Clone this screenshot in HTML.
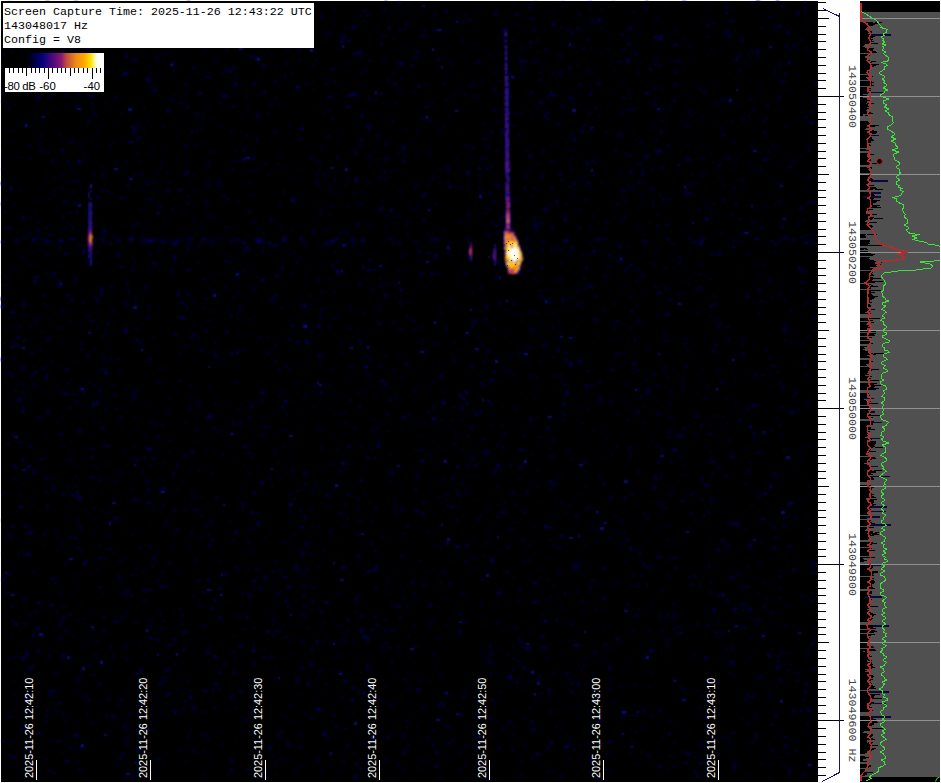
<!DOCTYPE html><html><head><meta charset="utf-8"><style>html,body{margin:0;padding:0;background:#fff;width:941px;height:783px;overflow:hidden}svg{position:absolute;left:0;top:0;display:block}</style></head><body>
<svg width="941" height="783" viewBox="0 0 941 783">
<defs>
<linearGradient id="cb" x1="5" x2="104" y1="0" y2="0" gradientUnits="userSpaceOnUse"><stop offset="0" stop-color="#000"/><stop offset="0.22" stop-color="#000"/><stop offset="0.37" stop-color="#00007a"/><stop offset="0.5" stop-color="#5a0a80"/><stop offset="0.57" stop-color="#8a1a70"/><stop offset="0.62" stop-color="#c04a40"/><stop offset="0.72" stop-color="#f08a18"/><stop offset="0.8" stop-color="#ffa800"/><stop offset="0.865" stop-color="#ffe000"/><stop offset="0.91" stop-color="#fff8b0"/><stop offset="0.94" stop-color="#fff"/><stop offset="1" stop-color="#fff"/></linearGradient>
<filter id="bl" x="-5%" y="-5%" width="110%" height="110%"><feGaussianBlur stdDeviation="1.0"/></filter><filter id="bl2" x="-50%" y="-50%" width="200%" height="200%"><feGaussianBlur stdDeviation="1.6"/></filter>
<linearGradient id="sg1" x1="0" x2="0" y1="186" y2="263" gradientUnits="userSpaceOnUse"><stop offset="0" stop-color="#101060"/><stop offset="0.15" stop-color="#000010"/><stop offset="0.25" stop-color="#1a1a80"/><stop offset="0.45" stop-color="#2a20a0"/><stop offset="0.52" stop-color="#8a2a88"/><stop offset="0.66" stop-color="#f09040"/><stop offset="0.78" stop-color="#8a2a88"/><stop offset="0.88" stop-color="#2a20a0"/><stop offset="1" stop-color="#1a1a80"/></linearGradient>
<linearGradient id="trail" x1="0" x2="0" y1="28" y2="232" gradientUnits="userSpaceOnUse"><stop offset="0" stop-color="#0a0a50"/><stop offset="0.1" stop-color="#14147a"/><stop offset="0.4" stop-color="#2420a0"/><stop offset="0.65" stop-color="#3a20b0"/><stop offset="0.82" stop-color="#5a1aa0"/><stop offset="0.93" stop-color="#8a2888"/><stop offset="1" stop-color="#c05040"/></linearGradient>
<filter id="bl3" x="-50%" y="-10%" width="200%" height="120%"><feGaussianBlur stdDeviation="1.0"/></filter>
</defs>
<rect x="1" y="1" width="817" height="781" fill="#000"/>
<g filter="url(#bl)"><path d="M353 55h3v1h-3zM674 97h4v1h-4zM236 113h3v2h-3zM84 445h2v1h-2zM344 749h4v2h-4zM137 92h3v2h-3zM136 313h2v3h-2zM780 118h2v2h-2zM10 647h3v1h-3zM773 478h2v3h-2zM394 67h3v2h-3zM120 423h4v2h-4zM740 277h4v2h-4zM667 576h4v3h-4zM290 23h3v3h-3zM778 284h2v3h-2zM354 495h3v3h-3zM205 228h4v2h-4zM212 326h3v3h-3zM433 408h3v2h-3zM496 604h2v3h-2zM504 94h4v3h-4zM684 107h3v2h-3zM60 188h3v1h-3zM228 623h2v2h-2zM755 209h4v2h-4zM764 755h2v2h-2zM363 523h2v2h-2zM564 36h3v3h-3zM203 604h2v2h-2zM326 33h3v2h-3zM503 501h2v2h-2zM11 48h2v2h-2zM797 729h3v1h-3zM171 736h4v1h-4zM722 548h3v3h-3zM766 153h3v2h-3zM294 334h2v2h-2zM83 650h2v2h-2zM525 223h4v2h-4zM140 323h3v2h-3zM137 126h3v2h-3zM446 190h4v1h-4zM307 264h3v2h-3zM792 194h2v2h-2zM526 237h3v3h-3zM569 88h4v2h-4zM429 426h3v2h-3zM751 43h4v2h-4zM339 553h3v2h-3zM138 3h3v3h-3zM661 597h2v3h-2zM51 716h2v2h-2zM417 305h3v1h-3zM720 769h2v2h-2zM635 229h3v2h-3zM53 196h4v2h-4zM4 687h3v2h-3zM33 229h2v2h-2zM631 518h4v2h-4zM178 287h2v2h-2zM648 517h4v1h-4zM532 310h3v2h-3zM630 102h2v3h-2zM675 143h3v2h-3zM313 96h2v1h-2zM410 140h3v3h-3zM660 312h3v3h-3zM108 690h2v2h-2zM409 716h3v2h-3zM260 29h2v2h-2zM554 697h3v1h-3zM306 288h3v1h-3zM597 582h3v3h-3zM340 284h3v2h-3zM499 36h4v2h-4zM110 729h2v3h-2zM661 753h4v2h-4zM203 703h4v1h-4zM331 185h2v1h-2zM499 511h3v2h-3zM143 776h2v1h-2zM385 413h2v3h-2zM571 25h2v1h-2zM88 161h2v1h-2zM672 492h2v2h-2zM80 590h3v2h-3zM345 17h3v1h-3zM694 482h3v1h-3zM355 408h2v1h-2zM90 496h4v1h-4zM349 424h2v3h-2zM284 255h3v2h-3zM131 256h2v2h-2zM597 339h2v2h-2zM169 303h3v3h-3zM516 12h2v2h-2zM204 79h2v2h-2zM632 270h3v2h-3zM452 206h2v3h-2zM519 495h4v1h-4zM395 699h3v2h-3zM232 267h2v2h-2zM711 269h3v1h-3zM270 247h4v1h-4zM325 85h3v1h-3zM703 144h2v3h-2zM627 427h3v2h-3zM804 668h2v2h-2zM584 9h4v1h-4zM708 565h2v2h-2zM476 760h3v3h-3zM262 209h2v2h-2zM552 363h3v1h-3zM645 358h3v1h-3zM388 459h2v1h-2zM328 403h2v3h-2zM258 24h4v1h-4zM207 30h2v3h-2zM772 708h4v3h-4zM751 550h3v2h-3zM83 248h2v2h-2zM584 152h2v1h-2zM512 112h2v2h-2zM581 431h2v2h-2zM341 192h4v2h-4zM456 650h2v2h-2zM352 204h2v1h-2zM318 324h3v2h-3zM423 271h3v1h-3zM470 699h2v3h-2zM755 575h4v3h-4zM426 547h2v2h-2zM664 660h4v2h-4zM780 727h3v1h-3zM297 413h3v2h-3zM411 17h3v3h-3zM512 628h2v2h-2zM100 11h2v2h-2zM93 271h2v2h-2zM26 260h4v3h-4zM264 254h2v2h-2zM599 85h2v3h-2zM469 453h3v2h-3zM789 474h3v2h-3zM209 698h4v2h-4zM563 581h3v2h-3zM324 77h2v2h-2zM468 320h2v1h-2zM499 628h2v2h-2zM118 186h2v2h-2zM157 486h2v3h-2zM19 676h2v2h-2zM381 619h3v2h-3zM242 371h3v2h-3zM566 604h2v1h-2zM54 243h2v3h-2zM738 77h3v2h-3zM581 32h2v3h-2zM164 242h3v3h-3zM762 274h2v2h-2zM730 237h3v3h-3zM236 434h3v3h-3zM684 231h4v2h-4zM491 488h2v2h-2zM117 57h3v2h-3zM702 198h4v2h-4zM444 754h3v1h-3zM112 604h2v1h-2zM36 470h4v2h-4zM289 540h4v3h-4zM93 17h3v2h-3zM12 267h4v3h-4zM711 623h2v3h-2zM431 243h4v1h-4zM316 276h4v3h-4zM514 566h3v2h-3zM118 561h4v2h-4zM683 249h3v1h-3zM618 488h2v2h-2zM210 361h3v2h-3zM77 122h2v2h-2zM663 372h3v3h-3zM206 435h3v2h-3zM173 615h2v1h-2zM703 677h2v2h-2zM635 672h2v2h-2zM558 627h2v2h-2zM798 26h2v1h-2zM40 696h2v1h-2zM223 138h2v1h-2zM495 721h4v3h-4zM465 778h4v2h-4zM125 515h2v2h-2zM126 196h3v2h-3zM427 624h4v2h-4zM747 199h3v1h-3zM428 384h2v3h-2zM810 138h3v3h-3zM111 586h2v2h-2zM627 599h2v1h-2zM665 679h3v2h-3zM416 327h3v2h-3zM535 553h3v2h-3zM223 620h2v3h-2zM331 567h2v1h-2zM147 668h2v1h-2zM663 387h4v2h-4zM380 157h2v3h-2zM681 229h4v2h-4zM793 255h3v2h-3zM534 541h2v2h-2zM350 529h3v1h-3zM769 511h3v2h-3zM642 233h4v3h-4zM306 516h2v1h-2zM404 417h3v2h-3zM60 263h2v2h-2zM650 600h2v2h-2zM577 53h3v1h-3zM162 357h3v1h-3zM119 425h3v3h-3zM505 228h3v2h-3zM695 81h4v2h-4zM110 587h3v1h-3zM419 258h3v2h-3zM713 691h3v3h-3zM254 399h4v3h-4zM29 254h3v2h-3zM609 500h2v2h-2zM252 735h3v3h-3zM646 368h4v3h-4zM409 318h3v1h-3zM217 190h4v1h-4zM181 662h2v2h-2zM293 545h3v2h-3zM3 490h3v1h-3zM786 413h4v2h-4zM156 480h2v2h-2zM52 160h4v2h-4zM249 35h3v3h-3zM692 412h3v2h-3zM661 655h2v1h-2zM626 704h2v2h-2zM461 580h2v2h-2zM153 628h4v2h-4zM546 436h2v3h-2zM642 659h3v1h-3zM203 201h2v2h-2zM437 58h4v1h-4zM363 567h3v2h-3zM689 57h4v2h-4zM539 141h2v1h-2zM296 563h3v2h-3zM299 407h2v2h-2zM215 6h3v2h-3zM375 554h2v3h-2zM391 136h3v1h-3zM763 432h2v3h-2zM49 336h4v2h-4zM416 247h3v2h-3zM657 491h3v2h-3zM814 356h3v1h-3zM213 438h3v2h-3zM742 777h3v1h-3zM137 329h3v3h-3zM207 444h2v2h-2zM788 554h3v1h-3zM788 704h2v2h-2zM355 461h3v2h-3zM781 612h3v1h-3zM104 174h3v1h-3zM4 179h2v1h-2zM20 65h2v2h-2zM683 329h2v2h-2zM26 564h3v2h-3zM257 562h4v2h-4zM431 604h2v3h-2zM380 482h2v2h-2zM583 572h2v3h-2zM46 1h3v1h-3zM641 198h2v2h-2zM666 502h2v2h-2zM294 50h2v1h-2zM185 55h2v2h-2zM376 443h2v3h-2zM813 144h4v2h-4zM492 182h3v1h-3zM580 553h3v1h-3zM517 347h4v2h-4zM775 483h2v2h-2zM657 343h4v1h-4zM18 151h2v2h-2zM796 30h2v1h-2zM364 376h2v2h-2zM432 530h3v1h-3zM417 115h4v2h-4zM405 536h2v1h-2zM258 293h2v1h-2zM719 630h3v2h-3zM519 293h4v1h-4zM363 20h2v2h-2zM683 203h2v3h-2zM699 175h2v2h-2zM256 23h2v2h-2zM154 149h2v1h-2zM343 164h4v1h-4zM614 185h3v1h-3zM11 158h2v1h-2zM349 678h2v1h-2zM443 127h2v1h-2zM336 423h2v2h-2zM274 596h2v3h-2zM805 186h2v2h-2zM575 334h2v3h-2zM232 31h4v2h-4zM809 261h3v2h-3zM70 45h3v1h-3zM312 530h2v3h-2zM459 349h4v3h-4zM471 760h2v1h-2zM653 187h3v2h-3zM797 341h2v3h-2zM704 496h3v1h-3zM537 101h3v2h-3zM36 229h3v2h-3zM393 569h3v2h-3zM578 355h3v2h-3zM565 213h3v3h-3zM30 135h3v2h-3zM376 166h2v1h-2zM549 89h2v2h-2zM294 202h3v2h-3zM537 677h4v2h-4zM584 571h3v2h-3zM402 428h2v1h-2zM218 659h4v1h-4zM660 570h2v3h-2zM499 671h4v3h-4zM323 175h3v3h-3zM416 390h3v3h-3zM215 272h3v3h-3zM691 122h2v2h-2zM149 450h3v2h-3zM657 764h3v2h-3zM161 161h2v2h-2zM636 775h2v2h-2zM811 396h3v3h-3zM105 522h3v2h-3zM648 536h2v1h-2zM492 134h3v2h-3zM100 13h4v3h-4zM492 55h3v3h-3zM258 648h3v2h-3zM807 734h4v2h-4zM110 427h4v1h-4zM65 672h3v2h-3zM679 685h3v3h-3zM274 80h4v2h-4zM448 633h4v3h-4zM217 311h4v2h-4zM619 248h4v2h-4zM364 53h3v3h-3zM411 68h2v1h-2zM494 776h3v1h-3zM11 299h4v1h-4zM407 411h2v3h-2zM574 737h3v1h-3zM194 297h4v2h-4zM430 620h2v2h-2zM269 122h3v1h-3zM397 652h2v2h-2zM796 101h3v2h-3zM691 442h3v2h-3zM169 726h3v1h-3zM103 353h3v3h-3zM96 309h4v3h-4zM55 326h2v2h-2zM356 346h3v2h-3zM462 672h3v3h-3zM499 484h3v1h-3zM337 771h4v3h-4zM305 645h2v3h-2zM298 84h4v1h-4zM465 493h4v3h-4zM798 439h2v2h-2zM46 232h2v2h-2zM303 766h3v2h-3zM407 446h2v2h-2zM385 1h2v3h-2zM487 567h3v3h-3zM141 570h4v2h-4zM269 250h3v2h-3zM12 700h2v2h-2zM95 286h2v3h-2zM192 193h2v2h-2zM153 554h3v2h-3zM475 261h3v2h-3zM154 566h2v1h-2zM221 359h2v2h-2zM112 72h2v1h-2zM39 142h3v3h-3zM246 568h4v3h-4zM797 93h2v1h-2zM422 115h3v1h-3zM359 252h3v3h-3zM143 94h4v1h-4zM741 707h2v3h-2zM789 331h3v3h-3zM479 342h3v1h-3zM358 633h4v2h-4zM788 566h4v1h-4zM704 417h4v2h-4zM208 456h2v2h-2zM75 85h3v2h-3zM38 764h2v3h-2zM230 212h2v1h-2zM499 273h3v2h-3zM758 193h4v2h-4zM147 681h2v1h-2zM728 365h2v1h-2zM530 651h2v2h-2zM647 318h3v2h-3zM462 475h3v2h-3zM704 15h2v3h-2zM366 108h3v1h-3zM758 41h2v2h-2zM308 685h4v3h-4zM789 630h2v2h-2zM673 59h3v2h-3zM181 173h3v2h-3zM116 616h2v3h-2zM78 716h3v2h-3zM671 424h3v2h-3zM582 766h3v2h-3zM16 336h4v1h-4zM799 163h2v1h-2zM282 766h3v1h-3zM802 731h3v3h-3zM290 653h4v3h-4zM234 694h2v3h-2zM144 182h3v3h-3zM163 237h2v2h-2zM759 300h2v2h-2zM506 328h3v2h-3zM216 397h3v2h-3zM432 512h4v2h-4zM62 599h3v1h-3zM133 673h2v2h-2zM402 742h2v2h-2zM640 322h3v3h-3zM364 279h3v2h-3zM434 240h3v1h-3zM306 393h4v2h-4zM183 208h3v2h-3zM589 566h4v2h-4zM710 129h2v3h-2zM109 8h4v2h-4zM603 82h3v1h-3zM563 94h2v2h-2zM488 93h2v1h-2zM77 262h4v1h-4zM804 497h4v2h-4zM475 10h4v2h-4zM314 633h3v2h-3zM2 276h4v1h-4zM705 549h2v3h-2zM763 383h2v2h-2zM621 373h3v1h-3zM313 430h3v3h-3zM493 577h4v2h-4zM685 625h2v2h-2zM226 401h3v2h-3zM392 419h3v2h-3zM594 451h3v2h-3zM168 413h3v3h-3zM696 391h3v3h-3zM776 149h4v2h-4zM303 400h2v2h-2zM53 688h3v3h-3zM769 653h2v2h-2zM356 331h4v3h-4zM674 508h2v2h-2zM517 25h4v3h-4zM343 394h4v2h-4zM450 156h2v1h-2zM317 649h4v1h-4zM680 371h3v1h-3zM478 361h3v2h-3zM318 375h3v2h-3zM72 687h2v2h-2zM296 364h2v3h-2zM657 101h2v2h-2zM256 394h3v1h-3zM139 250h2v2h-2zM483 744h2v2h-2zM664 646h4v2h-4zM776 386h3v2h-3zM555 86h3v3h-3zM87 642h2v2h-2zM656 342h2v2h-2zM613 448h4v3h-4zM417 469h3v3h-3zM808 237h2v2h-2zM409 12h3v2h-3zM487 384h4v2h-4zM189 371h4v2h-4zM227 402h2v3h-2zM639 530h3v3h-3zM655 249h4v3h-4zM747 597h3v2h-3zM260 6h2v2h-2zM447 41h3v2h-3zM147 188h4v1h-4zM173 663h2v2h-2zM650 262h2v2h-2zM413 595h3v2h-3zM654 547h2v1h-2zM482 568h4v1h-4zM626 382h4v3h-4zM70 169h3v3h-3zM687 24h3v2h-3zM473 465h2v2h-2zM230 563h2v1h-2zM65 48h2v1h-2zM424 150h2v1h-2zM311 554h4v2h-4zM13 150h3v1h-3zM17 682h3v1h-3zM801 272h2v2h-2zM429 439h3v2h-3zM107 358h2v3h-2zM397 328h3v3h-3zM553 254h4v2h-4zM783 761h3v2h-3zM87 481h2v1h-2zM608 464h2v2h-2zM208 553h3v1h-3zM743 338h3v2h-3zM430 229h4v1h-4zM323 668h2v1h-2zM204 211h4v3h-4zM245 536h2v3h-2zM595 321h3v1h-3zM91 360h3v1h-3zM106 175h3v2h-3zM92 242h3v2h-3zM721 110h2v1h-2zM603 230h3v2h-3zM258 228h4v2h-4zM383 628h3v2h-3zM350 379h2v2h-2zM167 519h2v2h-2zM688 242h2v1h-2zM709 683h3v2h-3zM90 464h4v3h-4zM606 205h4v1h-4zM790 740h3v1h-3zM772 684h4v1h-4zM662 349h2v1h-2zM75 45h3v2h-3zM814 628h4v2h-4zM691 296h2v2h-2zM560 104h3v3h-3zM97 251h2v3h-2zM621 151h2v2h-2zM38 756h2v2h-2zM510 640h2v2h-2zM611 425h2v1h-2zM615 356h2v2h-2zM333 101h3v2h-3zM356 567h4v2h-4zM161 248h3v2h-3zM497 591h2v2h-2zM549 668h3v2h-3zM269 17h3v2h-3zM206 465h2v3h-2zM123 448h3v3h-3zM382 28h2v1h-2zM744 322h2v2h-2zM122 452h3v3h-3zM793 83h3v1h-3zM468 486h3v1h-3zM462 482h2v2h-2zM77 231h3v2h-3zM663 620h4v1h-4zM487 704h3v1h-3zM609 679h4v3h-4zM137 74h3v1h-3zM381 557h3v2h-3zM585 173h4v3h-4zM196 343h2v2h-2zM803 340h3v2h-3zM790 166h2v2h-2zM730 503h3v2h-3zM535 680h4v1h-4zM497 504h2v2h-2zM12 431h4v3h-4zM194 570h4v2h-4zM333 553h3v3h-3zM745 180h2v3h-2zM437 351h2v2h-2zM459 287h2v1h-2zM621 337h2v2h-2zM604 259h2v2h-2zM146 591h4v1h-4zM420 567h3v2h-3zM651 197h3v2h-3zM528 324h4v2h-4zM781 743h4v1h-4zM442 34h3v2h-3zM496 601h4v3h-4zM630 182h4v2h-4zM491 719h2v2h-2zM209 234h2v2h-2zM534 2h3v1h-3zM629 714h3v3h-3zM365 131h3v2h-3zM143 656h3v2h-3zM577 264h2v3h-2zM583 274h2v1h-2zM451 133h3v1h-3zM78 542h2v2h-2zM27 425h2v2h-2zM608 289h2v3h-2zM260 66h2v2h-2zM507 114h2v2h-2zM178 71h4v1h-4zM480 471h2v2h-2zM575 347h2v3h-2zM273 259h3v1h-3zM751 414h2v2h-2zM383 679h2v2h-2zM587 602h3v3h-3zM209 151h3v2h-3zM424 100h3v2h-3zM291 513h2v3h-2zM178 668h2v2h-2zM430 270h3v2h-3zM607 403h3v3h-3zM313 217h3v3h-3zM529 119h3v2h-3zM374 310h2v3h-2zM385 499h3v1h-3zM384 230h4v3h-4zM325 267h3v1h-3zM90 631h4v2h-4zM113 95h4v2h-4zM642 174h4v3h-4zM45 67h3v2h-3zM752 180h4v1h-4zM84 440h2v1h-2zM106 338h2v3h-2zM431 569h4v2h-4zM523 108h2v3h-2zM469 144h3v1h-3zM441 625h2v1h-2zM622 323h3v2h-3zM274 449h2v3h-2zM685 459h3v1h-3zM49 738h4v3h-4zM657 111h4v2h-4zM608 494h2v1h-2zM189 290h2v2h-2zM620 256h3v1h-3zM610 690h3v1h-3zM191 440h2v3h-2zM611 139h2v2h-2zM638 471h2v2h-2zM191 387h3v2h-3zM115 92h2v2h-2zM193 67h3v2h-3zM705 672h2v1h-2zM269 117h2v1h-2zM726 275h2v2h-2zM370 406h2v3h-2zM390 239h4v2h-4zM185 572h2v1h-2zM574 475h4v1h-4zM45 659h3v2h-3zM222 194h3v1h-3zM47 710h2v2h-2zM223 254h4v2h-4zM583 176h4v3h-4zM76 689h3v3h-3zM638 472h2v1h-2zM812 416h2v2h-2zM390 336h3v1h-3zM263 370h3v1h-3zM810 129h3v3h-3zM553 455h3v2h-3zM690 657h2v2h-2zM562 301h4v2h-4zM581 428h3v1h-3zM703 714h3v2h-3zM176 239h2v1h-2zM484 130h2v3h-2zM246 761h2v1h-2zM97 103h3v2h-3zM222 361h4v3h-4zM178 361h2v2h-2zM414 465h2v2h-2zM518 423h3v3h-3zM504 205h3v2h-3zM213 691h2v2h-2zM593 156h4v2h-4zM755 491h4v3h-4zM182 755h3v2h-3zM676 24h2v3h-2zM153 413h3v2h-3zM266 630h4v3h-4zM430 556h2v1h-2zM389 348h3v2h-3zM479 379h3v2h-3zM347 444h4v3h-4zM713 102h4v3h-4zM337 264h3v2h-3zM239 284h3v2h-3zM416 10h3v2h-3zM442 671h3v2h-3zM294 205h2v1h-2zM409 395h2v3h-2zM573 411h3v1h-3zM551 12h3v1h-3zM261 142h3v1h-3zM685 657h2v2h-2zM418 583h3v1h-3zM732 768h4v2h-4zM395 262h3v1h-3zM53 511h4v2h-4zM758 564h2v3h-2zM53 650h4v3h-4zM377 730h2v1h-2zM719 370h2v2h-2zM122 373h2v3h-2zM301 730h2v2h-2zM521 774h3v2h-3zM526 492h2v1h-2zM481 191h3v3h-3zM395 428h2v1h-2zM133 768h4v3h-4zM710 574h4v1h-4zM453 444h4v1h-4zM117 46h2v1h-2zM11 117h3v1h-3zM814 428h3v3h-3zM325 702h4v2h-4zM748 607h3v3h-3zM115 119h2v2h-2zM141 55h4v2h-4zM153 391h4v2h-4zM303 639h2v2h-2zM245 237h3v2h-3zM367 109h2v2h-2zM396 675h3v2h-3zM525 149h4v3h-4zM487 298h2v2h-2zM638 20h4v1h-4zM501 234h3v1h-3zM97 326h2v2h-2zM14 151h2v2h-2zM54 37h3v2h-3zM586 432h2v3h-2zM518 114h4v2h-4zM326 735h3v2h-3zM379 555h2v3h-2zM264 416h2v1h-2zM186 679h3v3h-3zM489 466h3v1h-3zM437 573h3v2h-3zM193 249h2v3h-2zM198 188h4v2h-4zM100 699h2v3h-2zM244 119h2v1h-2zM619 543h2v2h-2zM324 78h4v3h-4zM106 282h3v1h-3zM387 70h2v2h-2zM788 620h3v1h-3zM299 160h3v1h-3zM485 601h2v2h-2zM335 24h2v1h-2zM89 454h2v2h-2zM291 532h3v1h-3zM320 146h4v2h-4zM587 746h3v2h-3zM789 48h3v3h-3zM480 601h2v1h-2zM332 16h4v2h-4zM273 571h3v1h-3zM451 334h3v1h-3zM342 449h3v1h-3zM468 219h2v3h-2zM380 645h4v2h-4zM493 16h3v1h-3zM8 400h4v2h-4zM214 704h3v2h-3zM426 447h2v2h-2zM580 508h2v2h-2zM73 311h4v2h-4zM805 691h3v1h-3zM724 453h2v1h-2zM744 743h2v2h-2zM769 178h3v3h-3zM632 740h2v3h-2zM697 63h3v1h-3zM405 163h2v1h-2zM646 1h2v1h-2zM82 770h3v3h-3zM70 341h2v3h-2zM190 48h2v2h-2zM396 68h3v2h-3zM777 660h2v3h-2zM15 215h3v3h-3zM236 589h2v3h-2zM316 639h2v3h-2zM243 387h2v1h-2zM798 422h3v1h-3zM720 736h4v3h-4zM20 274h2v2h-2zM499 439h2v3h-2zM669 218h4v2h-4zM585 447h4v2h-4zM23 666h2v2h-2zM136 567h3v3h-3zM556 632h2v2h-2zM518 670h3v1h-3zM569 11h2v2h-2zM160 165h2v2h-2zM691 290h3v1h-3zM616 337h3v2h-3zM275 86h3v2h-3zM524 127h3v1h-3zM500 470h2v2h-2zM435 109h2v3h-2zM192 174h2v1h-2zM586 635h2v3h-2zM199 605h4v2h-4zM391 723h2v2h-2zM403 12h4v3h-4zM30 484h3v1h-3zM184 353h2v3h-2zM477 266h3v2h-3zM100 302h3v1h-3zM382 86h3v1h-3zM792 199h4v1h-4zM201 279h4v1h-4zM755 624h3v3h-3zM440 210h2v1h-2zM400 488h3v2h-3zM94 602h2v1h-2zM585 527h2v2h-2zM414 450h4v2h-4zM417 435h2v3h-2zM344 31h2v2h-2zM93 98h3v2h-3zM106 110h3v2h-3zM517 59h3v2h-3zM784 234h3v3h-3zM97 650h2v3h-2zM83 293h2v2h-2zM541 639h2v2h-2zM767 206h3v2h-3zM550 74h3v3h-3zM593 57h2v2h-2zM502 181h3v2h-3zM270 52h3v2h-3zM415 757h3v2h-3zM778 434h4v2h-4zM110 631h3v2h-3zM238 457h2v3h-2zM400 468h3v2h-3zM370 687h3v1h-3zM216 478h2v2h-2zM548 202h2v2h-2zM73 712h4v1h-4zM339 670h3v3h-3zM173 27h2v3h-2zM646 389h4v2h-4zM223 710h2v2h-2zM143 746h2v2h-2zM532 670h3v2h-3zM277 266h3v1h-3zM547 278h2v1h-2zM507 238h2v3h-2zM609 676h2v3h-2zM90 533h2v2h-2zM352 686h3v1h-3zM251 334h2v3h-2zM91 436h4v2h-4zM423 238h2v3h-2zM741 38h3v2h-3zM140 414h3v1h-3zM690 35h2v1h-2zM375 246h3v1h-3zM757 734h3v3h-3zM438 497h3v2h-3zM759 286h2v3h-2zM681 738h4v1h-4zM9 141h3v3h-3zM805 91h3v3h-3zM747 64h2v1h-2zM336 130h4v2h-4zM794 772h2v1h-2zM6 684h2v3h-2zM621 543h2v3h-2zM404 419h4v2h-4zM481 618h2v2h-2zM766 748h2v1h-2zM117 458h3v1h-3zM315 698h4v2h-4zM366 762h3v2h-3zM388 26h4v1h-4zM322 471h3v3h-3zM20 519h2v2h-2zM225 349h2v2h-2zM348 379h3v2h-3zM799 122h4v2h-4zM648 5h2v2h-2zM765 492h2v2h-2zM20 491h2v3h-2zM625 402h2v3h-2zM534 633h3v2h-3zM803 599h4v2h-4zM672 435h2v1h-2zM343 152h3v2h-3zM465 690h4v1h-4zM357 743h3v2h-3zM468 519h3v1h-3zM210 412h3v2h-3zM473 590h2v2h-2zM357 27h2v3h-2zM11 592h2v3h-2zM377 764h3v3h-3zM138 122h3v3h-3zM520 762h3v2h-3zM178 678h3v2h-3zM10 739h4v2h-4zM445 597h2v3h-2zM646 541h3v2h-3zM374 733h2v2h-2zM291 384h3v2h-3zM378 697h4v2h-4zM745 482h4v3h-4zM498 266h4v1h-4zM61 662h4v2h-4zM801 446h3v3h-3zM611 529h3v3h-3zM381 117h3v2h-3zM691 353h3v2h-3zM273 564h2v3h-2zM226 309h3v2h-3zM673 338h3v3h-3zM561 74h4v1h-4zM315 178h4v3h-4zM518 687h2v2h-2zM238 166h2v2h-2zM626 465h3v2h-3zM725 574h3v3h-3zM612 93h4v2h-4zM686 124h2v2h-2zM79 531h3v2h-3zM522 210h2v1h-2zM520 642h2v2h-2zM53 358h4v1h-4zM247 705h3v3h-3zM208 756h4v3h-4zM104 241h2v1h-2zM420 769h2v2h-2zM444 400h2v2h-2zM812 633h3v3h-3zM690 99h3v3h-3zM21 516h3v1h-3zM44 201h2v2h-2zM468 73h2v2h-2zM721 83h2v1h-2zM139 99h2v1h-2zM260 712h2v2h-2zM608 752h2v2h-2zM569 357h4v2h-4zM724 530h3v1h-3zM474 269h3v2h-3zM376 96h3v1h-3zM663 588h3v2h-3zM343 104h3v2h-3zM190 271h4v1h-4zM217 667h3v2h-3zM679 93h2v3h-2zM526 344h3v3h-3zM547 276h2v3h-2zM364 36h2v2h-2zM346 425h2v1h-2zM282 756h2v2h-2zM325 578h2v3h-2zM18 593h3v3h-3zM776 61h3v2h-3zM409 692h2v2h-2zM527 662h4v1h-4zM118 701h2v2h-2zM98 654h3v2h-3zM631 649h3v3h-3zM500 516h2v2h-2zM37 424h2v2h-2zM421 329h2v2h-2zM489 622h3v1h-3zM486 168h2v3h-2zM433 424h4v2h-4zM294 721h3v2h-3zM172 276h2v2h-2zM759 619h2v2h-2zM624 383h4v2h-4zM123 762h3v2h-3zM466 571h4v2h-4zM335 269h4v2h-4zM297 547h3v1h-3zM302 553h2v3h-2zM266 612h3v3h-3zM166 465h2v2h-2zM762 553h4v1h-4zM474 207h2v1h-2zM619 294h2v2h-2zM421 287h4v1h-4zM625 284h2v1h-2zM783 632h3v1h-3zM681 280h4v2h-4zM549 601h3v3h-3zM634 523h4v1h-4zM804 188h4v2h-4zM632 416h3v3h-3zM554 388h2v3h-2zM419 67h2v1h-2zM520 268h4v1h-4zM321 202h2v3h-2zM159 681h4v1h-4zM479 42h3v2h-3zM74 64h4v2h-4zM250 401h3v2h-3zM804 470h3v1h-3zM93 614h4v2h-4zM247 225h2v1h-2zM611 754h3v3h-3zM786 769h3v3h-3zM62 644h3v2h-3zM187 773h2v1h-2zM714 124h3v3h-3zM795 737h2v2h-2zM770 139h2v2h-2zM108 335h2v1h-2zM166 150h2v2h-2zM230 431h4v3h-4zM407 238h3v2h-3zM140 600h3v2h-3zM705 219h4v3h-4zM681 5h2v3h-2zM174 32h4v2h-4zM569 261h2v2h-2zM758 93h3v2h-3zM570 192h2v2h-2zM471 697h4v2h-4zM478 374h3v2h-3zM408 481h3v1h-3zM253 322h2v2h-2zM178 722h2v3h-2zM439 23h2v1h-2zM666 486h4v2h-4zM104 552h2v2h-2zM60 416h2v1h-2zM800 647h3v1h-3zM250 285h3v2h-3zM564 461h3v1h-3zM521 361h2v3h-2zM221 435h3v2h-3zM422 576h2v3h-2zM192 668h4v1h-4zM234 488h3v1h-3zM76 248h2v1h-2zM216 100h3v2h-3zM641 646h3v1h-3zM53 618h2v2h-2zM368 224h4v3h-4zM787 64h2v2h-2zM286 85h2v2h-2zM811 250h3v1h-3zM734 477h3v2h-3zM494 11h3v2h-3zM33 530h2v3h-2zM381 434h3v2h-3zM632 651h3v1h-3zM695 305h2v1h-2zM157 344h3v3h-3zM767 506h3v2h-3zM806 317h2v1h-2zM700 240h4v3h-4zM457 231h3v2h-3zM277 277h4v1h-4zM75 463h3v3h-3zM633 431h3v1h-3zM802 132h3v2h-3zM260 458h2v2h-2zM798 446h3v2h-3zM218 618h3v2h-3zM144 451h2v2h-2zM400 583h3v3h-3zM644 612h2v2h-2zM340 651h3v2h-3zM116 763h4v3h-4zM8 2h4v3h-4zM13 326h2v3h-2zM311 270h3v2h-3zM549 327h2v1h-2zM473 501h3v1h-3zM45 304h4v2h-4zM802 475h4v2h-4zM58 477h4v2h-4zM581 540h2v3h-2zM130 584h3v1h-3zM649 388h3v2h-3zM705 458h3v1h-3zM362 530h4v1h-4zM27 457h2v2h-2zM720 158h4v2h-4zM748 219h4v1h-4zM3 331h2v1h-2zM30 710h2v2h-2zM79 389h4v3h-4zM124 740h3v3h-3zM573 496h3v2h-3zM154 686h3v1h-3zM571 374h2v2h-2zM118 572h3v1h-3zM757 705h2v1h-2zM456 162h3v3h-3zM696 120h2v2h-2zM643 410h3v1h-3zM131 449h2v2h-2zM460 268h2v2h-2zM371 373h3v1h-3zM559 214h2v2h-2zM279 151h3v2h-3zM57 345h3v2h-3zM612 2h3v2h-3zM503 775h2v1h-2zM304 85h2v2h-2zM451 418h2v2h-2zM114 723h2v3h-2zM543 114h3v3h-3zM217 26h2v2h-2zM170 266h3v3h-3zM9 574h4v1h-4zM324 491h2v1h-2zM478 680h2v1h-2zM269 142h2v3h-2zM475 137h3v2h-3zM457 12h4v2h-4zM264 247h2v2h-2zM644 723h3v2h-3zM356 94h3v2h-3zM345 687h3v1h-3zM150 759h3v3h-3zM812 636h3v2h-3zM206 604h3v2h-3zM397 354h4v3h-4zM82 29h2v1h-2zM624 490h3v1h-3zM260 594h3v1h-3zM670 540h2v2h-2zM807 716h4v3h-4zM424 90h3v1h-3zM594 490h3v2h-3zM762 230h3v1h-3zM101 760h2v2h-2zM208 661h3v2h-3zM502 768h3v1h-3zM811 494h4v2h-4zM274 749h2v1h-2zM44 293h2v1h-2zM641 429h2v2h-2zM401 259h3v1h-3zM624 661h3v2h-3zM636 388h3v3h-3zM509 61h4v1h-4zM625 602h2v3h-2zM226 735h3v1h-3zM54 451h2v1h-2zM151 145h3v3h-3zM794 253h2v1h-2zM273 547h2v2h-2zM249 545h2v2h-2zM620 550h3v2h-3zM145 620h2v3h-2zM463 716h2v1h-2zM169 492h4v2h-4zM593 106h2v1h-2zM386 700h2v2h-2zM13 406h2v3h-2zM18 105h3v1h-3zM745 475h3v3h-3zM688 356h2v1h-2zM486 230h3v3h-3zM712 114h3v2h-3zM309 384h4v1h-4zM380 169h3v2h-3zM213 244h3v1h-3zM172 511h3v1h-3zM374 700h4v1h-4zM295 524h3v2h-3zM108 346h3v3h-3zM212 174h3v1h-3zM250 219h2v2h-2zM537 391h3v1h-3zM149 685h2v2h-2zM482 385h2v3h-2zM798 497h4v2h-4zM717 106h2v3h-2zM395 670h2v3h-2zM158 553h4v3h-4zM336 397h2v3h-2zM235 235h4v1h-4zM484 242h3v2h-3zM211 311h4v2h-4zM542 409h2v2h-2zM715 183h4v1h-4zM48 648h4v2h-4zM791 615h4v2h-4zM263 135h3v2h-3zM286 702h4v3h-4zM506 528h3v2h-3zM368 654h4v2h-4zM712 607h3v2h-3zM305 339h3v3h-3zM703 521h3v1h-3zM692 195h4v2h-4zM222 271h2v3h-2zM479 298h4v2h-4zM583 739h3v1h-3zM534 442h3v2h-3zM613 533h2v2h-2zM166 113h2v2h-2zM387 387h3v3h-3zM444 75h3v3h-3zM246 37h3v2h-3zM502 565h2v2h-2zM177 594h2v2h-2zM598 561h2v2h-2zM477 97h2v2h-2zM257 206h2v1h-2zM493 702h4v2h-4zM65 548h3v2h-3zM363 295h3v2h-3zM281 330h4v2h-4zM413 46h2v2h-2zM468 688h4v2h-4zM383 761h3v2h-3zM724 504h2v3h-2zM749 544h3v1h-3zM597 205h3v2h-3zM401 152h3v2h-3zM93 610h2v2h-2zM573 158h4v1h-4zM759 711h2v2h-2zM430 210h2v3h-2zM435 427h2v2h-2zM403 156h4v1h-4zM764 462h2v2h-2zM513 497h3v1h-3zM99 125h3v2h-3zM414 389h3v2h-3zM786 768h3v2h-3zM210 36h4v2h-4zM534 93h3v2h-3zM309 594h2v2h-2zM25 652h2v1h-2zM320 151h3v3h-3zM459 409h4v2h-4zM107 45h2v3h-2zM434 147h2v2h-2zM59 434h4v3h-4zM96 219h3v3h-3zM804 492h2v1h-2zM147 491h2v3h-2zM106 350h2v2h-2zM48 226h2v2h-2zM167 678h2v2h-2zM596 10h4v1h-4zM349 443h3v2h-3zM256 644h3v1h-3zM634 548h4v2h-4zM540 221h4v2h-4zM287 396h2v2h-2zM612 649h2v2h-2zM722 540h3v3h-3zM210 274h3v3h-3zM770 193h3v2h-3zM408 703h2v3h-2zM404 92h3v2h-3zM42 57h3v2h-3zM591 189h3v2h-3zM348 326h3v2h-3zM277 215h2v2h-2zM475 555h3v2h-3zM344 457h4v2h-4zM519 49h2v3h-2zM359 559h3v3h-3zM527 154h3v2h-3zM501 330h3v2h-3zM509 48h2v1h-2zM59 93h4v1h-4zM559 330h3v3h-3zM144 202h4v2h-4zM11 66h3v2h-3zM253 518h3v2h-3zM185 21h2v1h-2zM692 447h2v2h-2zM790 417h3v1h-3zM223 551h3v3h-3zM460 549h4v3h-4zM257 172h2v2h-2zM585 518h2v3h-2zM679 537h2v3h-2zM668 410h4v2h-4zM587 120h3v2h-3zM17 736h2v3h-2zM357 658h3v1h-3zM305 323h3v2h-3zM91 42h4v3h-4zM8 328h3v1h-3zM262 657h4v3h-4zM2 144h2v1h-2zM133 674h2v1h-2zM800 461h2v3h-2zM474 764h2v1h-2zM450 746h3v2h-3zM88 338h4v1h-4zM727 386h3v3h-3zM258 232h2v3h-2zM753 468h3v1h-3zM303 472h2v2h-2zM719 186h2v1h-2zM716 439h3v1h-3zM807 144h4v3h-4zM68 456h3v3h-3zM34 172h3v1h-3zM509 678h3v2h-3zM602 720h4v1h-4zM27 92h2v3h-2zM551 310h3v2h-3zM687 494h4v2h-4zM187 135h2v2h-2zM520 677h2v2h-2zM554 484h3v2h-3zM435 226h3v3h-3zM622 130h4v2h-4zM674 539h3v2h-3zM574 706h4v2h-4zM282 470h4v2h-4zM86 512h4v2h-4zM89 19h2v2h-2zM215 127h2v3h-2zM458 186h4v3h-4zM676 479h3v2h-3zM713 357h3v2h-3zM128 713h3v2h-3zM476 630h3v2h-3zM25 650h3v2h-3zM523 31h2v2h-2zM529 648h4v2h-4zM719 150h2v1h-2zM28 33h4v1h-4zM742 546h4v2h-4zM214 601h3v2h-3zM563 420h3v2h-3zM676 172h3v2h-3zM742 642h3v3h-3zM194 219h3v1h-3zM709 537h4v3h-4zM729 665h3v2h-3zM680 742h2v1h-2zM313 762h2v2h-2zM537 263h4v1h-4zM502 532h3v1h-3zM300 68h2v2h-2zM476 351h3v3h-3zM489 522h3v3h-3zM497 369h2v2h-2zM311 218h2v1h-2zM613 363h2v3h-2zM767 623h3v2h-3zM353 778h3v3h-3zM478 349h3v2h-3zM714 732h3v2h-3zM742 121h2v3h-2zM201 436h4v1h-4zM236 509h3v2h-3zM94 85h4v2h-4zM25 622h3v3h-3zM263 644h2v1h-2zM381 590h4v1h-4zM133 383h2v2h-2zM600 430h4v2h-4zM38 586h3v2h-3zM56 265h3v3h-3zM608 370h2v1h-2zM564 394h3v3h-3zM381 379h4v3h-4zM547 292h3v1h-3zM473 559h2v2h-2zM460 84h3v2h-3zM69 665h2v2h-2zM249 284h3v2h-3zM569 579h3v2h-3zM576 47h4v1h-4zM553 27h4v1h-4zM567 659h3v2h-3zM319 688h3v2h-3zM424 55h4v2h-4zM583 720h2v3h-2zM493 752h3v1h-3zM289 276h2v3h-2zM218 731h4v3h-4zM25 469h2v2h-2zM565 468h4v2h-4zM430 457h2v2h-2zM107 695h4v2h-4zM413 347h2v1h-2zM8 37h4v3h-4zM556 216h2v2h-2zM443 336h3v2h-3zM295 770h3v2h-3zM662 299h2v2h-2zM621 81h3v3h-3zM155 325h2v3h-2zM301 349h2v2h-2zM783 612h2v2h-2zM557 71h4v2h-4zM144 591h3v2h-3zM321 628h2v1h-2zM377 254h2v2h-2zM648 498h2v1h-2zM428 726h2v3h-2zM28 757h4v3h-4zM617 354h3v2h-3zM271 20h3v3h-3zM127 697h2v2h-2zM472 452h3v3h-3zM129 754h3v1h-3zM213 318h3v2h-3zM26 220h3v1h-3zM382 86h3v1h-3zM546 209h2v2h-2zM178 689h2v1h-2zM730 450h3v2h-3zM193 458h2v2h-2zM535 713h3v1h-3zM538 578h3v3h-3zM792 362h4v2h-4zM223 94h3v3h-3zM293 534h3v1h-3zM488 449h3v1h-3zM376 184h2v3h-2zM357 553h4v2h-4zM694 118h4v2h-4zM560 276h3v3h-3zM74 555h4v2h-4zM669 404h3v2h-3zM369 756h3v2h-3zM430 306h2v3h-2zM1 520h2v1h-2zM553 160h3v2h-3zM768 547h3v3h-3zM757 272h3v2h-3zM788 529h3v2h-3zM243 730h4v2h-4zM802 178h3v3h-3zM103 207h3v2h-3zM391 731h3v3h-3zM749 774h3v2h-3zM612 397h4v1h-4zM659 513h3v3h-3zM419 381h2v3h-2zM577 411h2v1h-2zM443 637h2v1h-2zM251 546h4v2h-4zM342 403h2v2h-2zM448 650h3v2h-3zM263 754h4v2h-4zM457 435h4v3h-4zM371 672h3v3h-3zM328 513h2v1h-2zM262 502h2v2h-2zM657 98h3v3h-3zM160 721h2v2h-2zM579 572h2v2h-2zM783 203h3v2h-3zM414 75h2v1h-2zM684 351h3v2h-3zM324 556h2v2h-2zM681 342h3v2h-3zM710 36h4v2h-4zM707 83h3v2h-3zM19 331h2v2h-2zM617 52h3v1h-3zM762 594h2v1h-2zM11 103h4v2h-4zM287 611h2v2h-2zM428 762h3v2h-3zM98 129h3v1h-3zM792 580h2v1h-2zM369 226h4v3h-4zM427 15h2v2h-2zM2 490h3v2h-3zM767 367h4v3h-4zM531 205h2v3h-2zM401 503h3v2h-3zM292 176h4v3h-4zM597 580h4v2h-4zM625 42h3v2h-3zM470 250h2v3h-2zM395 632h2v1h-2zM277 408h2v2h-2zM202 689h2v3h-2zM343 562h3v1h-3zM22 764h3v1h-3zM363 45h2v3h-2zM206 755h3v2h-3zM243 296h3v2h-3zM415 263h2v3h-2zM432 687h2v2h-2zM569 319h2v1h-2zM193 706h3v2h-3zM762 634h4v3h-4zM704 207h2v1h-2zM630 730h2v2h-2zM648 714h2v3h-2zM341 541h3v3h-3zM439 290h2v2h-2zM382 269h3v2h-3zM97 767h2v1h-2zM177 572h3v3h-3zM211 309h4v1h-4zM645 346h2v3h-2zM601 609h2v2h-2zM705 656h2v2h-2zM421 349h2v1h-2zM328 127h2v2h-2zM72 16h3v1h-3zM573 256h2v2h-2zM451 123h3v1h-3zM203 168h2v2h-2zM308 73h2v2h-2zM302 542h2v1h-2zM348 683h3v1h-3zM730 161h3v3h-3zM384 436h2v1h-2zM570 618h3v3h-3zM305 618h3v2h-3zM387 699h2v2h-2zM35 532h3v2h-3zM274 54h2v3h-2zM23 753h3v2h-3zM566 777h2v1h-2zM675 615h2v2h-2zM782 748h3v2h-3zM36 221h3v2h-3zM120 722h3v1h-3zM190 88h2v1h-2zM623 307h4v2h-4zM625 285h3v2h-3zM755 52h3v2h-3zM171 151h4v1h-4zM126 200h4v1h-4zM757 276h3v3h-3zM572 20h2v2h-2zM676 234h2v1h-2zM388 387h3v3h-3zM541 380h4v2h-4zM421 422h4v2h-4zM328 597h2v2h-2zM178 52h3v1h-3zM704 712h3v1h-3zM340 503h4v2h-4zM767 600h2v2h-2zM331 705h3v2h-3zM96 682h4v2h-4zM423 411h2v3h-2zM609 406h2v2h-2zM140 342h3v3h-3zM28 159h3v1h-3zM52 77h2v2h-2zM462 653h3v1h-3zM36 115h2v2h-2zM566 306h4v3h-4zM393 215h3v2h-3zM264 4h2v1h-2zM546 343h3v3h-3zM328 216h2v1h-2zM672 10h2v2h-2zM558 597h2v2h-2zM191 516h3v3h-3zM289 217h2v3h-2zM630 362h4v2h-4zM230 460h3v2h-3zM618 254h4v2h-4zM308 356h3v2h-3zM337 471h3v2h-3zM182 644h4v1h-4zM33 130h4v2h-4zM477 681h2v1h-2zM19 369h4v2h-4zM786 278h3v3h-3zM538 663h2v1h-2zM653 629h2v1h-2zM436 140h2v3h-2zM267 130h4v1h-4zM104 399h2v2h-2zM138 364h2v1h-2zM466 143h2v2h-2zM270 312h2v3h-2zM182 22h2v2h-2zM560 503h3v3h-3zM428 156h2v2h-2zM281 569h3v3h-3zM490 72h2v3h-2zM802 346h2v3h-2zM543 698h2v3h-2zM508 627h4v2h-4zM465 464h4v3h-4zM788 166h2v2h-2zM613 619h3v1h-3zM749 235h4v1h-4zM142 292h3v2h-3zM504 257h2v1h-2zM232 280h2v3h-2zM638 284h3v2h-3zM54 376h2v2h-2zM198 401h3v1h-3zM377 667h2v2h-2zM351 191h3v2h-3zM263 415h2v2h-2zM23 19h3v2h-3zM636 617h4v2h-4zM219 157h2v1h-2zM677 763h4v1h-4zM9 744h3v1h-3zM312 717h2v3h-2zM493 554h3v3h-3zM126 196h2v1h-2zM83 72h2v1h-2zM405 354h2v2h-2zM91 396h3v2h-3zM252 731h4v2h-4zM297 195h3v3h-3zM87 749h3v1h-3zM123 330h2v2h-2zM561 282h2v2h-2zM737 681h3v2h-3zM114 693h2v1h-2zM492 159h2v1h-2zM625 685h2v2h-2zM598 654h2v2h-2zM233 66h4v3h-4zM113 345h3v2h-3zM230 361h2v2h-2zM610 409h2v2h-2zM24 655h4v2h-4zM491 214h3v1h-3zM791 161h3v2h-3zM776 731h4v3h-4zM773 683h3v3h-3zM290 721h4v2h-4zM564 91h3v1h-3zM318 708h4v3h-4zM134 109h2v1h-2zM81 320h3v2h-3zM291 340h4v2h-4zM728 439h3v3h-3zM88 666h3v1h-3zM661 113h3v2h-3zM136 515h2v2h-2zM306 81h3v2h-3zM150 357h2v3h-2zM10 30h2v3h-2zM772 36h2v2h-2zM460 21h2v2h-2zM100 38h2v2h-2zM77 623h3v1h-3zM204 724h3v1h-3zM813 237h2v1h-2zM102 127h3v1h-3zM403 275h2v2h-2zM796 493h4v1h-4zM790 212h3v2h-3zM397 201h2v1h-2zM500 305h2v1h-2zM29 764h4v1h-4zM122 3h2v3h-2zM428 280h3v2h-3zM328 712h3v2h-3zM580 153h3v3h-3zM659 40h3v3h-3zM566 251h4v2h-4zM559 351h2v1h-2zM761 541h3v2h-3zM180 278h2v2h-2zM171 743h2v2h-2zM347 345h2v2h-2zM174 713h2v2h-2zM247 679h3v3h-3zM651 769h2v3h-2zM337 315h3v3h-3zM210 336h3v2h-3zM221 510h2v3h-2zM82 669h2v2h-2zM239 129h3v3h-3zM128 38h2v2h-2zM734 626h3v2h-3zM759 327h4v1h-4zM625 659h2v2h-2zM243 319h2v3h-2zM738 516h2v2h-2zM696 242h4v1h-4zM784 154h3v2h-3zM237 567h2v2h-2zM616 509h3v2h-3zM539 766h2v1h-2zM558 311h2v3h-2zM92 28h3v3h-3zM264 166h2v2h-2zM612 493h3v2h-3zM280 597h3v1h-3zM604 655h2v1h-2zM95 539h2v1h-2zM198 606h3v3h-3zM564 181h2v2h-2zM788 765h3v3h-3zM722 55h3v2h-3zM550 145h3v2h-3zM671 251h3v2h-3zM233 709h2v2h-2zM376 696h4v3h-4zM97 313h4v1h-4zM522 209h3v2h-3zM802 731h2v1h-2zM535 759h2v1h-2zM314 106h4v2h-4zM698 565h2v2h-2zM595 624h3v2h-3zM429 500h3v1h-3zM71 365h4v1h-4zM34 314h3v3h-3zM211 124h3v1h-3zM785 54h3v3h-3zM511 746h3v3h-3zM582 86h3v3h-3zM410 569h4v2h-4zM410 159h3v2h-3zM438 129h3v3h-3zM696 776h2v2h-2zM150 722h3v2h-3zM35 236h2v1h-2zM3 43h4v3h-4zM592 69h3v2h-3zM93 174h4v1h-4zM780 624h3v3h-3zM212 416h2v3h-2zM438 132h3v2h-3zM542 345h4v3h-4zM771 284h3v3h-3zM696 388h3v1h-3zM170 768h3v2h-3zM707 321h4v2h-4zM110 162h3v2h-3zM244 56h2v2h-2zM659 705h2v1h-2zM458 277h2v3h-2zM219 219h2v2h-2zM266 351h3v3h-3zM147 708h3v1h-3zM429 606h3v2h-3zM583 21h3v2h-3zM466 375h4v2h-4zM132 769h3v1h-3zM691 314h2v2h-2zM251 193h2v2h-2zM702 172h3v2h-3zM230 289h2v2h-2zM71 84h2v1h-2zM579 596h2v1h-2zM153 450h3v2h-3zM649 88h4v1h-4zM480 615h3v2h-3zM607 500h2v1h-2zM612 765h3v1h-3zM82 253h3v2h-3zM524 744h2v1h-2zM41 23h3v1h-3zM321 320h2v2h-2zM359 121h2v2h-2zM678 82h3v2h-3zM522 79h3v1h-3zM185 149h2v1h-2zM25 627h4v2h-4zM131 154h2v2h-2zM574 26h4v1h-4zM273 299h3v3h-3zM98 154h4v1h-4zM474 457h3v2h-3zM556 308h2v1h-2zM313 458h3v2h-3zM629 385h2v2h-2zM214 395h2v1h-2zM782 330h3v3h-3zM715 58h2v1h-2zM411 468h2v2h-2zM586 392h2v2h-2zM173 704h3v3h-3zM363 584h4v1h-4zM300 30h2v2h-2zM629 92h3v2h-3zM588 283h2v1h-2zM134 529h3v3h-3zM83 633h3v3h-3zM277 78h2v1h-2zM676 748h2v2h-2zM114 749h2v3h-2zM80 693h2v2h-2zM421 436h2v2h-2zM5 594h3v2h-3zM477 442h2v2h-2zM88 568h3v2h-3zM339 11h2v3h-2zM389 570h3v2h-3zM171 255h3v1h-3zM467 353h2v2h-2zM343 40h2v3h-2zM22 311h2v2h-2zM421 737h2v2h-2zM482 680h4v3h-4zM105 398h4v3h-4zM440 674h3v3h-3zM515 23h3v2h-3zM275 657h2v1h-2zM814 244h2v3h-2zM146 259h4v1h-4zM756 325h2v2h-2zM34 42h3v1h-3zM514 22h2v3h-2zM146 478h3v2h-3zM642 566h2v2h-2zM248 373h2v1h-2zM378 742h2v2h-2zM118 548h2v2h-2zM321 767h3v3h-3zM721 661h3v2h-3zM462 470h4v1h-4zM94 405h2v2h-2zM353 203h4v2h-4zM79 116h3v1h-3zM637 224h3v2h-3zM158 305h2v2h-2zM691 127h2v2h-2zM813 544h3v3h-3zM743 243h4v1h-4zM249 319h3v2h-3zM373 392h3v3h-3z" fill="#000014"/><path d="M298 46h2v1h-2zM460 482h4v3h-4zM277 273h3v1h-3zM684 735h2v1h-2zM596 241h3v2h-3zM584 691h3v2h-3zM704 217h3v3h-3zM325 307h3v1h-3zM156 767h2v2h-2zM489 80h4v1h-4zM121 197h3v3h-3zM390 539h2v2h-2zM23 460h2v3h-2zM536 273h2v1h-2zM540 635h4v2h-4zM639 83h2v2h-2zM226 601h4v1h-4zM619 710h4v2h-4zM564 352h3v2h-3zM207 107h2v3h-2zM575 774h3v2h-3zM291 72h3v3h-3zM359 15h4v2h-4zM122 716h3v1h-3zM55 672h3v3h-3zM759 490h2v2h-2zM31 15h2v3h-2zM510 685h2v1h-2zM542 297h3v2h-3zM3 284h4v2h-4zM199 752h3v2h-3zM1 297h4v2h-4zM623 561h3v2h-3zM741 586h2v2h-2zM403 298h3v1h-3zM207 579h4v2h-4zM551 227h3v3h-3zM668 754h3v3h-3zM21 3h3v3h-3zM246 110h3v1h-3zM791 340h3v3h-3zM331 186h3v1h-3zM611 322h4v2h-4zM221 194h3v3h-3zM812 217h2v3h-2zM28 264h3v2h-3zM497 698h2v2h-2zM541 295h3v3h-3zM41 369h3v2h-3zM264 574h3v2h-3zM267 249h4v1h-4zM529 375h2v3h-2zM207 203h2v2h-2zM529 79h2v1h-2zM26 386h3v1h-3zM345 639h3v3h-3zM73 485h4v2h-4zM119 221h2v1h-2zM44 721h4v2h-4zM251 194h3v3h-3zM298 625h2v1h-2zM45 393h2v1h-2zM248 407h3v2h-3zM217 431h4v2h-4zM600 52h3v2h-3zM583 287h4v3h-4zM356 602h2v2h-2zM582 645h3v2h-3zM483 745h4v2h-4zM512 277h3v1h-3zM344 503h3v2h-3zM784 80h2v2h-2zM116 470h2v3h-2zM554 500h3v2h-3zM512 77h3v2h-3zM204 330h4v3h-4zM83 448h3v1h-3zM521 645h3v3h-3zM172 533h2v2h-2zM519 197h2v1h-2zM89 237h4v2h-4zM810 748h2v2h-2zM200 235h3v1h-3zM70 440h2v2h-2zM161 539h3v1h-3zM402 46h2v3h-2zM201 129h2v2h-2zM685 365h3v3h-3zM556 725h2v3h-2zM276 671h3v2h-3zM239 644h4v2h-4zM511 542h2v2h-2zM541 677h2v1h-2zM672 602h3v3h-3zM55 530h2v3h-2zM730 488h2v1h-2zM385 215h3v2h-3zM239 434h3v1h-3zM118 621h2v3h-2zM389 606h3v2h-3zM436 421h3v2h-3zM148 546h4v2h-4zM80 348h4v2h-4zM69 40h3v3h-3zM32 200h4v1h-4zM303 304h3v2h-3zM780 721h2v1h-2zM273 131h3v3h-3zM294 32h3v2h-3zM13 709h3v2h-3zM152 648h2v2h-2zM468 668h3v1h-3zM37 96h4v2h-4zM701 115h3v2h-3zM196 261h4v2h-4zM47 17h4v2h-4zM359 49h3v2h-3zM406 750h3v2h-3zM711 473h3v3h-3zM235 275h4v3h-4zM362 144h2v3h-2zM439 777h4v3h-4zM318 279h3v3h-3zM772 527h2v3h-2zM305 312h4v2h-4zM717 751h3v2h-3zM299 59h2v1h-2zM534 230h4v3h-4zM336 47h2v2h-2zM143 599h4v2h-4zM475 747h4v2h-4zM6 675h3v2h-3zM550 455h3v3h-3zM94 416h3v1h-3zM316 364h3v1h-3zM767 777h3v2h-3zM436 315h2v1h-2zM536 442h3v1h-3zM21 548h3v2h-3zM162 236h2v2h-2zM513 733h2v3h-2zM584 199h4v2h-4zM204 47h3v1h-3zM194 189h3v2h-3zM272 635h2v2h-2zM562 10h2v1h-2zM784 126h4v2h-4zM89 381h2v2h-2zM84 560h4v2h-4zM309 504h2v2h-2zM770 385h2v2h-2zM113 496h2v3h-2zM391 170h2v3h-2zM382 423h3v2h-3zM496 232h3v3h-3zM538 290h3v2h-3zM432 440h2v2h-2zM147 693h2v2h-2zM578 177h4v1h-4zM599 708h3v1h-3zM652 105h4v1h-4zM511 748h3v3h-3zM304 12h2v3h-2zM245 551h2v2h-2zM187 746h3v2h-3zM272 16h4v1h-4zM52 772h4v2h-4zM808 27h2v2h-2zM286 429h2v2h-2zM248 276h3v1h-3zM752 166h2v3h-2zM330 529h2v3h-2zM663 330h4v2h-4zM536 469h4v2h-4zM456 282h3v2h-3zM509 96h2v2h-2zM289 254h3v2h-3zM231 258h2v2h-2zM379 310h3v2h-3zM110 464h2v1h-2zM780 756h2v2h-2zM344 421h2v3h-2zM608 665h4v3h-4zM580 307h4v2h-4zM369 69h3v1h-3zM5 102h2v2h-2zM1 203h3v2h-3zM528 631h3v2h-3zM309 410h2v1h-2zM483 360h3v3h-3zM465 13h2v3h-2zM165 41h3v3h-3zM434 319h3v1h-3zM576 560h3v2h-3zM164 218h4v1h-4zM376 27h2v3h-2zM527 103h3v1h-3zM134 417h3v2h-3zM199 603h2v2h-2zM9 732h3v1h-3zM530 756h3v3h-3zM678 625h3v3h-3zM646 4h2v1h-2zM715 370h3v3h-3zM177 488h2v3h-2zM221 746h2v2h-2zM407 744h4v2h-4zM698 754h2v1h-2zM739 388h2v1h-2zM153 715h3v2h-3zM630 21h3v1h-3zM656 527h3v2h-3zM264 649h2v2h-2zM791 605h2v2h-2zM329 531h3v3h-3zM124 590h4v3h-4zM613 215h3v2h-3zM694 95h2v1h-2zM434 544h4v2h-4zM614 528h2v2h-2zM320 627h2v2h-2zM694 520h3v2h-3zM495 704h3v1h-3zM796 460h2v1h-2zM438 364h3v2h-3zM230 758h2v2h-2zM634 23h3v2h-3zM326 399h2v1h-2zM655 748h3v1h-3zM523 448h4v3h-4zM455 489h3v2h-3zM732 626h2v2h-2zM770 763h3v2h-3zM175 456h2v1h-2zM699 264h3v3h-3zM312 81h2v2h-2zM494 93h3v1h-3zM499 68h2v1h-2zM424 355h4v2h-4zM147 734h2v2h-2zM224 195h2v2h-2zM86 643h3v2h-3zM53 95h2v1h-2zM487 541h2v1h-2zM589 505h3v3h-3zM145 78h3v2h-3zM263 161h2v1h-2zM312 508h2v1h-2zM192 23h2v1h-2zM97 53h3v2h-3zM56 548h3v2h-3zM494 370h3v2h-3zM364 389h3v2h-3zM780 162h2v2h-2zM302 551h3v2h-3zM30 106h3v1h-3zM383 354h4v2h-4zM281 591h3v1h-3zM551 608h2v2h-2zM162 12h4v2h-4zM383 58h3v3h-3zM609 681h2v2h-2zM645 567h3v2h-3zM154 723h2v2h-2zM254 57h2v2h-2zM672 368h2v2h-2zM612 391h3v1h-3zM51 361h3v3h-3zM73 39h2v2h-2zM759 683h2v2h-2zM98 395h3v3h-3zM357 67h2v1h-2zM296 694h4v1h-4zM88 633h2v1h-2zM305 275h2v2h-2zM684 104h3v1h-3zM700 498h3v3h-3zM733 571h3v1h-3zM519 60h3v2h-3zM150 709h2v2h-2zM44 44h4v2h-4zM416 726h2v2h-2zM514 626h4v2h-4zM76 5h2v2h-2zM736 158h2v3h-2zM708 278h3v2h-3zM102 231h3v3h-3zM386 216h3v2h-3zM408 182h3v1h-3zM329 276h3v3h-3zM34 611h4v3h-4zM511 528h3v2h-3zM277 736h3v2h-3zM302 302h4v1h-4zM254 171h2v1h-2zM99 667h3v2h-3zM147 119h2v3h-2zM807 536h4v2h-4zM653 263h4v3h-4zM122 593h3v3h-3zM574 4h2v1h-2zM533 217h4v3h-4zM132 776h2v3h-2zM434 666h2v3h-2zM532 375h2v2h-2zM131 533h3v2h-3zM745 700h3v2h-3zM280 75h2v2h-2zM406 220h4v2h-4zM773 494h2v2h-2zM172 95h4v2h-4zM486 543h3v2h-3zM592 429h3v2h-3zM131 392h4v3h-4zM197 73h3v3h-3zM57 64h2v2h-2zM529 330h4v3h-4zM199 121h3v1h-3zM539 79h4v2h-4zM104 53h2v2h-2zM139 646h3v2h-3zM690 583h4v3h-4zM673 766h3v2h-3zM27 749h3v2h-3zM125 611h2v2h-2zM358 310h3v1h-3zM169 451h2v2h-2zM100 166h3v2h-3zM13 178h3v2h-3zM533 329h2v3h-2zM516 405h3v2h-3zM383 556h2v1h-2zM540 360h2v3h-2zM150 4h3v2h-3zM749 271h2v1h-2zM416 385h4v2h-4zM445 624h2v2h-2zM547 579h2v2h-2zM66 486h4v2h-4zM13 693h3v2h-3zM709 771h3v1h-3zM221 742h2v2h-2zM483 655h2v2h-2zM207 647h4v2h-4zM181 675h2v1h-2zM178 608h4v2h-4zM765 134h2v3h-2zM399 195h3v2h-3zM551 456h3v2h-3zM538 436h4v2h-4zM383 102h2v2h-2zM360 253h3v1h-3zM527 648h4v2h-4zM84 623h4v1h-4zM443 511h2v1h-2zM552 226h2v2h-2zM372 254h4v1h-4zM77 402h3v1h-3zM202 711h4v2h-4zM151 500h3v1h-3zM730 746h3v2h-3zM536 312h3v2h-3zM139 122h2v3h-2zM77 736h2v1h-2zM484 360h4v1h-4zM39 390h2v2h-2zM763 606h3v3h-3zM111 384h3v3h-3zM478 186h3v3h-3zM322 503h3v1h-3zM787 652h4v2h-4zM537 388h4v1h-4zM493 328h2v3h-2zM729 193h3v1h-3zM443 723h4v1h-4zM732 142h4v2h-4zM361 73h2v2h-2zM582 611h2v3h-2zM538 240h3v2h-3zM519 773h2v3h-2zM116 253h2v1h-2zM486 509h4v1h-4zM520 78h2v2h-2zM457 372h3v1h-3zM514 504h3v2h-3zM280 75h2v2h-2zM204 450h3v2h-3zM748 616h3v3h-3zM107 530h3v2h-3zM96 116h2v1h-2zM421 116h3v2h-3zM726 156h2v3h-2zM662 235h2v2h-2zM567 384h2v3h-2zM217 187h3v1h-3zM725 398h4v2h-4zM632 131h2v2h-2zM403 589h2v2h-2zM347 328h4v2h-4zM567 7h4v1h-4zM687 349h2v2h-2zM631 703h3v2h-3zM2 553h2v2h-2zM157 381h3v3h-3zM197 400h4v3h-4zM143 350h2v2h-2zM247 106h2v3h-2zM302 614h4v3h-4zM649 686h2v2h-2zM565 290h2v3h-2zM375 632h3v1h-3zM607 687h4v3h-4zM557 278h4v2h-4zM565 512h2v2h-2zM451 420h4v1h-4zM248 570h2v2h-2zM462 22h2v3h-2zM63 444h3v3h-3zM528 346h4v3h-4zM473 413h3v2h-3zM46 411h4v3h-4zM370 667h2v3h-2zM695 635h2v2h-2zM6 275h4v1h-4zM770 688h3v2h-3zM2 168h3v2h-3zM742 590h2v2h-2zM208 286h2v3h-2zM700 20h4v1h-4zM120 718h2v3h-2zM336 461h2v1h-2zM188 77h2v2h-2zM554 76h3v1h-3zM499 590h3v3h-3zM559 475h2v3h-2zM235 75h4v2h-4zM329 451h2v1h-2zM635 304h3v3h-3zM664 4h2v3h-2zM805 47h2v3h-2zM799 161h2v2h-2zM34 264h2v3h-2zM523 265h2v3h-2zM529 571h2v1h-2zM132 125h3v3h-3zM110 205h2v1h-2zM412 241h2v2h-2zM100 390h2v1h-2zM762 203h3v2h-3zM207 320h4v2h-4zM630 187h4v2h-4zM305 569h4v2h-4zM619 169h3v2h-3zM58 134h3v3h-3zM408 413h2v3h-2zM270 102h4v1h-4zM733 240h3v2h-3zM182 211h4v1h-4zM210 118h2v2h-2zM569 157h4v2h-4zM701 743h2v2h-2zM57 303h3v1h-3zM86 356h2v2h-2zM125 743h4v3h-4zM78 584h2v2h-2zM63 137h2v1h-2zM148 153h4v1h-4zM236 570h3v2h-3zM697 287h4v3h-4zM236 200h4v2h-4zM422 219h3v3h-3zM319 291h2v1h-2zM378 631h2v2h-2zM714 82h2v2h-2zM459 715h4v2h-4zM131 231h3v1h-3zM814 740h2v2h-2zM399 189h2v2h-2zM208 320h2v2h-2zM292 534h3v2h-3zM173 613h4v1h-4zM812 11h2v1h-2zM260 400h2v2h-2zM707 54h2v2h-2zM158 271h3v2h-3zM755 234h3v1h-3zM229 521h3v2h-3zM183 455h4v3h-4zM344 231h3v2h-3zM651 650h4v2h-4zM69 57h4v3h-4zM603 661h3v1h-3zM292 401h3v1h-3zM807 514h2v3h-2zM382 35h4v2h-4zM433 13h4v3h-4zM759 227h4v2h-4zM26 11h2v2h-2zM614 528h4v1h-4zM451 738h4v3h-4zM756 593h3v2h-3zM80 72h4v2h-4zM152 262h2v3h-2zM338 645h2v3h-2zM325 683h3v2h-3zM35 212h2v2h-2zM154 777h4v1h-4zM683 126h3v1h-3zM747 697h4v2h-4zM72 660h2v3h-2zM582 256h3v1h-3zM599 210h2v1h-2zM573 748h3v3h-3zM599 522h3v2h-3zM561 397h4v1h-4zM747 231h3v3h-3zM50 223h2v1h-2zM243 465h2v2h-2zM420 339h4v2h-4zM473 538h2v2h-2zM746 63h2v3h-2zM560 721h2v2h-2zM372 419h3v2h-3zM749 98h4v2h-4zM90 312h2v2h-2zM256 276h3v3h-3zM813 572h4v2h-4zM6 157h2v3h-2zM733 195h2v1h-2zM134 622h4v2h-4zM337 261h2v2h-2zM814 237h2v2h-2zM518 588h4v2h-4zM808 447h2v1h-2zM64 459h2v3h-2zM92 420h3v1h-3zM492 200h4v3h-4zM783 524h3v3h-3zM508 183h2v3h-2zM295 682h3v3h-3zM199 439h2v3h-2zM519 264h4v2h-4zM800 773h4v2h-4zM582 665h4v2h-4zM660 619h3v1h-3zM59 543h4v2h-4zM501 727h3v3h-3zM657 40h2v2h-2zM546 747h4v3h-4zM794 625h2v2h-2zM368 98h3v3h-3zM810 560h2v3h-2zM534 396h2v3h-2zM95 640h3v3h-3zM503 367h2v1h-2zM524 17h4v1h-4zM404 129h3v2h-3zM58 36h2v3h-2zM570 729h2v1h-2zM696 312h3v2h-3zM147 267h2v2h-2zM653 121h3v2h-3zM655 385h3v3h-3zM273 605h3v1h-3zM700 695h4v2h-4zM504 152h2v2h-2zM628 297h4v2h-4zM245 528h3v1h-3zM622 97h4v3h-4zM151 422h3v2h-3zM739 697h2v2h-2zM238 331h2v2h-2zM689 250h3v2h-3zM563 125h2v1h-2zM416 511h3v2h-3zM726 439h3v2h-3zM188 236h3v3h-3zM411 423h2v2h-2zM731 661h4v3h-4zM751 392h3v1h-3zM453 91h2v3h-2zM811 572h2v3h-2zM753 433h4v2h-4zM138 499h4v2h-4zM333 463h2v2h-2zM650 673h3v2h-3zM448 424h2v2h-2zM162 488h4v2h-4zM318 670h4v3h-4zM328 384h3v2h-3zM425 586h3v1h-3zM481 546h3v1h-3zM97 262h3v2h-3zM566 141h3v2h-3zM563 359h2v3h-2zM732 169h2v2h-2zM323 621h2v3h-2zM88 116h3v1h-3zM786 752h3v3h-3zM227 256h3v1h-3zM81 644h2v2h-2zM183 10h4v1h-4zM46 272h2v3h-2zM90 498h2v2h-2zM401 328h3v3h-3zM546 341h2v2h-2zM20 315h4v1h-4zM250 442h2v2h-2zM690 343h2v1h-2zM172 520h2v2h-2zM282 430h3v2h-3zM462 266h2v2h-2zM684 542h2v3h-2zM547 339h2v2h-2zM724 647h3v3h-3zM655 17h3v3h-3zM2 100h3v3h-3zM730 37h3v1h-3zM670 416h3v3h-3zM557 416h2v2h-2zM136 468h2v1h-2zM371 716h2v2h-2zM591 214h3v2h-3zM263 537h3v2h-3zM358 520h4v2h-4zM556 204h2v3h-2zM187 632h3v2h-3zM157 246h2v3h-2zM627 409h2v1h-2zM452 442h3v3h-3zM788 669h3v3h-3zM19 190h3v2h-3zM671 143h3v1h-3zM144 654h2v2h-2zM592 287h2v3h-2zM156 190h2v2h-2zM785 333h2v2h-2zM530 425h2v2h-2zM536 133h3v1h-3zM187 123h2v1h-2zM152 557h3v3h-3zM342 102h3v1h-3zM68 519h3v2h-3zM674 428h2v3h-2zM90 722h4v2h-4zM303 15h4v3h-4zM556 143h3v2h-3zM720 322h2v3h-2zM438 274h3v2h-3zM233 539h3v3h-3zM520 73h4v1h-4zM580 494h2v2h-2zM742 527h4v2h-4zM261 420h3v2h-3zM300 423h2v2h-2zM489 653h4v3h-4zM776 757h3v2h-3zM554 95h3v2h-3zM281 626h4v1h-4zM21 457h3v3h-3zM477 519h3v2h-3zM813 238h2v2h-2zM104 616h2v1h-2zM326 691h2v1h-2zM234 308h2v1h-2zM289 124h3v2h-3zM698 156h3v3h-3zM649 221h2v2h-2zM329 491h3v2h-3zM20 120h2v2h-2zM204 525h4v3h-4zM531 454h3v2h-3zM255 82h3v2h-3zM805 300h3v2h-3zM142 469h2v3h-2zM268 478h4v2h-4zM346 516h3v3h-3zM395 340h2v1h-2zM228 440h2v2h-2zM321 232h2v2h-2zM622 287h2v2h-2zM712 295h4v2h-4zM72 389h2v3h-2zM535 223h3v2h-3zM314 204h2v2h-2zM371 428h3v3h-3zM711 50h2v3h-2zM176 136h2v2h-2zM269 170h4v1h-4zM518 131h3v1h-3zM68 716h3v2h-3zM573 110h2v3h-2zM756 1h4v3h-4zM584 659h2v3h-2zM525 345h2v3h-2zM291 457h3v1h-3zM453 91h2v2h-2zM394 392h2v2h-2zM624 153h3v2h-3zM151 695h2v2h-2zM379 322h3v2h-3zM582 319h2v1h-2zM106 663h3v1h-3zM741 449h4v1h-4zM549 260h3v1h-3zM181 517h2v1h-2zM683 464h2v2h-2zM807 336h3v2h-3zM732 8h3v2h-3zM663 507h4v2h-4zM698 292h2v1h-2zM146 481h2v3h-2zM661 108h4v2h-4zM37 221h3v2h-3zM735 401h3v2h-3zM585 545h3v3h-3zM670 448h2v2h-2zM679 611h2v3h-2zM84 748h3v2h-3zM160 712h3v3h-3zM655 97h3v1h-3zM191 237h3v3h-3zM702 369h2v3h-2zM204 200h4v3h-4zM360 56h2v2h-2zM13 40h3v1h-3zM777 538h2v1h-2zM735 28h2v2h-2zM443 461h3v2h-3zM148 407h3v1h-3zM220 125h3v2h-3zM722 185h3v2h-3zM359 145h4v2h-4zM615 579h2v3h-2zM710 153h2v2h-2zM647 629h3v3h-3zM300 527h2v3h-2zM179 295h2v3h-2zM362 692h3v3h-3zM81 148h3v2h-3zM461 421h2v2h-2zM249 595h3v3h-3zM664 729h2v1h-2zM689 115h4v2h-4zM275 130h3v1h-3zM243 682h2v2h-2zM575 28h4v2h-4zM806 20h2v2h-2zM471 320h3v2h-3zM311 145h3v1h-3zM124 389h3v1h-3zM45 253h2v2h-2zM489 172h2v1h-2zM552 676h3v1h-3zM467 455h2v2h-2zM768 356h3v3h-3zM29 157h3v2h-3zM116 161h3v2h-3zM169 98h3v3h-3zM649 187h3v2h-3zM386 588h3v2h-3zM29 464h3v3h-3zM131 400h3v2h-3zM529 706h3v3h-3zM491 537h2v3h-2zM157 450h4v1h-4zM47 83h2v2h-2zM258 524h3v2h-3zM190 337h4v3h-4zM771 612h3v3h-3zM130 60h4v2h-4zM545 118h2v1h-2zM393 10h2v2h-2zM498 148h3v1h-3zM576 290h4v3h-4zM100 287h4v3h-4zM370 539h2v1h-2zM802 343h2v2h-2zM134 732h3v2h-3zM96 569h4v2h-4zM376 159h3v2h-3zM163 60h2v2h-2zM61 174h2v3h-2zM244 43h3v3h-3zM717 595h3v3h-3zM43 490h3v1h-3zM448 249h3v2h-3zM162 676h3v3h-3zM124 557h2v3h-2zM537 416h2v3h-2zM812 561h2v2h-2zM73 279h3v3h-3zM582 277h4v2h-4zM347 177h3v3h-3zM310 609h3v2h-3zM381 645h3v3h-3zM14 478h3v3h-3zM277 164h4v2h-4zM217 63h2v1h-2zM505 64h2v2h-2zM667 524h2v3h-2zM758 678h2v2h-2zM551 312h3v2h-3zM579 28h3v3h-3zM18 494h3v1h-3zM445 164h2v1h-2zM744 187h3v1h-3zM162 147h2v2h-2zM532 327h2v3h-2zM271 298h3v2h-3zM379 755h3v1h-3zM528 679h3v2h-3zM93 518h2v2h-2zM651 502h3v1h-3zM159 614h3v2h-3zM545 648h2v2h-2zM730 371h2v3h-2zM246 234h4v1h-4zM801 25h2v1h-2zM568 505h3v3h-3zM11 619h3v2h-3zM375 767h2v1h-2zM48 231h2v2h-2zM399 554h4v2h-4zM275 619h3v3h-3zM198 29h2v2h-2zM631 110h4v2h-4zM554 338h2v2h-2zM781 223h2v2h-2zM338 35h4v3h-4zM430 123h2v1h-2zM660 613h2v2h-2zM277 462h3v2h-3zM241 114h2v2h-2zM330 483h3v1h-3zM267 337h2v3h-2zM190 550h2v2h-2zM30 4h4v2h-4zM234 323h3v1h-3zM490 165h3v3h-3zM240 616h2v2h-2zM367 14h3v3h-3zM560 109h2v2h-2zM589 242h4v2h-4zM136 748h4v3h-4zM425 347h2v3h-2zM76 62h4v2h-4zM458 633h3v2h-3zM119 737h4v1h-4zM211 352h3v1h-3zM466 271h2v1h-2zM485 167h3v3h-3zM448 62h4v2h-4zM313 406h3v2h-3zM280 478h2v2h-2zM91 493h3v1h-3zM729 635h3v2h-3zM163 764h3v2h-3zM633 190h2v2h-2zM517 352h4v3h-4zM2 90h3v3h-3zM371 773h2v3h-2zM78 480h4v1h-4zM337 753h4v1h-4zM310 554h2v2h-2zM58 593h4v2h-4zM557 594h3v1h-3zM62 605h4v2h-4zM205 734h3v2h-3zM290 272h4v2h-4zM389 209h2v2h-2zM632 292h2v2h-2zM556 478h3v2h-3zM481 651h3v3h-3zM332 656h2v2h-2zM295 19h3v3h-3zM562 105h3v2h-3zM219 320h2v1h-2zM647 348h3v2h-3zM111 308h3v3h-3zM506 332h3v1h-3zM349 227h2v1h-2zM147 82h4v2h-4zM708 425h3v2h-3zM251 404h3v2h-3zM328 621h3v1h-3zM32 458h2v1h-2zM704 612h4v2h-4zM578 13h4v3h-4zM517 53h2v3h-2zM294 567h2v3h-2zM97 131h2v3h-2zM655 8h2v2h-2zM632 630h3v3h-3zM23 445h2v2h-2zM333 737h4v1h-4zM419 263h3v1h-3zM324 467h2v1h-2zM527 92h2v3h-2zM246 41h2v2h-2zM577 664h2v3h-2zM499 512h4v2h-4zM468 485h3v2h-3zM688 731h2v2h-2zM648 567h4v2h-4zM642 727h2v2h-2zM144 239h4v2h-4zM359 51h4v3h-4zM217 57h2v3h-2zM159 168h3v2h-3zM610 585h2v3h-2zM142 231h2v2h-2zM356 498h4v2h-4zM121 615h4v1h-4zM90 138h3v2h-3zM418 709h2v1h-2zM532 554h3v1h-3zM406 253h2v3h-2zM332 266h2v2h-2zM670 390h3v2h-3zM14 400h3v1h-3zM668 340h2v2h-2zM584 470h3v3h-3zM702 696h3v1h-3zM303 397h3v2h-3zM666 769h3v2h-3zM163 379h3v2h-3zM150 619h3v3h-3zM548 204h3v3h-3zM125 690h3v2h-3zM518 595h3v2h-3zM284 167h2v2h-2zM150 524h2v2h-2zM717 635h2v3h-2zM497 258h2v2h-2zM718 466h3v3h-3zM524 66h3v2h-3zM622 531h4v3h-4zM774 204h4v2h-4zM365 65h3v1h-3zM531 3h4v2h-4zM795 158h2v2h-2zM353 486h3v2h-3zM359 140h4v2h-4zM448 92h2v1h-2zM612 700h3v3h-3zM576 325h2v2h-2zM161 507h2v1h-2zM547 118h4v2h-4zM350 26h3v2h-3zM340 441h3v2h-3zM506 358h2v1h-2zM416 154h3v2h-3zM751 464h3v1h-3zM632 486h2v2h-2zM319 208h3v3h-3zM166 669h3v3h-3zM512 658h4v2h-4zM235 381h3v2h-3zM484 323h3v2h-3zM98 682h4v3h-4zM629 753h3v2h-3zM589 191h3v1h-3zM67 390h3v1h-3zM405 726h3v2h-3zM656 460h4v2h-4zM738 375h3v1h-3zM416 282h4v1h-4zM325 494h4v3h-4zM651 126h3v3h-3zM56 422h4v2h-4zM109 151h2v2h-2zM733 612h4v2h-4zM274 434h2v2h-2zM579 282h3v2h-3zM765 118h4v2h-4zM337 625h4v2h-4zM444 398h2v2h-2zM173 510h3v2h-3zM500 425h3v2h-3zM84 164h3v1h-3zM601 179h2v2h-2zM814 518h3v1h-3zM272 571h3v2h-3zM644 564h2v3h-2zM157 174h2v1h-2zM592 756h4v2h-4zM756 492h2v2h-2zM395 296h3v2h-3zM61 186h3v3h-3zM492 471h4v3h-4zM88 33h2v3h-2zM408 204h2v2h-2zM728 138h3v1h-3zM801 319h3v1h-3zM382 536h2v3h-2zM248 170h4v2h-4zM479 175h3v2h-3zM383 159h3v3h-3zM248 182h2v1h-2zM185 115h2v1h-2zM103 675h2v1h-2zM313 89h3v2h-3zM55 690h3v2h-3zM148 625h4v2h-4zM705 204h3v2h-3zM201 496h2v2h-2zM79 602h3v2h-3zM770 297h4v2h-4zM89 244h3v3h-3zM713 415h4v2h-4zM83 250h2v1h-2zM683 373h3v2h-3zM527 559h3v3h-3zM571 169h3v2h-3zM173 261h3v3h-3zM474 43h2v3h-2zM274 350h2v2h-2zM338 761h2v1h-2zM415 674h3v1h-3zM362 313h4v2h-4zM235 738h2v2h-2zM405 558h3v2h-3zM213 60h3v3h-3zM564 623h2v2h-2zM56 210h2v2h-2zM316 758h3v3h-3zM185 28h2v1h-2zM730 522h3v1h-3zM102 492h2v2h-2zM681 686h2v3h-2zM169 584h2v1h-2zM709 497h4v2h-4zM196 399h3v2h-3zM755 620h4v2h-4zM341 435h2v1h-2zM591 698h2v1h-2zM773 647h2v2h-2zM470 425h4v2h-4zM715 319h3v2h-3zM43 34h3v2h-3zM317 606h2v2h-2zM338 288h4v1h-4zM368 244h3v1h-3zM442 440h2v1h-2zM652 59h4v2h-4zM9 289h3v1h-3zM602 656h3v2h-3zM277 222h3v1h-3zM76 516h3v2h-3zM61 141h2v2h-2zM459 498h2v2h-2zM731 437h2v2h-2zM247 515h3v1h-3zM159 369h3v2h-3zM107 294h2v3h-2zM750 609h2v3h-2zM242 628h4v2h-4zM601 9h3v2h-3zM514 197h3v2h-3zM76 677h3v2h-3zM540 568h2v2h-2zM658 191h3v1h-3zM478 427h3v1h-3zM554 651h2v1h-2zM501 453h2v1h-2zM626 246h3v2h-3zM813 304h2v2h-2zM407 673h3v2h-3zM577 715h2v3h-2zM391 778h2v3h-2zM499 550h4v1h-4zM187 408h4v3h-4zM362 629h3v3h-3zM424 422h2v3h-2zM147 449h3v2h-3zM337 140h3v2h-3zM504 187h2v3h-2zM686 495h3v1h-3zM189 385h3v2h-3zM475 719h3v1h-3zM423 218h3v3h-3zM91 385h4v2h-4zM184 93h3v3h-3zM756 375h2v3h-2zM232 161h3v2h-3zM483 555h3v2h-3zM509 72h3v2h-3zM295 768h2v1h-2zM34 116h2v2h-2zM512 4h3v2h-3zM696 714h3v2h-3zM247 540h3v3h-3zM727 672h4v2h-4zM627 89h3v3h-3zM319 359h2v2h-2zM209 650h2v2h-2zM303 430h2v1h-2zM763 582h2v3h-2zM95 54h4v2h-4zM203 748h3v2h-3zM662 556h2v1h-2zM290 454h3v1h-3zM249 182h3v2h-3zM26 478h3v2h-3zM572 102h3v3h-3zM281 758h2v3h-2zM694 182h4v3h-4zM738 572h3v3h-3zM48 692h4v3h-4zM791 160h4v2h-4zM498 80h4v2h-4zM68 222h2v3h-2zM553 585h3v2h-3zM137 428h3v2h-3zM712 144h2v1h-2zM22 483h3v2h-3zM204 49h3v1h-3zM209 245h2v3h-2zM115 312h2v2h-2zM681 751h3v2h-3zM639 227h3v2h-3zM107 535h4v2h-4zM104 408h4v3h-4zM331 535h2v2h-2zM619 548h2v2h-2zM635 52h3v3h-3zM237 734h4v1h-4zM189 399h3v2h-3zM625 201h4v2h-4zM270 530h2v2h-2zM563 608h2v2h-2zM623 295h2v1h-2zM385 226h2v2h-2zM781 560h3v1h-3zM666 523h4v1h-4zM35 627h3v1h-3zM405 23h4v3h-4zM67 168h2v2h-2zM806 677h3v1h-3zM336 413h2v2h-2zM164 754h3v2h-3zM395 102h3v2h-3zM325 228h3v1h-3zM315 679h2v1h-2zM710 451h2v2h-2zM797 43h3v2h-3zM105 513h4v2h-4zM523 662h3v1h-3zM330 264h4v2h-4zM624 671h2v2h-2zM459 221h3v3h-3zM46 371h3v2h-3zM57 586h2v1h-2zM105 102h2v2h-2zM8 226h4v3h-4zM36 461h3v1h-3zM672 461h2v2h-2zM499 534h2v1h-2zM564 358h4v3h-4zM461 306h2v2h-2zM78 86h2v3h-2zM514 711h3v1h-3zM323 48h2v1h-2zM431 343h3v1h-3zM109 508h2v3h-2zM31 61h2v3h-2zM322 112h3v2h-3zM477 335h3v3h-3zM1 182h3v3h-3zM86 381h3v1h-3zM442 596h3v1h-3zM133 640h3v1h-3zM465 19h3v3h-3zM673 741h4v2h-4zM159 251h3v2h-3zM539 577h2v1h-2zM53 189h2v2h-2zM382 170h4v3h-4zM31 398h2v2h-2zM611 61h3v2h-3zM799 179h3v1h-3zM718 711h3v3h-3zM332 670h2v2h-2zM579 359h4v1h-4zM46 435h2v2h-2zM21 605h2v1h-2zM520 761h2v3h-2zM407 682h3v2h-3zM31 744h2v3h-2zM747 55h4v2h-4zM420 366h2v1h-2zM396 59h3v2h-3zM704 397h3v3h-3zM25 533h3v2h-3zM698 135h2v2h-2zM334 24h2v3h-2zM1 299h3v2h-3zM227 82h4v1h-4zM453 307h2v3h-2zM642 397h2v1h-2zM189 728h4v2h-4zM727 29h2v2h-2zM621 112h4v2h-4zM596 715h2v2h-2zM644 158h2v1h-2zM170 487h2v1h-2zM620 172h2v2h-2zM241 739h3v1h-3zM423 28h4v3h-4zM138 546h3v3h-3zM557 612h3v1h-3zM442 391h3v2h-3zM167 409h4v3h-4zM18 771h2v3h-2zM32 665h3v3h-3zM509 353h3v3h-3zM22 658h4v3h-4zM468 210h2v2h-2zM46 338h3v3h-3zM175 529h4v3h-4zM437 496h4v1h-4zM355 611h2v2h-2zM71 248h3v2h-3zM456 506h2v2h-2zM519 588h2v3h-2zM489 403h4v3h-4zM725 37h2v2h-2zM794 647h2v2h-2zM314 299h2v2h-2zM803 500h2v1h-2zM548 557h2v2h-2zM2 211h3v1h-3zM427 628h3v2h-3zM782 527h4v1h-4zM502 366h2v3h-2zM19 562h2v1h-2zM814 697h2v2h-2zM227 773h3v2h-3zM22 719h2v3h-2zM636 163h4v2h-4zM209 386h3v2h-3zM202 307h3v2h-3zM114 479h3v3h-3zM306 546h4v2h-4zM459 187h3v1h-3zM271 517h2v1h-2zM587 595h3v1h-3zM99 475h2v2h-2zM79 73h4v2h-4zM727 245h4v2h-4zM282 540h4v3h-4zM609 587h2v1h-2zM568 331h2v1h-2zM632 372h3v2h-3zM200 327h2v1h-2zM435 465h3v1h-3zM526 243h2v3h-2zM81 127h2v2h-2zM557 571h4v3h-4zM202 663h2v2h-2zM433 236h3v2h-3zM607 607h2v3h-2zM800 595h4v2h-4zM779 575h4v3h-4zM675 436h2v1h-2zM682 135h2v1h-2zM189 180h2v2h-2zM237 616h3v2h-3zM426 571h2v2h-2zM48 96h4v3h-4zM467 464h3v3h-3zM723 342h2v3h-2zM48 601h3v1h-3zM604 626h2v3h-2zM155 698h3v2h-3zM491 221h3v3h-3zM470 292h4v2h-4zM524 509h3v1h-3zM124 645h4v3h-4zM767 763h3v1h-3zM77 495h4v2h-4zM685 293h3v2h-3zM53 70h2v3h-2zM684 338h2v2h-2zM578 12h2v3h-2zM384 240h2v2h-2zM794 64h4v1h-4zM167 644h4v3h-4zM164 626h3v1h-3zM32 123h3v2h-3zM456 546h3v3h-3zM411 603h4v1h-4zM454 775h2v1h-2zM235 566h3v3h-3zM467 681h4v1h-4zM676 722h3v1h-3zM346 71h4v1h-4zM377 305h4v3h-4zM471 63h3v2h-3zM304 277h3v2h-3zM520 508h3v2h-3zM249 528h4v3h-4zM670 493h3v3h-3zM342 691h2v1h-2zM479 715h4v1h-4zM320 430h3v2h-3zM180 53h2v1h-2zM439 549h2v3h-2zM595 107h4v3h-4zM547 417h4v1h-4zM529 416h3v3h-3zM710 252h3v3h-3zM813 626h2v2h-2zM584 360h2v2h-2zM98 301h3v1h-3zM182 707h4v3h-4zM398 652h3v1h-3zM418 205h2v3h-2zM785 663h2v2h-2zM452 20h3v1h-3zM341 632h3v3h-3zM457 16h3v2h-3zM809 565h3v2h-3zM115 312h4v1h-4zM687 576h3v3h-3zM445 331h2v2h-2zM812 774h2v2h-2zM738 69h4v3h-4zM591 131h4v1h-4zM752 680h2v1h-2zM564 363h3v1h-3zM561 2h3v2h-3zM754 652h4v1h-4zM351 713h3v2h-3zM761 543h3v1h-3zM99 385h3v1h-3zM299 510h4v3h-4zM788 89h3v2h-3zM417 680h4v3h-4zM388 646h3v3h-3zM301 747h2v2h-2zM571 246h2v3h-2zM719 700h3v1h-3zM568 738h3v3h-3zM640 203h2v2h-2zM406 268h3v2h-3zM545 11h3v2h-3zM299 298h3v1h-3zM771 75h2v1h-2zM787 515h3v3h-3zM228 708h3v2h-3zM74 506h2v2h-2zM503 629h2v2h-2zM512 39h4v2h-4zM750 655h2v3h-2zM155 561h3v2h-3zM640 545h3v2h-3zM416 184h2v3h-2zM322 354h2v2h-2zM267 723h3v1h-3zM496 778h2v2h-2zM113 126h3v1h-3zM7 398h2v2h-2zM209 582h2v1h-2zM407 735h2v1h-2zM217 296h2v2h-2zM225 169h2v2h-2zM70 40h2v2h-2zM503 512h2v2h-2zM236 673h2v2h-2zM746 372h2v2h-2zM781 438h2v2h-2zM134 261h2v3h-2zM753 438h4v2h-4zM207 778h2v2h-2zM601 661h2v3h-2zM336 188h2v1h-2zM251 268h2v2h-2zM564 713h2v1h-2zM621 542h2v2h-2zM692 3h2v2h-2zM483 454h3v2h-3zM805 447h3v1h-3zM540 646h4v2h-4zM297 772h2v2h-2zM79 676h2v1h-2zM156 445h2v1h-2zM58 246h4v3h-4zM496 149h4v2h-4zM43 418h2v2h-2zM535 488h2v1h-2zM483 123h3v2h-3zM594 608h3v1h-3zM556 471h2v2h-2zM734 407h2v2h-2zM801 289h2v3h-2zM138 209h3v2h-3zM261 229h4v1h-4zM269 72h2v1h-2zM271 22h3v1h-3zM534 700h2v3h-2zM461 39h3v3h-3zM592 287h3v1h-3zM358 391h2v3h-2zM538 502h4v1h-4zM392 369h4v3h-4zM274 66h3v2h-3zM641 574h3v3h-3zM528 489h2v3h-2zM529 311h3v3h-3zM390 208h4v2h-4zM74 547h2v1h-2zM96 114h2v2h-2zM332 641h3v2h-3zM146 198h3v2h-3zM187 682h3v2h-3zM674 436h3v2h-3zM20 383h3v2h-3zM164 453h2v1h-2zM589 253h2v3h-2zM494 87h3v1h-3zM269 196h2v1h-2zM281 261h3v1h-3zM192 408h2v1h-2zM130 21h3v2h-3zM450 67h4v1h-4zM56 615h2v3h-2zM60 281h2v2h-2zM362 548h2v2h-2zM38 143h3v2h-3zM102 593h2v2h-2zM352 246h3v2h-3zM309 294h2v3h-2zM778 78h3v3h-3zM621 197h3v3h-3zM695 240h3v3h-3zM339 470h4v2h-4zM654 63h4v2h-4zM62 176h2v2h-2zM65 94h4v3h-4zM519 313h3v2h-3zM450 696h3v2h-3zM215 449h2v3h-2zM570 257h2v1h-2zM308 510h4v2h-4zM568 162h2v3h-2zM329 76h3v1h-3zM360 670h2v3h-2zM491 425h3v2h-3zM31 54h4v2h-4zM361 534h3v1h-3zM446 499h3v2h-3zM581 467h2v2h-2zM118 705h3v2h-3zM463 688h3v2h-3zM43 367h4v2h-4zM167 676h2v1h-2zM115 517h4v2h-4zM760 763h3v2h-3zM455 211h2v1h-2zM329 495h2v3h-2zM460 338h2v1h-2zM350 713h2v1h-2zM360 342h3v3h-3zM752 228h3v2h-3zM33 373h3v2h-3zM39 150h4v3h-4zM621 190h4v2h-4zM193 175h3v2h-3zM21 411h4v2h-4zM431 100h3v2h-3zM746 446h2v3h-2zM75 401h3v2h-3zM275 666h2v2h-2zM97 196h2v1h-2zM779 679h4v3h-4zM119 196h4v3h-4zM173 70h3v3h-3zM101 336h3v2h-3zM525 667h3v2h-3zM691 493h3v3h-3zM64 227h4v2h-4zM75 750h4v2h-4zM652 606h2v3h-2zM156 201h3v1h-3zM21 405h4v3h-4zM589 9h3v2h-3zM226 775h3v1h-3zM105 726h3v1h-3zM672 487h3v2h-3zM46 255h3v2h-3zM640 17h2v1h-2zM376 164h4v1h-4zM599 28h4v2h-4zM639 193h4v2h-4zM603 277h2v2h-2zM474 319h4v3h-4zM222 253h2v1h-2zM408 656h2v2h-2zM796 506h2v1h-2zM728 72h2v2h-2zM172 545h2v3h-2zM512 251h2v2h-2zM339 342h4v2h-4zM578 209h3v3h-3zM536 459h3v1h-3zM586 742h2v2h-2zM503 336h2v1h-2zM354 642h3v2h-3zM548 444h2v1h-2zM779 678h2v3h-2zM92 113h4v3h-4zM116 760h3v2h-3zM634 53h2v2h-2zM373 567h3v3h-3zM172 99h3v2h-3zM133 343h2v1h-2zM29 666h4v3h-4zM181 481h3v2h-3zM234 660h3v2h-3zM627 355h4v1h-4zM475 202h2v3h-2zM196 562h2v1h-2zM748 239h4v1h-4zM233 237h2v2h-2zM353 193h3v2h-3zM5 164h2v1h-2zM440 169h2v2h-2zM485 518h4v1h-4zM501 44h3v2h-3zM192 496h2v2h-2zM148 253h4v2h-4zM757 675h2v3h-2zM318 525h2v3h-2zM539 222h4v3h-4zM709 451h4v1h-4zM429 623h3v2h-3zM404 402h3v1h-3zM393 499h4v2h-4zM45 77h3v2h-3zM13 340h2v2h-2zM68 199h2v2h-2zM644 378h4v3h-4zM545 310h3v2h-3zM149 71h3v3h-3zM755 405h4v1h-4zM520 392h2v2h-2zM322 729h4v2h-4zM634 364h3v1h-3zM814 641h3v3h-3zM787 160h4v1h-4zM253 583h2v2h-2zM176 688h4v2h-4zM741 460h2v2h-2zM638 159h2v1h-2zM293 250h2v3h-2zM528 545h3v2h-3zM150 421h3v2h-3zM167 37h4v1h-4zM86 355h4v3h-4zM428 390h3v2h-3zM143 674h3v2h-3zM55 384h2v3h-2zM783 339h4v2h-4zM619 134h4v2h-4zM787 502h3v3h-3zM448 256h4v1h-4zM672 557h4v2h-4zM96 252h2v2h-2zM435 637h4v2h-4zM791 290h2v2h-2zM698 379h3v1h-3zM253 627h3v2h-3zM809 235h3v1h-3zM320 213h4v2h-4zM3 356h4v1h-4zM163 461h2v2h-2zM713 345h4v1h-4zM45 378h2v3h-2zM766 158h4v3h-4zM750 638h3v2h-3zM220 620h2v2h-2zM34 200h3v2h-3zM647 387h4v2h-4zM691 435h2v2h-2zM614 258h2v1h-2zM458 31h3v1h-3zM206 183h4v3h-4zM196 405h4v3h-4zM808 175h4v2h-4zM577 65h2v2h-2zM560 213h2v2h-2zM635 268h4v3h-4zM588 225h3v3h-3zM753 101h2v1h-2zM479 180h2v2h-2zM810 733h2v1h-2zM64 562h3v3h-3zM279 226h3v2h-3zM20 156h3v2h-3zM390 469h3v2h-3zM749 462h3v2h-3zM322 640h4v2h-4zM227 307h2v3h-2zM518 675h4v1h-4zM398 243h4v3h-4zM68 449h2v3h-2zM560 742h3v2h-3zM450 399h2v3h-2zM277 141h3v1h-3zM431 103h2v1h-2zM256 578h4v1h-4zM44 238h4v1h-4zM439 305h2v3h-2zM224 582h2v2h-2zM781 434h3v2h-3zM560 388h3v2h-3zM547 770h3v3h-3zM754 263h2v3h-2zM161 488h3v1h-3zM247 471h3v3h-3zM640 62h2v2h-2zM234 363h3v1h-3zM552 426h3v2h-3zM256 117h2v2h-2zM77 678h2v1h-2zM669 461h3v3h-3zM771 750h3v2h-3zM171 478h3v2h-3zM47 667h2v1h-2zM805 658h2v2h-2zM523 352h3v2h-3zM150 449h2v2h-2zM703 264h2v3h-2zM353 412h4v1h-4zM502 446h3v3h-3zM730 734h2v2h-2zM171 643h3v2h-3zM242 507h3v3h-3zM760 83h2v2h-2zM61 656h4v2h-4zM345 27h2v2h-2zM291 229h2v2h-2zM28 552h2v2h-2zM643 657h2v3h-2zM481 578h3v3h-3zM120 577h4v2h-4zM709 316h4v2h-4zM480 84h2v2h-2zM193 359h2v2h-2zM599 100h3v1h-3zM493 184h4v2h-4zM718 177h3v2h-3zM559 72h3v3h-3zM626 276h2v2h-2zM104 634h4v1h-4zM147 306h4v3h-4zM358 663h2v2h-2zM529 481h2v3h-2zM45 179h2v3h-2zM490 530h2v3h-2zM784 375h2v2h-2zM101 510h2v2h-2zM659 708h3v3h-3zM524 540h2v3h-2zM24 554h4v2h-4zM144 495h3v2h-3zM46 455h2v2h-2zM572 46h4v2h-4zM413 329h4v2h-4zM217 360h2v2h-2zM145 480h4v3h-4zM655 318h4v1h-4zM345 525h4v2h-4zM359 257h2v2h-2zM435 253h3v2h-3zM360 59h3v2h-3zM195 144h3v3h-3zM259 584h3v3h-3zM65 180h2v1h-2zM524 548h3v2h-3zM591 262h2v1h-2zM379 15h2v2h-2zM490 130h3v3h-3zM10 266h3v1h-3zM460 42h2v1h-2zM380 730h3v2h-3zM539 249h4v3h-4zM549 489h3v2h-3zM303 639h2v2h-2zM632 107h4v2h-4zM472 80h3v1h-3zM531 728h3v3h-3zM32 470h4v2h-4zM542 323h2v2h-2zM745 603h4v3h-4zM780 69h2v1h-2zM631 50h3v2h-3zM286 465h2v1h-2zM655 565h2v2h-2zM63 719h3v3h-3zM428 152h3v3h-3zM325 634h2v3h-2zM328 190h4v3h-4zM489 675h3v1h-3zM595 703h3v1h-3zM316 566h3v2h-3zM64 514h2v1h-2zM651 189h3v3h-3zM455 157h3v2h-3zM564 593h2v3h-2zM54 128h2v1h-2zM260 602h3v1h-3zM575 675h2v2h-2zM591 89h2v2h-2zM80 500h2v2h-2zM682 455h3v1h-3zM507 112h3v3h-3zM102 425h3v2h-3zM573 565h2v1h-2zM389 453h4v2h-4zM162 125h4v2h-4zM651 650h2v2h-2zM362 398h4v1h-4zM208 71h2v2h-2zM234 706h3v2h-3zM561 249h3v3h-3zM622 362h2v3h-2zM665 560h3v2h-3zM499 94h2v2h-2zM689 548h3v1h-3zM600 352h2v1h-2zM725 602h2v2h-2zM402 597h3v3h-3zM480 604h3v3h-3zM267 49h2v3h-2zM803 268h4v2h-4zM606 752h3v2h-3zM76 575h3v2h-3zM524 430h3v1h-3zM561 502h2v2h-2zM41 498h2v1h-2zM384 686h4v2h-4zM539 79h2v3h-2zM556 419h3v1h-3zM512 646h3v2h-3zM32 385h4v3h-4zM546 762h2v2h-2zM255 262h2v1h-2zM810 201h3v1h-3zM682 68h3v2h-3zM651 439h2v3h-2zM486 656h3v3h-3zM509 369h2v2h-2zM62 416h2v3h-2zM724 101h4v2h-4zM595 609h3v2h-3zM73 180h2v2h-2zM583 537h2v3h-2zM531 543h2v2h-2zM584 657h4v2h-4zM422 759h3v3h-3zM674 30h3v3h-3zM491 700h3v2h-3zM35 32h2v2h-2zM765 502h2v1h-2zM418 560h4v2h-4zM110 284h3v3h-3zM399 93h2v3h-2zM363 492h3v2h-3zM701 308h4v1h-4zM443 694h2v2h-2zM524 687h3v2h-3zM329 463h2v3h-2zM369 501h2v2h-2zM479 308h2v3h-2zM756 376h3v2h-3zM532 526h3v2h-3zM353 752h2v3h-2zM501 697h3v1h-3zM684 343h3v3h-3zM408 687h3v3h-3zM419 419h2v2h-2zM220 72h3v3h-3zM336 592h4v2h-4zM19 685h2v2h-2zM58 327h4v2h-4zM119 560h4v2h-4zM749 740h2v2h-2zM128 741h2v2h-2zM768 523h3v2h-3zM93 531h2v2h-2zM69 716h2v2h-2zM280 714h2v3h-2zM64 566h3v1h-3zM561 419h4v2h-4zM414 645h4v2h-4zM131 37h3v1h-3zM246 42h3v1h-3zM5 593h3v3h-3zM577 419h2v2h-2zM542 341h2v1h-2zM576 591h3v2h-3zM718 621h3v2h-3zM678 770h3v1h-3zM604 227h2v2h-2zM173 204h2v1h-2zM685 338h3v2h-3zM93 26h4v3h-4zM445 99h3v2h-3zM220 101h3v3h-3zM14 203h2v3h-2zM279 757h2v2h-2zM742 318h3v1h-3zM273 413h2v1h-2zM374 150h2v3h-2zM724 4h2v2h-2zM293 92h3v2h-3zM734 31h2v2h-2zM333 81h4v2h-4zM536 600h4v2h-4zM573 199h2v2h-2zM418 723h2v2h-2zM575 52h2v1h-2zM468 695h2v2h-2zM340 352h3v2h-3zM96 687h3v1h-3zM491 412h2v1h-2zM409 692h2v2h-2zM561 727h2v3h-2zM745 529h2v2h-2zM308 737h2v1h-2zM592 341h2v2h-2zM207 214h4v3h-4zM614 69h3v2h-3zM482 625h2v2h-2zM483 212h4v2h-4zM529 579h3v1h-3zM309 537h3v2h-3zM697 690h3v2h-3zM195 131h2v2h-2zM265 577h3v2h-3zM237 310h4v3h-4zM385 757h3v3h-3zM729 741h4v3h-4zM302 574h4v3h-4zM799 458h3v1h-3zM382 62h3v2h-3zM666 176h2v1h-2zM664 59h3v1h-3zM116 255h4v3h-4zM651 715h3v3h-3zM609 179h4v1h-4zM706 36h4v2h-4zM422 324h2v3h-2zM481 450h2v3h-2zM19 126h3v2h-3zM157 579h3v3h-3zM370 528h2v1h-2zM201 591h3v1h-3zM313 406h3v2h-3zM372 385h2v2h-2zM636 616h3v3h-3zM750 105h2v1h-2zM676 556h2v3h-2zM796 224h3v2h-3zM265 442h2v1h-2zM489 651h4v3h-4zM76 721h2v2h-2zM635 251h2v1h-2zM559 166h3v1h-3zM745 483h2v3h-2zM183 152h3v1h-3zM142 528h3v1h-3zM279 155h3v2h-3zM251 752h2v2h-2zM278 282h4v1h-4zM144 403h4v1h-4zM400 665h3v1h-3zM783 573h2v1h-2zM769 374h3v2h-3zM292 538h2v2h-2zM432 729h3v2h-3zM578 178h3v2h-3zM152 337h3v3h-3zM218 608h3v2h-3zM575 663h2v1h-2zM299 548h2v3h-2zM622 352h3v2h-3zM686 144h3v2h-3zM427 185h3v2h-3zM698 210h2v1h-2zM618 533h2v2h-2zM397 690h4v1h-4zM620 521h4v3h-4zM671 275h2v1h-2zM275 773h2v2h-2zM630 169h3v2h-3zM172 351h2v1h-2zM66 500h2v1h-2zM366 277h2v2h-2zM623 398h2v2h-2zM10 635h2v3h-2zM770 611h2v3h-2zM776 1h3v3h-3zM509 528h3v2h-3zM506 654h4v2h-4zM62 730h2v1h-2zM98 206h4v1h-4zM446 505h4v2h-4zM785 45h4v3h-4zM657 444h4v2h-4zM736 569h2v2h-2zM739 178h4v3h-4zM101 230h2v3h-2zM241 403h2v2h-2zM484 224h2v2h-2zM421 342h2v2h-2zM581 127h3v3h-3zM368 358h4v3h-4zM451 352h2v2h-2zM313 51h4v1h-4zM207 165h3v3h-3zM450 760h3v1h-3zM367 96h3v2h-3zM243 62h2v1h-2zM142 570h3v2h-3zM675 68h3v2h-3zM416 255h3v1h-3zM93 655h4v2h-4zM144 80h2v2h-2zM256 34h3v3h-3zM255 93h3v2h-3zM542 636h3v3h-3zM151 564h3v3h-3zM235 383h3v1h-3zM457 752h4v2h-4zM640 46h2v1h-2zM779 586h3v3h-3zM75 76h2v1h-2zM577 685h2v2h-2zM669 107h3v3h-3zM390 13h3v2h-3zM660 502h4v3h-4zM11 130h4v2h-4zM424 388h3v2h-3zM392 627h3v3h-3zM156 237h2v1h-2zM226 198h3v3h-3zM453 341h2v3h-2zM590 48h2v2h-2zM544 598h2v2h-2zM114 238h4v2h-4zM169 240h4v2h-4zM277 243h4v2h-4zM300 239h4v2h-4zM429 237h4v2h-4zM207 238h4v2h-4zM230 240h4v2h-4zM57 241h4v2h-4zM392 243h4v2h-4zM329 241h4v2h-4zM179 237h4v2h-4zM415 240h4v2h-4zM44 242h4v2h-4zM739 241h4v2h-4zM130 237h4v2h-4zM218 238h4v2h-4zM214 239h4v2h-4zM261 241h4v2h-4zM348 240h4v2h-4zM429 241h4v2h-4zM563 241h4v2h-4zM617 243h4v2h-4zM467 237h4v2h-4zM127 238h4v2h-4zM340 243h4v2h-4zM68 238h4v2h-4zM811 243h4v2h-4zM283 239h4v2h-4zM43 242h4v2h-4zM48 240h4v2h-4zM166 239h4v2h-4zM256 238h4v2h-4zM260 240h4v2h-4zM14 242h4v2h-4zM449 241h4v2h-4zM334 238h4v2h-4zM360 239h4v2h-4zM189 240h4v2h-4zM49 240h4v2h-4zM464 238h4v2h-4zM179 240h4v2h-4zM44 237h4v2h-4zM263 242h4v2h-4zM185 238h4v2h-4zM118 238h4v2h-4zM86 239h4v2h-4zM150 241h4v2h-4zM670 243h4v2h-4zM323 241h4v2h-4z" fill="#01012a"/><path d="M264 118h2v1h-2zM203 140h2v2h-2zM428 681h3v1h-3zM97 326h2v3h-2zM119 416h3v2h-3zM563 402h2v3h-2zM797 672h3v2h-3zM519 478h2v2h-2zM161 160h4v1h-4zM391 509h2v1h-2zM741 609h3v2h-3zM327 737h2v2h-2zM12 756h4v2h-4zM354 679h2v1h-2zM731 121h3v2h-3zM721 127h2v2h-2zM764 494h2v2h-2zM200 348h3v3h-3zM800 267h2v3h-2zM806 764h2v1h-2zM70 33h2v3h-2zM681 435h4v2h-4zM399 3h4v1h-4zM537 52h3v1h-3zM689 183h2v3h-2zM684 2h3v1h-3zM720 632h4v2h-4zM586 39h3v2h-3zM369 259h3v2h-3zM260 287h2v1h-2zM103 392h2v1h-2zM449 31h2v1h-2zM316 174h2v2h-2zM404 156h2v2h-2zM152 729h2v2h-2zM291 640h3v1h-3zM588 464h2v1h-2zM673 84h3v3h-3zM643 711h2v3h-2zM149 625h2v2h-2zM79 388h3v2h-3zM191 325h2v1h-2zM333 290h2v2h-2zM341 40h3v3h-3zM313 587h2v2h-2zM522 667h4v2h-4zM720 656h3v1h-3zM192 595h3v2h-3zM519 64h4v1h-4zM698 775h2v2h-2zM54 273h2v2h-2zM730 214h2v2h-2zM361 138h2v2h-2zM668 198h4v2h-4zM480 159h3v2h-3zM485 451h4v3h-4zM422 501h3v2h-3zM414 50h3v1h-3zM274 584h3v1h-3zM284 75h2v3h-2zM231 168h3v2h-3zM104 463h4v1h-4zM139 342h4v2h-4zM218 588h4v2h-4zM589 759h4v2h-4zM565 390h3v1h-3zM571 458h2v2h-2zM443 126h2v2h-2zM62 713h3v2h-3zM757 54h2v3h-2zM523 561h2v2h-2zM543 647h3v3h-3zM811 592h3v2h-3zM638 180h3v3h-3zM553 375h3v2h-3zM639 32h3v1h-3zM643 708h4v2h-4zM33 493h2v1h-2zM301 640h4v2h-4zM752 285h2v1h-2zM317 244h3v1h-3zM258 739h3v2h-3zM490 698h3v1h-3zM223 663h3v2h-3zM305 83h2v2h-2zM522 745h3v2h-3zM682 37h3v1h-3zM481 344h3v2h-3zM369 265h3v1h-3zM797 13h3v2h-3zM113 141h2v2h-2zM143 107h2v2h-2zM165 52h3v1h-3zM99 556h3v3h-3zM364 20h2v1h-2zM199 69h2v1h-2zM772 15h3v1h-3zM323 733h3v3h-3zM224 573h3v3h-3zM497 444h2v2h-2zM376 427h3v2h-3zM275 275h4v2h-4zM669 403h3v2h-3zM709 4h4v1h-4zM528 6h3v3h-3zM514 408h2v2h-2zM464 492h3v1h-3zM642 239h2v2h-2zM228 20h2v2h-2zM76 210h2v3h-2zM177 316h4v2h-4zM56 711h3v2h-3zM144 286h3v3h-3zM762 88h3v1h-3zM713 456h2v1h-2zM31 248h3v1h-3zM758 539h3v1h-3zM551 161h2v3h-2zM621 34h4v2h-4zM143 128h2v2h-2zM488 359h2v1h-2zM7 716h4v2h-4zM532 61h2v3h-2zM111 716h3v2h-3zM47 84h3v1h-3zM309 4h3v2h-3zM794 749h2v2h-2zM691 174h2v2h-2zM607 266h2v2h-2zM100 291h3v3h-3zM687 753h3v3h-3zM173 638h3v3h-3zM631 493h3v2h-3zM646 186h2v1h-2zM248 594h4v2h-4zM547 688h4v2h-4zM168 692h3v3h-3zM5 211h2v2h-2zM649 68h3v3h-3zM46 478h3v2h-3zM806 178h2v1h-2zM211 472h2v2h-2zM431 273h3v3h-3zM657 711h3v1h-3zM25 17h2v2h-2zM743 118h2v2h-2zM183 421h4v1h-4zM160 38h3v2h-3zM9 536h4v2h-4zM620 686h2v2h-2zM807 643h2v1h-2zM740 39h3v3h-3zM191 490h3v2h-3zM59 621h4v2h-4zM427 411h2v2h-2zM311 648h2v3h-2zM366 373h4v2h-4zM781 226h2v3h-2zM306 33h3v3h-3zM327 32h4v2h-4zM45 530h3v1h-3zM71 299h3v3h-3zM372 550h3v1h-3zM406 525h3v2h-3zM436 124h2v1h-2zM183 649h3v3h-3zM127 45h2v2h-2zM536 164h4v1h-4zM237 271h3v1h-3zM164 367h2v2h-2zM366 193h2v1h-2zM78 430h4v3h-4zM561 179h2v2h-2zM813 330h2v2h-2zM464 94h2v2h-2zM664 267h3v2h-3zM72 191h2v2h-2zM56 610h2v2h-2zM320 610h3v3h-3zM331 68h3v3h-3zM571 344h2v1h-2zM249 552h4v1h-4zM728 157h2v2h-2zM251 405h2v2h-2zM136 138h2v3h-2zM322 732h3v3h-3zM433 406h3v2h-3zM732 579h3v2h-3zM107 548h4v2h-4zM580 601h4v2h-4zM52 491h4v1h-4zM633 615h3v2h-3zM87 120h3v3h-3zM807 710h3v2h-3zM77 760h2v3h-2zM125 15h2v1h-2zM694 433h4v1h-4zM575 515h3v3h-3zM170 551h3v1h-3zM300 236h2v3h-2zM494 762h2v1h-2zM62 89h4v2h-4zM746 571h2v1h-2zM584 24h3v1h-3zM528 170h2v2h-2zM504 511h2v1h-2zM696 625h3v1h-3zM233 297h2v2h-2zM382 737h2v1h-2zM415 489h2v3h-2zM560 26h3v2h-3zM531 113h3v1h-3zM13 357h3v2h-3zM506 169h2v2h-2zM332 267h2v2h-2zM627 186h2v2h-2zM700 745h3v2h-3zM779 201h2v3h-2zM681 500h4v2h-4zM301 662h2v1h-2zM24 622h2v2h-2zM133 72h3v2h-3zM156 551h2v1h-2zM760 168h3v2h-3zM521 538h2v2h-2zM356 52h4v2h-4zM436 607h3v1h-3zM86 355h3v2h-3zM26 708h4v1h-4zM570 246h4v3h-4zM138 136h3v2h-3zM185 144h3v3h-3zM11 526h4v2h-4zM662 198h3v3h-3zM83 618h2v2h-2zM299 733h2v3h-2zM439 181h2v2h-2zM116 358h4v2h-4zM526 362h4v1h-4zM271 302h3v1h-3zM225 259h2v3h-2zM354 151h3v3h-3zM76 680h4v2h-4zM18 552h2v3h-2zM132 141h2v2h-2zM368 686h3v3h-3zM688 282h2v3h-2zM307 682h3v3h-3zM80 385h2v1h-2zM626 539h3v3h-3zM524 248h3v1h-3zM38 651h3v1h-3zM490 673h2v2h-2zM379 365h3v2h-3zM744 627h3v2h-3zM371 288h3v3h-3zM808 528h2v2h-2zM420 273h4v2h-4zM809 485h2v2h-2zM345 185h2v2h-2zM100 660h2v1h-2zM416 131h3v2h-3zM94 297h2v2h-2zM254 159h2v2h-2zM443 229h2v2h-2zM278 368h2v3h-2zM287 48h2v2h-2zM320 145h3v1h-3zM620 260h4v2h-4zM447 302h2v2h-2zM298 766h2v2h-2zM678 292h2v3h-2zM179 748h2v3h-2zM565 202h2v2h-2zM42 546h3v1h-3zM307 628h2v2h-2zM171 271h3v2h-3zM641 154h3v1h-3zM571 133h2v3h-2zM664 340h3v2h-3zM358 392h2v2h-2zM362 693h2v3h-2zM206 633h2v1h-2zM303 614h2v2h-2zM703 90h3v3h-3zM797 11h2v2h-2zM524 511h2v3h-2zM811 233h3v2h-3zM502 496h2v1h-2zM679 457h3v2h-3zM125 304h3v2h-3zM660 284h2v1h-2zM23 392h2v2h-2zM206 188h2v1h-2zM82 50h4v2h-4zM325 136h3v1h-3zM305 542h3v3h-3zM684 188h4v2h-4zM488 718h4v2h-4zM659 194h2v2h-2zM393 37h2v2h-2zM241 593h3v2h-3zM351 687h4v2h-4zM508 372h4v1h-4zM501 111h2v2h-2zM143 435h3v1h-3zM683 1h2v2h-2zM473 95h4v2h-4zM548 95h2v2h-2zM84 391h2v3h-2zM523 434h2v3h-2zM811 567h2v1h-2zM303 516h3v3h-3zM35 52h2v3h-2zM125 411h3v1h-3zM156 758h4v2h-4zM399 29h2v2h-2zM785 237h3v2h-3zM732 19h3v2h-3zM429 603h3v3h-3zM542 150h3v3h-3zM640 162h2v3h-2zM631 584h2v2h-2zM781 80h3v2h-3zM558 320h2v2h-2zM760 300h3v2h-3zM120 699h4v2h-4zM777 655h2v3h-2zM590 580h4v2h-4zM750 505h4v1h-4zM124 40h3v2h-3zM208 544h3v3h-3zM316 182h3v1h-3zM285 636h3v2h-3zM642 729h2v1h-2zM91 320h4v2h-4zM362 682h2v3h-2zM796 409h3v2h-3zM487 767h3v1h-3zM569 689h2v1h-2zM704 717h4v1h-4zM109 194h3v1h-3zM356 99h2v2h-2zM8 372h3v2h-3zM442 716h2v2h-2zM487 234h2v3h-2zM772 252h4v1h-4zM60 433h3v2h-3zM80 746h3v3h-3zM762 265h3v2h-3zM571 253h2v1h-2zM60 188h2v1h-2zM268 174h2v2h-2zM388 580h3v1h-3zM265 163h2v2h-2zM30 233h2v1h-2zM116 28h3v2h-3zM659 615h2v2h-2zM323 173h4v1h-4zM561 404h4v2h-4zM168 562h4v2h-4zM92 173h2v1h-2zM667 377h2v2h-2zM66 368h3v2h-3zM260 481h4v3h-4zM164 670h3v2h-3zM319 365h3v1h-3zM627 420h2v2h-2zM351 366h2v3h-2zM652 206h3v1h-3zM287 249h3v1h-3zM523 463h3v1h-3zM80 543h2v1h-2zM386 581h2v2h-2zM102 617h3v2h-3zM93 174h2v1h-2zM256 467h3v1h-3zM112 235h3v2h-3zM252 457h2v2h-2zM275 344h2v3h-2zM298 613h4v1h-4zM30 352h4v2h-4zM744 700h2v2h-2zM401 254h2v3h-2zM60 367h3v1h-3zM463 398h3v2h-3zM57 740h3v3h-3zM253 288h3v2h-3zM401 147h4v3h-4zM672 628h4v2h-4zM696 415h3v3h-3zM667 431h3v2h-3zM581 255h3v1h-3zM499 690h2v2h-2zM521 69h3v2h-3zM795 680h4v2h-4zM679 122h2v1h-2zM127 727h2v3h-2zM151 238h2v2h-2zM37 732h3v1h-3zM377 321h2v3h-2zM699 583h2v2h-2zM92 405h2v3h-2zM252 580h4v2h-4zM336 67h2v1h-2zM623 217h3v2h-3zM387 413h2v3h-2zM158 206h2v2h-2zM500 253h4v2h-4zM203 624h3v3h-3zM680 702h2v1h-2zM544 208h3v2h-3zM487 612h2v1h-2zM390 210h3v2h-3zM231 700h4v1h-4zM181 713h2v1h-2zM346 618h3v3h-3zM50 690h4v2h-4zM481 383h4v2h-4zM424 678h2v1h-2zM375 397h2v1h-2zM358 282h3v3h-3zM402 555h2v2h-2zM504 502h2v2h-2zM125 53h2v3h-2zM161 34h3v1h-3zM530 721h4v3h-4zM650 168h2v2h-2zM137 748h2v2h-2zM616 444h2v2h-2zM575 566h3v3h-3zM631 11h4v1h-4zM472 556h2v2h-2zM46 307h2v1h-2zM325 394h3v1h-3zM636 505h2v1h-2zM68 407h3v2h-3zM621 718h2v2h-2zM186 170h2v1h-2zM341 639h2v3h-2zM519 466h4v3h-4zM299 138h3v2h-3zM100 190h4v2h-4zM77 105h3v1h-3zM214 682h4v3h-4zM720 232h2v2h-2zM7 534h3v3h-3zM45 173h3v1h-3zM585 267h3v3h-3zM311 600h3v3h-3zM422 584h2v3h-2zM535 377h3v2h-3zM239 305h3v2h-3zM298 256h3v2h-3zM645 155h4v3h-4zM644 7h3v3h-3zM732 732h3v2h-3zM813 563h3v3h-3zM804 304h2v2h-2zM766 105h3v2h-3zM768 148h2v1h-2zM477 60h3v3h-3zM8 754h3v2h-3zM336 447h2v3h-2zM236 291h3v2h-3zM746 565h2v2h-2zM524 187h2v3h-2zM759 562h3v1h-3zM636 411h3v3h-3zM472 147h3v3h-3zM784 744h3v3h-3zM801 80h2v1h-2zM367 637h3v3h-3zM272 128h2v1h-2zM782 765h4v1h-4zM287 759h3v1h-3zM606 221h2v3h-2zM530 91h3v2h-3zM412 91h4v1h-4zM460 593h3v2h-3zM806 724h3v2h-3zM258 588h3v2h-3zM621 708h2v1h-2zM200 537h3v2h-3zM373 457h3v2h-3zM144 11h4v3h-4zM767 151h3v1h-3zM329 325h3v2h-3zM357 555h3v2h-3zM217 183h4v2h-4zM378 440h2v2h-2zM131 268h3v3h-3zM363 691h3v2h-3zM57 279h3v3h-3zM596 80h2v1h-2zM354 182h3v1h-3zM495 276h3v3h-3zM467 173h2v3h-2zM174 24h3v3h-3zM693 492h3v1h-3zM9 316h2v3h-2zM180 96h2v2h-2zM446 726h4v2h-4zM237 48h4v1h-4zM399 302h3v3h-3zM528 261h3v2h-3zM677 434h4v3h-4zM297 169h4v1h-4zM610 400h3v2h-3zM175 570h3v1h-3zM564 592h2v2h-2zM58 625h3v3h-3zM167 109h3v1h-3zM226 47h2v3h-2zM551 228h3v2h-3zM21 366h4v3h-4zM271 755h2v2h-2zM595 530h3v1h-3zM10 375h4v2h-4zM616 352h3v2h-3zM248 248h2v3h-2zM135 563h4v1h-4zM658 461h3v2h-3zM811 614h2v1h-2zM32 367h3v1h-3zM167 693h2v3h-2zM465 726h4v1h-4zM146 183h4v2h-4zM413 390h2v2h-2zM411 581h3v3h-3zM354 599h3v2h-3zM699 707h3v2h-3zM197 337h3v2h-3zM346 630h4v1h-4zM322 549h2v2h-2zM289 705h3v1h-3zM516 681h3v3h-3zM389 480h2v2h-2zM7 443h3v2h-3zM780 406h3v2h-3zM499 120h2v3h-2zM521 113h2v1h-2zM248 417h3v3h-3zM472 85h2v2h-2zM793 44h3v2h-3zM487 207h3v2h-3zM68 310h2v2h-2zM278 629h3v2h-3zM73 394h4v2h-4zM142 181h2v1h-2zM505 571h4v2h-4zM133 446h3v1h-3zM598 116h2v2h-2zM120 266h3v2h-3zM192 333h4v2h-4zM240 145h2v1h-2zM779 63h2v2h-2zM737 104h4v1h-4zM274 361h3v2h-3zM112 655h2v3h-2zM296 341h3v1h-3zM272 637h2v1h-2zM425 503h2v1h-2zM413 593h2v2h-2zM50 696h3v1h-3zM462 398h4v2h-4zM299 48h2v3h-2zM40 134h3v2h-3zM803 218h2v3h-2zM493 109h4v2h-4zM207 178h2v2h-2zM266 352h3v2h-3zM326 545h2v1h-2zM580 105h4v1h-4zM579 745h2v2h-2zM202 592h2v2h-2zM662 737h3v1h-3zM487 771h3v2h-3zM230 352h3v3h-3zM121 617h3v2h-3zM780 424h2v2h-2zM252 156h3v3h-3zM488 191h3v3h-3zM358 405h3v2h-3zM381 200h4v1h-4zM213 599h3v2h-3zM263 233h2v2h-2zM533 744h2v1h-2zM617 275h2v1h-2zM25 677h4v1h-4zM492 371h4v2h-4zM145 714h2v1h-2zM5 199h2v3h-2zM2 578h4v3h-4zM459 418h2v2h-2zM540 175h3v3h-3zM662 629h2v2h-2zM557 123h3v3h-3zM125 56h4v2h-4zM745 774h2v1h-2zM187 268h3v3h-3zM431 178h3v2h-3zM3 587h2v2h-2zM380 207h3v3h-3zM263 91h3v3h-3zM125 160h2v3h-2zM624 269h4v2h-4zM740 604h4v2h-4zM12 311h3v3h-3zM422 35h4v3h-4zM610 496h3v2h-3zM502 406h3v1h-3zM555 514h2v2h-2zM755 512h3v1h-3zM354 132h2v1h-2zM244 247h2v2h-2zM712 350h3v3h-3zM27 750h2v2h-2zM773 72h2v2h-2zM694 770h3v3h-3zM738 419h4v2h-4zM360 742h4v1h-4zM804 116h4v2h-4zM175 581h2v1h-2zM118 575h2v3h-2zM809 444h3v1h-3zM588 131h2v1h-2zM359 203h4v2h-4zM125 658h2v2h-2zM455 519h3v2h-3zM163 620h2v2h-2zM630 310h3v2h-3zM44 409h2v1h-2zM263 150h2v1h-2zM515 112h2v2h-2zM87 48h4v2h-4zM85 315h4v2h-4zM729 20h3v3h-3zM445 696h3v1h-3zM147 488h3v2h-3zM380 324h2v2h-2zM660 130h3v3h-3zM112 715h4v2h-4zM594 651h2v3h-2zM132 238h2v2h-2zM304 483h3v3h-3zM156 436h4v2h-4zM219 561h2v2h-2zM371 700h3v2h-3zM757 452h4v2h-4zM245 38h2v1h-2zM748 609h3v3h-3zM614 327h3v2h-3zM234 20h3v3h-3zM543 344h3v2h-3zM466 171h4v3h-4zM298 60h4v1h-4zM756 170h2v2h-2zM140 728h3v2h-3zM515 14h4v2h-4zM25 693h2v2h-2zM783 449h2v2h-2zM25 549h2v1h-2zM461 92h4v1h-4zM777 371h2v2h-2zM20 256h3v2h-3zM784 73h2v3h-2zM334 251h2v2h-2zM720 593h4v2h-4zM153 89h4v3h-4zM553 545h3v2h-3zM16 345h3v2h-3zM395 377h2v1h-2zM420 460h4v3h-4zM558 55h4v2h-4zM736 56h2v2h-2zM311 490h3v2h-3zM787 739h3v1h-3zM296 490h3v2h-3zM503 433h3v2h-3zM212 688h2v3h-2zM546 301h4v3h-4zM492 731h2v1h-2zM644 288h2v2h-2zM550 711h3v2h-3zM769 695h4v2h-4zM68 614h3v2h-3zM683 428h3v2h-3zM379 277h2v2h-2zM353 53h4v3h-4zM672 298h2v2h-2zM717 351h3v1h-3zM662 541h2v1h-2zM330 205h3v2h-3zM155 424h2v2h-2zM163 222h2v1h-2zM384 629h3v2h-3zM281 307h2v2h-2zM571 97h3v2h-3zM571 148h2v2h-2zM10 51h2v2h-2zM570 296h2v3h-2zM331 368h2v3h-2zM348 63h3v1h-3zM751 301h3v1h-3zM21 216h4v3h-4zM256 114h4v3h-4zM715 100h2v2h-2zM668 145h2v2h-2zM375 507h3v2h-3zM777 25h4v3h-4zM710 581h2v2h-2zM518 134h2v2h-2zM395 606h3v2h-3zM476 414h3v2h-3zM105 715h3v2h-3zM504 510h3v3h-3zM105 378h2v1h-2zM49 694h2v2h-2zM296 678h4v3h-4zM498 262h4v3h-4zM268 113h2v2h-2zM752 742h2v2h-2zM559 604h3v1h-3zM592 73h2v1h-2zM296 342h4v1h-4zM445 542h4v3h-4zM328 135h2v2h-2zM251 589h4v1h-4zM13 466h4v3h-4zM533 187h3v2h-3zM550 188h4v2h-4zM287 606h3v2h-3zM6 386h3v1h-3zM761 26h2v2h-2zM182 631h4v3h-4zM447 115h4v1h-4zM482 438h3v2h-3zM702 174h2v2h-2zM243 148h2v2h-2zM55 704h2v2h-2zM546 95h3v2h-3zM569 185h2v3h-2zM737 522h3v3h-3zM640 142h3v2h-3zM268 746h4v3h-4zM395 506h2v3h-2zM4 750h2v2h-2zM794 394h2v3h-2zM407 3h3v3h-3zM202 774h3v1h-3zM231 38h2v2h-2zM213 427h2v2h-2zM499 218h4v2h-4zM2 343h3v1h-3zM329 109h2v2h-2zM609 667h2v3h-2zM602 567h3v3h-3zM387 735h3v3h-3zM790 411h4v3h-4zM458 630h4v3h-4zM599 400h4v2h-4zM471 324h4v2h-4zM87 21h2v1h-2zM423 218h3v1h-3zM79 526h3v3h-3zM296 670h3v1h-3zM427 252h4v2h-4zM181 614h2v3h-2zM36 627h4v3h-4zM196 498h3v1h-3zM201 121h2v3h-2zM281 266h3v3h-3zM106 71h3v2h-3zM141 187h2v1h-2zM76 491h3v3h-3zM347 493h3v3h-3zM310 331h3v2h-3zM447 252h2v2h-2zM299 127h4v2h-4zM375 99h2v2h-2zM752 404h3v3h-3zM225 226h3v2h-3zM182 114h2v1h-2zM512 303h4v2h-4zM729 455h3v2h-3zM179 102h4v2h-4zM90 457h3v1h-3zM193 302h4v1h-4zM450 298h2v1h-2zM752 220h2v3h-2zM208 533h2v2h-2zM250 55h3v3h-3zM82 562h4v3h-4zM5 277h3v1h-3zM646 517h3v2h-3zM189 504h2v2h-2zM594 676h3v1h-3zM143 570h3v1h-3zM465 272h2v3h-2zM518 661h2v3h-2zM630 455h3v2h-3zM579 184h4v1h-4zM735 760h2v2h-2zM585 162h4v3h-4zM526 492h2v2h-2zM487 505h2v1h-2zM51 194h3v1h-3zM549 539h4v1h-4zM433 620h2v2h-2zM668 436h2v2h-2zM62 616h3v3h-3zM497 516h2v2h-2zM567 448h3v2h-3zM232 422h3v3h-3zM495 224h4v3h-4zM562 70h2v2h-2zM642 405h4v1h-4zM188 547h3v1h-3zM343 35h3v3h-3zM218 672h4v2h-4zM761 619h2v1h-2zM263 777h3v3h-3zM28 232h2v3h-2zM447 181h2v2h-2zM399 617h3v2h-3zM562 383h4v2h-4zM598 381h3v2h-3zM801 155h2v2h-2zM256 138h2v3h-2zM459 394h4v3h-4zM283 236h3v3h-3zM204 205h3v1h-3zM549 527h4v2h-4zM371 447h2v2h-2zM25 89h3v3h-3zM109 144h2v2h-2zM178 190h3v2h-3zM549 741h4v3h-4zM366 457h3v3h-3zM70 48h2v2h-2zM805 234h2v2h-2zM630 171h2v3h-2zM82 301h2v2h-2zM26 315h4v1h-4zM159 491h3v2h-3zM666 145h2v2h-2zM406 224h2v2h-2zM552 771h3v1h-3zM404 28h3v2h-3zM319 392h4v2h-4zM135 339h4v3h-4zM194 429h4v2h-4zM225 286h2v3h-2zM565 146h2v1h-2zM207 162h2v2h-2zM525 175h3v2h-3zM640 173h3v2h-3zM560 411h4v1h-4zM407 293h2v1h-2zM205 19h3v2h-3zM579 406h4v1h-4zM536 59h3v2h-3zM609 500h2v2h-2zM112 622h4v1h-4zM568 641h4v1h-4zM91 448h4v2h-4zM702 515h3v2h-3zM451 477h3v2h-3zM682 689h3v2h-3zM80 343h3v2h-3zM729 43h4v1h-4zM39 17h2v3h-2zM624 109h2v1h-2zM246 134h2v3h-2zM724 31h4v3h-4zM748 543h4v2h-4zM617 203h2v3h-2zM162 681h4v2h-4zM589 93h3v3h-3zM150 198h3v3h-3zM437 343h2v2h-2zM262 399h2v2h-2zM643 196h2v1h-2zM696 623h2v2h-2zM198 245h3v2h-3zM251 511h3v3h-3zM622 713h4v3h-4zM270 219h3v3h-3zM572 570h2v2h-2zM580 131h4v2h-4zM602 597h4v3h-4zM594 295h3v2h-3zM730 576h4v2h-4zM135 389h2v3h-2zM741 719h3v1h-3zM282 446h3v1h-3zM400 377h3v2h-3zM660 166h3v2h-3zM100 716h2v1h-2zM105 558h2v2h-2zM325 230h4v1h-4zM747 253h3v2h-3zM470 458h3v2h-3zM750 546h3v2h-3zM693 575h3v3h-3zM408 634h2v2h-2zM435 203h2v2h-2zM543 620h4v3h-4zM762 119h3v2h-3zM636 139h2v2h-2zM234 86h3v1h-3zM291 325h3v2h-3zM262 16h3v2h-3zM31 503h3v1h-3zM636 585h4v2h-4zM292 478h2v1h-2zM583 124h3v2h-3zM176 292h4v3h-4zM669 59h3v1h-3zM692 273h3v1h-3zM82 697h4v1h-4zM347 463h3v2h-3zM33 765h4v1h-4zM741 353h4v2h-4zM44 477h2v2h-2zM187 195h2v3h-2zM151 86h3v2h-3zM519 217h2v2h-2zM780 651h3v2h-3zM372 378h4v1h-4zM779 292h2v3h-2zM402 533h3v2h-3zM806 374h2v2h-2zM121 473h2v3h-2zM611 369h4v2h-4zM9 343h3v1h-3zM606 49h4v1h-4zM560 775h2v3h-2zM739 53h2v3h-2zM666 573h3v1h-3zM548 645h3v1h-3zM225 68h3v3h-3zM327 506h2v2h-2zM26 749h3v2h-3zM513 373h2v2h-2zM778 570h4v1h-4zM774 714h4v2h-4zM202 53h2v3h-2zM99 586h3v2h-3zM221 95h3v2h-3zM23 598h4v2h-4zM796 391h2v2h-2zM139 669h4v3h-4zM320 34h2v1h-2zM519 448h3v3h-3zM94 240h2v2h-2zM440 701h3v2h-3zM479 718h2v2h-2zM168 440h4v2h-4zM634 684h2v2h-2zM330 96h2v2h-2zM547 210h2v1h-2zM68 536h3v3h-3zM391 177h2v1h-2zM686 752h4v3h-4zM243 150h3v2h-3zM498 302h3v3h-3zM253 220h2v3h-2zM37 733h4v2h-4zM145 728h4v3h-4zM75 1h2v2h-2zM803 699h2v2h-2zM384 178h3v2h-3zM463 622h3v2h-3zM484 137h3v3h-3zM468 19h4v2h-4zM539 101h4v3h-4zM95 40h2v2h-2zM61 50h4v3h-4zM626 267h4v1h-4zM394 283h2v3h-2zM185 83h2v3h-2zM742 625h2v3h-2zM277 734h2v2h-2zM275 763h3v2h-3zM813 667h2v3h-2zM377 445h3v3h-3zM4 373h2v1h-2zM536 349h2v1h-2zM243 445h4v3h-4zM284 391h2v2h-2zM274 630h3v3h-3zM46 505h3v3h-3zM804 691h3v3h-3zM143 457h3v2h-3zM775 243h2v3h-2zM567 29h4v2h-4zM64 253h3v2h-3zM140 472h3v1h-3zM242 252h3v1h-3zM63 201h4v2h-4zM801 456h3v1h-3zM719 430h3v1h-3zM485 305h4v1h-4zM334 413h2v1h-2zM195 116h2v2h-2zM134 174h2v2h-2zM361 191h2v2h-2zM366 668h2v3h-2zM340 231h2v2h-2zM315 58h2v3h-2zM184 700h2v3h-2zM292 565h3v1h-3zM8 326h3v1h-3zM132 61h2v1h-2zM62 493h3v3h-3zM7 108h3v2h-3zM573 337h3v2h-3zM521 46h2v3h-2zM50 234h4v2h-4zM99 354h4v1h-4zM299 169h2v1h-2zM479 81h3v1h-3zM480 766h4v2h-4zM633 574h2v3h-2zM773 30h3v1h-3zM16 338h4v1h-4zM617 260h3v2h-3zM442 704h3v3h-3zM134 59h4v2h-4zM614 149h3v2h-3zM47 113h3v1h-3zM710 591h2v3h-2zM484 777h2v2h-2zM805 682h3v3h-3zM286 716h2v2h-2zM406 315h2v2h-2zM147 78h4v3h-4zM383 391h2v2h-2zM79 768h2v3h-2zM292 499h3v1h-3zM328 213h4v1h-4zM330 721h3v1h-3zM7 658h3v2h-3zM118 252h2v3h-2zM128 588h2v2h-2zM549 596h2v2h-2zM233 615h2v1h-2zM247 452h4v2h-4zM768 279h3v3h-3zM414 56h3v3h-3zM763 131h4v2h-4zM800 710h3v2h-3zM418 250h3v3h-3zM683 192h4v2h-4zM726 599h3v3h-3zM522 259h3v2h-3zM668 299h3v2h-3zM236 276h4v2h-4zM264 425h3v3h-3zM803 357h3v2h-3zM204 105h2v1h-2zM127 233h2v1h-2zM75 476h2v2h-2zM14 656h4v2h-4zM35 321h2v2h-2zM434 342h2v1h-2zM137 772h2v2h-2zM92 628h2v2h-2zM572 195h2v1h-2zM677 262h4v2h-4zM30 376h3v2h-3zM788 545h3v3h-3zM383 9h4v2h-4zM278 569h3v2h-3zM675 567h3v2h-3zM143 589h4v2h-4zM86 713h2v3h-2zM397 215h3v2h-3zM314 384h2v3h-2zM281 405h2v2h-2zM3 494h2v2h-2zM224 29h3v3h-3zM164 50h2v1h-2zM732 767h3v2h-3zM543 208h4v3h-4zM264 770h3v1h-3zM348 446h3v2h-3zM287 338h4v2h-4zM159 586h4v2h-4zM380 42h3v3h-3zM312 230h4v3h-4zM205 651h2v3h-2zM477 463h2v1h-2zM318 759h2v2h-2zM517 600h2v2h-2zM36 703h2v2h-2zM334 178h2v3h-2zM658 766h4v2h-4zM259 382h2v1h-2zM343 760h2v3h-2zM805 650h2v2h-2zM799 207h4v3h-4zM302 322h3v2h-3zM459 492h2v3h-2zM487 350h3v3h-3zM211 607h3v3h-3zM383 295h2v2h-2zM488 53h2v3h-2zM131 775h3v3h-3zM322 229h2v1h-2zM73 202h3v3h-3zM42 303h2v1h-2zM453 406h3v2h-3zM660 120h3v2h-3zM735 353h2v2h-2zM398 270h2v2h-2zM550 248h3v2h-3zM100 293h3v2h-3zM273 451h3v2h-3zM788 165h4v2h-4zM415 448h2v1h-2zM519 641h3v3h-3zM485 448h3v1h-3zM14 343h3v1h-3zM190 532h3v2h-3zM548 692h2v3h-2zM754 619h4v1h-4zM389 237h3v3h-3zM166 693h3v3h-3zM746 693h3v3h-3zM439 705h2v3h-2zM421 119h2v2h-2zM591 384h3v3h-3zM311 526h2v2h-2zM331 394h2v1h-2zM139 643h3v1h-3zM316 159h2v2h-2zM768 17h3v2h-3zM734 766h3v2h-3zM693 654h2v2h-2zM413 8h2v1h-2zM397 243h4v1h-4zM779 240h2v3h-2zM93 348h2v2h-2zM556 711h2v1h-2zM552 326h3v3h-3zM640 751h2v3h-2zM620 132h2v1h-2zM605 275h2v2h-2zM159 611h2v1h-2zM181 316h4v3h-4zM636 369h3v2h-3zM243 171h2v1h-2zM375 624h4v2h-4zM465 763h3v2h-3zM403 769h3v2h-3zM785 625h3v2h-3zM9 189h3v2h-3zM567 707h4v1h-4zM666 644h4v2h-4zM41 610h4v1h-4zM72 226h2v2h-2zM716 681h3v3h-3zM689 46h2v2h-2zM197 580h3v2h-3zM529 41h3v3h-3zM471 427h2v2h-2zM425 106h4v2h-4zM772 526h3v2h-3zM181 623h3v2h-3zM758 313h2v2h-2zM156 638h3v3h-3zM472 735h3v3h-3zM661 88h2v3h-2zM465 144h2v3h-2zM345 707h4v1h-4zM494 470h4v1h-4zM207 652h3v2h-3zM727 338h3v2h-3zM504 370h3v2h-3zM748 545h3v2h-3zM560 261h2v3h-2zM726 545h4v2h-4zM367 165h4v1h-4zM274 295h3v3h-3zM356 533h2v2h-2zM276 471h2v1h-2zM205 298h3v2h-3zM86 694h2v3h-2zM32 472h4v2h-4zM31 418h2v1h-2zM49 584h2v1h-2zM288 320h2v2h-2zM77 521h2v2h-2zM644 241h4v2h-4zM571 691h3v3h-3zM146 447h3v2h-3zM164 521h3v2h-3zM651 411h2v1h-2zM54 577h2v2h-2zM297 392h3v1h-3zM308 305h4v1h-4zM618 244h3v3h-3zM397 763h2v3h-2zM357 200h2v1h-2zM275 98h2v2h-2zM163 526h4v1h-4zM445 10h3v3h-3zM115 97h2v3h-2zM101 428h3v2h-3zM448 169h2v2h-2zM417 767h3v1h-3zM214 404h2v2h-2zM462 696h3v3h-3zM78 94h3v2h-3zM317 425h3v2h-3zM493 89h3v2h-3zM653 475h3v2h-3zM198 469h2v2h-2zM114 620h3v3h-3zM808 200h2v3h-2zM465 744h2v3h-2zM760 165h2v1h-2zM595 161h2v3h-2zM605 457h2v1h-2zM643 276h3v2h-3zM560 375h3v2h-3zM552 672h3v2h-3zM714 345h4v2h-4zM793 710h3v3h-3zM45 492h4v1h-4zM430 454h2v2h-2zM459 769h2v2h-2zM54 582h3v2h-3zM516 522h3v1h-3zM576 564h4v2h-4zM40 458h4v2h-4zM739 267h2v1h-2zM525 59h2v2h-2zM48 338h2v3h-2zM88 663h3v2h-3zM73 360h3v1h-3zM131 458h3v1h-3zM659 475h3v2h-3zM122 583h2v2h-2zM807 149h4v2h-4zM341 700h2v1h-2zM52 477h2v3h-2zM772 750h3v2h-3zM89 476h2v2h-2zM172 66h2v2h-2zM204 690h4v2h-4zM501 54h2v1h-2zM622 48h3v3h-3zM511 492h4v2h-4zM812 298h3v2h-3zM362 265h2v2h-2zM578 84h3v2h-3zM470 366h4v2h-4zM585 486h2v2h-2zM171 62h4v2h-4zM120 139h3v1h-3zM538 675h3v2h-3zM53 176h4v1h-4zM569 96h2v3h-2zM26 740h2v2h-2zM643 244h2v2h-2zM183 509h4v2h-4zM201 515h3v2h-3zM725 737h2v2h-2zM87 75h3v2h-3zM647 445h2v1h-2zM725 651h2v1h-2zM396 397h2v2h-2zM14 239h4v1h-4zM56 70h2v2h-2zM108 698h2v3h-2zM196 129h2v2h-2zM222 453h2v3h-2zM312 64h2v2h-2zM87 95h4v1h-4zM24 525h4v3h-4zM558 547h3v2h-3zM546 657h2v3h-2zM722 133h3v3h-3zM103 229h2v2h-2zM469 86h2v2h-2zM202 734h2v2h-2zM658 65h3v2h-3zM670 428h2v1h-2zM576 303h4v2h-4zM614 303h2v2h-2zM442 404h2v2h-2zM480 693h2v2h-2zM456 492h2v3h-2zM258 336h3v2h-3zM628 28h4v2h-4zM745 295h4v3h-4zM506 546h4v2h-4zM152 458h3v2h-3zM324 39h2v2h-2zM303 585h3v1h-3zM423 287h2v2h-2zM386 284h3v2h-3zM573 566h3v2h-3zM800 281h3v3h-3zM101 445h4v1h-4zM313 391h3v2h-3zM252 643h2v3h-2zM371 521h2v2h-2zM611 340h3v1h-3zM801 39h2v2h-2zM144 739h4v2h-4zM279 103h2v2h-2zM767 702h2v1h-2zM706 9h3v1h-3zM451 561h2v1h-2zM289 505h4v1h-4zM335 725h3v2h-3zM301 128h3v3h-3zM257 512h3v2h-3zM399 289h4v3h-4zM12 36h4v2h-4zM245 616h4v2h-4zM565 672h4v3h-4zM546 647h2v1h-2zM721 540h4v2h-4zM274 560h3v2h-3zM754 737h3v1h-3zM484 157h3v2h-3zM583 460h3v3h-3zM602 482h4v2h-4zM61 752h3v1h-3zM195 559h2v3h-2zM105 331h3v2h-3zM158 683h4v2h-4zM234 150h3v1h-3zM61 309h3v3h-3zM474 499h2v1h-2zM134 9h4v2h-4zM236 317h2v2h-2zM441 312h2v2h-2zM417 202h3v1h-3zM536 39h3v2h-3zM239 646h3v2h-3zM152 181h4v2h-4zM318 161h3v2h-3zM96 299h3v3h-3zM415 509h3v3h-3zM15 757h2v2h-2zM393 73h3v2h-3zM405 362h3v3h-3zM142 191h2v1h-2zM40 123h3v1h-3zM781 88h3v1h-3zM390 630h4v2h-4zM9 743h2v2h-2zM129 713h2v3h-2zM498 466h2v2h-2zM251 589h2v1h-2zM48 769h3v2h-3zM65 368h2v3h-2zM47 199h3v1h-3zM653 373h3v3h-3zM621 222h2v2h-2zM299 305h4v1h-4zM204 238h3v2h-3zM713 22h3v2h-3zM395 512h2v2h-2zM812 200h3v3h-3zM739 233h3v2h-3zM733 187h2v3h-2zM239 690h3v3h-3zM532 728h4v3h-4zM354 426h2v3h-2zM279 204h2v2h-2zM431 363h2v1h-2zM386 79h3v2h-3zM208 415h4v3h-4zM472 326h2v2h-2zM149 589h3v2h-3zM22 713h3v1h-3zM627 155h4v2h-4zM807 74h2v1h-2zM675 72h3v2h-3zM617 134h3v3h-3zM726 5h3v2h-3zM73 636h2v2h-2zM518 272h3v3h-3zM417 475h2v2h-2zM509 96h3v2h-3zM243 270h3v2h-3zM637 471h2v2h-2zM252 316h3v1h-3zM687 125h2v2h-2zM589 128h4v1h-4zM232 651h4v2h-4zM608 650h2v1h-2zM528 250h3v3h-3zM274 80h2v3h-2zM51 487h4v2h-4zM380 387h4v1h-4zM629 327h2v2h-2zM751 145h2v2h-2zM76 180h4v2h-4zM306 343h4v2h-4zM561 298h3v3h-3zM577 611h3v1h-3zM578 361h4v3h-4zM727 35h4v2h-4zM506 196h2v3h-2zM391 661h2v2h-2zM271 485h2v2h-2zM131 770h2v1h-2zM174 508h2v3h-2zM411 209h4v1h-4zM404 145h2v2h-2zM636 763h3v1h-3zM110 358h2v2h-2zM482 662h2v1h-2zM448 742h2v3h-2zM147 748h2v2h-2zM337 572h2v1h-2zM661 168h2v1h-2zM136 672h2v3h-2zM609 338h2v1h-2zM77 22h3v2h-3zM261 434h3v3h-3zM179 380h3v2h-3zM119 518h2v2h-2zM133 396h4v2h-4zM37 416h3v3h-3zM512 577h3v1h-3zM333 714h3v2h-3zM472 409h2v1h-2zM124 530h2v1h-2zM635 731h2v2h-2zM18 325h3v2h-3zM699 274h2v2h-2zM187 736h3v2h-3zM202 41h4v1h-4zM510 199h3v1h-3zM349 306h2v3h-2zM13 681h3v1h-3zM586 182h4v3h-4zM656 502h2v1h-2zM665 334h2v3h-2zM28 145h3v2h-3zM320 308h4v2h-4zM34 2h2v2h-2zM225 331h4v2h-4zM794 517h3v2h-3zM636 320h4v2h-4zM661 493h4v1h-4zM399 89h2v2h-2zM420 449h3v2h-3zM727 326h3v2h-3zM689 237h3v2h-3zM749 162h2v2h-2zM711 162h4v1h-4zM440 29h2v2h-2zM417 52h3v2h-3zM643 513h2v3h-2zM665 313h4v3h-4zM73 735h2v1h-2zM559 172h3v3h-3zM474 567h2v2h-2zM370 629h4v2h-4zM531 194h2v2h-2zM773 473h4v2h-4zM553 356h2v2h-2zM402 160h4v2h-4zM179 352h2v2h-2zM442 678h2v2h-2zM333 317h3v2h-3zM164 688h3v1h-3zM652 201h2v3h-2zM654 150h4v2h-4zM23 340h3v2h-3zM537 484h2v2h-2zM75 105h2v3h-2zM480 287h3v2h-3zM355 763h4v2h-4zM385 157h4v2h-4zM153 557h2v2h-2zM161 627h2v3h-2zM642 421h4v1h-4zM186 84h2v2h-2zM753 108h2v3h-2zM741 343h2v2h-2zM213 221h3v1h-3zM402 416h3v3h-3zM592 673h2v2h-2zM813 21h2v1h-2zM184 345h3v3h-3zM337 237h2v3h-2zM772 144h4v2h-4zM340 513h3v1h-3zM14 389h3v2h-3zM442 478h2v2h-2zM11 311h3v3h-3zM659 590h4v1h-4zM411 64h3v3h-3zM698 209h2v3h-2zM710 501h2v3h-2zM10 605h4v2h-4zM581 302h2v1h-2zM556 618h2v3h-2zM740 413h3v1h-3zM297 570h4v2h-4zM145 41h3v2h-3zM137 153h2v3h-2zM641 273h2v2h-2zM402 429h3v1h-3zM92 402h3v2h-3zM70 494h4v3h-4zM632 408h2v2h-2zM72 60h2v2h-2zM585 508h4v2h-4zM642 293h3v1h-3zM552 439h4v2h-4zM3 53h2v2h-2zM324 383h2v2h-2zM118 32h4v3h-4zM666 223h2v3h-2zM636 280h2v2h-2zM333 9h2v2h-2zM252 663h4v3h-4zM349 399h3v2h-3zM775 537h2v3h-2zM233 636h3v1h-3zM326 83h2v2h-2zM494 491h2v1h-2zM468 159h2v1h-2zM707 385h2v2h-2zM164 481h2v1h-2zM808 55h4v1h-4zM321 773h2v2h-2zM510 342h3v1h-3zM725 422h3v2h-3zM17 271h2v1h-2zM629 98h2v1h-2zM754 735h3v2h-3zM208 18h3v1h-3zM209 45h2v3h-2zM97 144h3v1h-3zM487 661h4v2h-4zM462 515h2v1h-2zM387 470h2v2h-2zM259 526h3v1h-3zM347 232h2v2h-2zM598 721h4v3h-4zM125 777h2v2h-2zM367 269h4v3h-4zM722 199h3v2h-3zM432 173h3v1h-3zM324 105h2v2h-2zM214 355h4v3h-4zM140 173h3v2h-3zM49 9h4v3h-4zM667 538h2v2h-2zM40 73h4v2h-4zM375 550h3v1h-3zM291 469h4v2h-4zM688 110h3v2h-3zM214 151h2v2h-2zM586 409h3v2h-3zM263 743h2v2h-2zM762 374h2v2h-2zM279 730h4v2h-4zM58 702h3v2h-3zM534 222h2v3h-2zM586 370h3v2h-3zM212 290h3v2h-3zM484 318h3v3h-3zM284 63h3v2h-3zM69 320h2v2h-2zM548 289h3v1h-3zM479 515h2v3h-2zM740 338h2v2h-2zM76 547h4v2h-4zM657 213h2v2h-2zM361 238h4v2h-4zM801 237h4v2h-4zM143 239h4v2h-4zM210 241h4v2h-4zM254 238h4v2h-4zM158 240h4v2h-4zM109 243h4v2h-4zM34 238h4v2h-4zM129 239h4v2h-4zM152 239h4v2h-4zM691 241h4v2h-4zM187 243h4v2h-4zM352 239h4v2h-4zM525 237h4v2h-4zM351 238h4v2h-4zM102 240h4v2h-4zM60 240h4v2h-4zM515 243h4v2h-4zM140 237h4v2h-4zM41 239h4v2h-4zM770 240h4v2h-4zM331 242h4v2h-4zM1 241h4v2h-4zM701 237h4v2h-4zM257 240h4v2h-4zM361 241h4v2h-4zM782 237h4v2h-4zM22 237h4v2h-4zM46 241h4v2h-4zM700 240h4v2h-4zM117 240h4v2h-4zM32 241h4v2h-4zM352 243h4v2h-4z" fill="#030342"/><path d="M633 363h3v2h-3zM602 310h3v1h-3zM733 607h4v3h-4zM211 539h3v2h-3zM570 682h3v2h-3zM69 212h2v2h-2zM616 638h3v3h-3zM69 746h2v3h-2zM36 650h3v2h-3zM380 93h2v2h-2zM116 408h2v2h-2zM777 661h2v2h-2zM27 553h3v3h-3zM1 305h4v3h-4zM426 531h3v1h-3zM46 152h3v1h-3zM210 520h2v3h-2zM6 228h2v2h-2zM379 207h2v3h-2zM597 777h3v2h-3zM778 97h2v3h-2zM296 261h2v2h-2zM608 537h3v1h-3zM192 219h2v2h-2zM758 290h3v2h-3zM32 570h2v2h-2zM319 316h3v2h-3zM318 355h3v3h-3zM626 38h3v1h-3zM206 417h3v2h-3zM78 497h3v3h-3zM306 340h2v3h-2zM241 723h2v1h-2zM139 704h2v2h-2zM608 255h3v2h-3zM309 663h4v3h-4zM778 182h2v3h-2zM507 61h2v1h-2zM22 83h3v2h-3zM666 638h2v3h-2zM103 360h2v2h-2zM422 515h3v1h-3zM537 282h3v1h-3zM306 326h2v2h-2zM461 450h3v1h-3zM679 632h4v2h-4zM190 451h4v2h-4zM77 160h4v3h-4zM478 167h3v3h-3zM365 125h2v2h-2zM360 629h2v3h-2zM761 675h2v3h-2zM361 615h3v2h-3zM489 645h3v2h-3zM254 433h2v1h-2zM90 95h4v2h-4zM516 630h2v1h-2zM705 484h4v2h-4zM69 460h3v1h-3zM417 689h4v2h-4zM790 309h2v2h-2zM639 552h2v3h-2zM792 694h2v1h-2zM24 60h3v3h-3zM512 669h2v2h-2zM203 35h2v2h-2zM782 386h2v3h-2zM309 6h3v2h-3zM783 329h4v2h-4zM552 72h3v1h-3zM230 314h2v2h-2zM229 70h3v3h-3zM52 7h2v2h-2zM535 107h4v1h-4zM459 714h2v2h-2zM654 88h2v2h-2zM123 725h3v2h-3zM323 601h4v1h-4zM60 149h4v2h-4zM39 349h3v1h-3zM161 571h4v1h-4zM65 630h3v2h-3zM174 710h3v3h-3zM186 293h3v2h-3zM261 475h2v1h-2zM719 164h3v1h-3zM432 654h2v2h-2zM214 655h3v3h-3zM52 159h2v3h-2zM449 582h2v3h-2zM706 624h3v2h-3zM447 167h2v3h-2zM27 466h3v2h-3zM270 656h3v2h-3zM122 74h2v2h-2zM725 12h3v2h-3zM405 607h4v1h-4zM163 487h3v1h-3zM110 645h2v3h-2zM672 611h3v1h-3zM725 475h3v2h-3zM174 531h2v1h-2zM468 214h2v2h-2zM619 60h2v3h-2zM289 511h2v2h-2zM378 34h4v1h-4zM359 446h3v1h-3zM465 560h2v3h-2zM570 623h2v3h-2zM40 188h2v1h-2zM758 497h3v1h-3zM87 613h2v1h-2zM595 662h2v1h-2zM132 127h3v2h-3zM188 690h3v1h-3zM628 603h2v2h-2zM530 419h3v1h-3zM352 93h4v3h-4zM501 130h3v3h-3zM53 12h2v2h-2zM722 594h2v3h-2zM606 438h3v1h-3zM698 287h2v2h-2zM610 454h3v1h-3zM553 10h2v1h-2zM389 399h3v2h-3zM342 412h4v1h-4zM173 256h3v3h-3zM277 592h2v3h-2zM490 662h4v1h-4zM803 775h2v2h-2zM366 664h3v2h-3zM31 764h2v1h-2zM75 734h3v3h-3zM256 568h2v3h-2zM186 248h3v2h-3zM282 657h2v1h-2zM638 609h2v2h-2zM253 492h3v2h-3zM489 777h2v3h-2zM364 10h2v2h-2zM170 423h2v1h-2zM545 112h4v2h-4zM398 2h2v3h-2zM233 106h2v2h-2zM285 414h3v1h-3zM771 429h2v2h-2zM593 319h4v2h-4zM684 474h2v2h-2zM41 332h3v1h-3zM539 72h2v2h-2zM31 325h2v2h-2zM35 276h4v2h-4zM790 502h4v2h-4zM422 194h4v3h-4zM84 154h2v2h-2zM729 661h3v2h-3zM81 551h2v2h-2zM384 601h2v1h-2zM466 402h2v3h-2zM618 582h2v2h-2zM180 302h4v2h-4zM232 66h3v1h-3zM703 158h3v1h-3zM108 290h2v1h-2zM428 120h3v2h-3zM617 321h3v2h-3zM255 57h4v3h-4zM146 317h3v2h-3zM426 234h3v1h-3zM355 178h3v3h-3zM541 615h3v1h-3zM67 161h3v2h-3zM310 10h3v1h-3zM722 97h2v3h-2zM207 579h3v2h-3zM22 656h3v3h-3zM95 467h3v1h-3zM623 191h2v2h-2zM358 690h2v3h-2zM187 1h3v1h-3zM111 669h2v1h-2zM263 577h3v2h-3zM310 718h3v1h-3zM156 5h3v3h-3zM364 365h4v3h-4zM406 233h3v1h-3zM65 253h3v2h-3zM130 594h3v2h-3zM11 346h3v2h-3zM804 8h2v3h-2zM653 486h3v3h-3zM523 354h4v2h-4zM208 739h2v2h-2zM269 105h4v1h-4zM399 62h4v3h-4zM494 13h3v2h-3zM225 23h3v1h-3zM107 322h2v3h-2zM653 103h3v2h-3zM708 511h2v3h-2zM214 342h2v2h-2zM667 238h3v2h-3zM673 100h3v2h-3zM19 441h2v3h-2zM532 278h3v1h-3zM608 741h4v2h-4zM105 230h2v2h-2zM782 6h3v2h-3zM207 20h3v2h-3zM647 755h4v2h-4zM333 435h2v1h-2zM354 775h3v3h-3zM363 636h4v3h-4zM356 508h2v2h-2zM165 703h3v1h-3zM465 597h3v1h-3zM11 73h4v2h-4zM804 603h2v1h-2zM441 379h2v1h-2zM440 375h4v2h-4zM796 50h2v1h-2zM549 448h2v1h-2zM122 752h2v3h-2zM772 365h3v2h-3zM646 92h3v3h-3zM663 367h3v2h-3zM252 649h3v3h-3zM113 394h3v2h-3zM532 601h4v2h-4zM215 496h3v2h-3zM497 486h2v1h-2zM388 26h2v3h-2zM96 402h3v3h-3zM753 432h3v1h-3zM415 371h2v1h-2zM36 97h4v2h-4zM626 59h4v3h-4zM70 379h3v1h-3zM33 775h3v2h-3zM399 425h2v1h-2zM61 391h2v2h-2zM777 666h4v2h-4zM673 616h2v3h-2zM36 318h2v2h-2zM224 95h4v2h-4zM780 381h2v2h-2zM213 707h2v2h-2zM235 425h2v1h-2zM75 278h2v2h-2zM402 751h2v3h-2zM810 121h3v3h-3zM168 181h3v1h-3zM60 637h3v2h-3zM580 670h2v2h-2zM695 757h2v2h-2zM670 396h2v1h-2zM569 678h4v1h-4zM130 490h3v1h-3zM506 235h2v2h-2zM656 138h2v2h-2zM763 435h3v1h-3zM766 349h2v2h-2zM247 363h2v1h-2zM257 521h2v3h-2zM751 50h2v2h-2zM3 29h2v3h-2zM237 160h3v1h-3zM57 536h2v2h-2zM186 106h3v2h-3zM296 566h2v3h-2zM574 644h4v3h-4zM809 240h2v2h-2zM756 50h4v2h-4zM229 4h4v1h-4zM526 647h3v3h-3zM657 225h2v3h-2zM247 247h2v3h-2zM274 677h2v2h-2zM603 485h2v1h-2zM278 394h3v2h-3zM508 720h2v3h-2zM167 110h3v2h-3zM443 83h3v2h-3zM316 641h2v3h-2zM386 642h2v2h-2zM505 309h2v2h-2zM119 756h2v2h-2zM549 480h3v3h-3zM334 487h3v1h-3zM297 382h2v1h-2zM380 285h3v2h-3zM512 228h2v3h-2zM336 271h4v3h-4zM591 527h2v2h-2zM174 13h3v2h-3zM584 386h3v2h-3zM695 365h2v1h-2zM287 744h3v2h-3zM628 447h3v2h-3zM784 218h3v2h-3zM257 168h3v1h-3zM655 478h2v3h-2zM556 248h2v2h-2zM97 196h2v3h-2zM242 502h2v3h-2zM712 609h4v2h-4zM792 569h4v2h-4zM787 32h3v1h-3zM360 768h2v2h-2zM78 244h3v2h-3zM807 708h3v2h-3zM798 267h2v2h-2zM16 239h3v2h-3zM236 351h3v3h-3zM115 34h2v2h-2zM197 508h2v2h-2zM486 307h2v2h-2zM657 58h3v1h-3zM239 421h3v2h-3zM289 494h2v2h-2zM178 128h2v1h-2zM624 497h2v3h-2zM343 680h4v2h-4zM591 160h2v2h-2zM690 512h3v2h-3zM541 692h2v2h-2zM189 707h3v1h-3zM310 157h2v2h-2zM401 78h2v2h-2zM271 765h2v1h-2zM392 120h2v2h-2zM754 714h4v1h-4zM771 24h4v1h-4zM45 375h3v3h-3zM398 605h3v2h-3zM133 498h2v2h-2zM69 141h3v2h-3zM346 745h3v2h-3zM808 654h2v2h-2zM544 525h4v3h-4zM597 20h4v2h-4zM235 531h3v3h-3zM198 92h4v2h-4zM760 152h2v1h-2zM556 349h4v2h-4zM425 84h3v1h-3zM136 459h3v2h-3zM455 545h3v2h-3zM339 512h3v2h-3zM351 699h3v3h-3zM304 472h3v3h-3zM665 287h3v2h-3zM13 29h2v3h-2zM348 94h4v2h-4zM732 246h3v2h-3zM185 172h4v2h-4zM268 427h3v1h-3zM11 89h2v2h-2zM775 417h4v1h-4zM718 165h2v2h-2zM704 275h2v1h-2zM104 371h4v3h-4zM677 164h3v2h-3zM76 620h3v1h-3zM218 688h2v2h-2zM739 218h2v2h-2zM647 101h3v1h-3zM657 556h4v2h-4zM605 132h3v1h-3zM126 282h3v2h-3zM436 58h3v2h-3zM767 654h3v3h-3zM748 115h2v2h-2zM18 398h4v3h-4zM432 417h3v3h-3zM384 294h4v2h-4zM132 224h2v2h-2zM573 149h2v1h-2zM28 668h3v2h-3zM38 233h2v2h-2zM246 768h2v2h-2zM797 468h2v1h-2zM512 315h4v1h-4zM722 416h3v1h-3zM262 250h2v2h-2zM746 661h3v1h-3zM496 622h2v2h-2zM586 70h2v3h-2zM261 279h4v2h-4zM149 464h2v2h-2zM233 671h2v3h-2zM784 300h2v2h-2zM22 305h3v2h-3zM62 216h2v2h-2zM604 238h2v3h-2zM715 499h4v1h-4zM206 76h4v2h-4zM747 407h2v3h-2zM230 769h3v2h-3zM723 199h2v2h-2zM376 565h2v3h-2zM165 30h4v1h-4zM166 668h4v1h-4zM49 319h3v1h-3zM368 155h3v2h-3zM342 697h2v2h-2zM127 185h2v2h-2zM75 448h2v1h-2zM451 506h3v2h-3zM79 143h2v2h-2zM173 472h2v3h-2zM391 474h2v2h-2zM373 269h3v2h-3zM528 269h3v2h-3zM370 543h3v2h-3zM582 615h2v1h-2zM48 655h2v2h-2zM385 620h2v1h-2zM518 638h2v2h-2zM71 177h2v1h-2zM468 435h2v2h-2zM43 534h2v2h-2zM336 156h3v2h-3zM261 391h3v3h-3zM191 15h2v3h-2zM263 772h4v2h-4zM814 101h2v2h-2zM289 503h4v3h-4zM814 83h3v2h-3zM708 564h2v3h-2zM512 125h4v1h-4zM427 737h2v3h-2zM668 733h3v2h-3zM533 29h3v2h-3zM283 407h2v2h-2zM588 285h4v2h-4zM573 182h2v3h-2zM465 391h3v3h-3zM282 239h3v3h-3zM347 95h2v2h-2zM681 387h3v2h-3zM393 83h4v2h-4zM497 649h2v1h-2zM26 653h3v2h-3zM749 425h3v3h-3zM732 457h3v2h-3zM22 410h2v2h-2zM174 334h3v2h-3zM47 410h3v1h-3zM17 336h2v3h-2zM141 3h4v2h-4zM771 724h2v2h-2zM246 264h2v1h-2zM297 745h2v2h-2zM134 328h4v1h-4zM553 483h3v2h-3zM172 209h2v2h-2zM783 517h2v2h-2zM251 45h3v2h-3zM432 744h3v2h-3zM718 252h3v3h-3zM124 596h3v1h-3zM114 517h3v2h-3zM773 476h2v1h-2zM486 168h3v1h-3zM629 547h3v3h-3zM20 729h2v3h-2zM250 711h2v2h-2zM773 547h3v2h-3zM708 433h3v2h-3zM245 95h2v2h-2zM435 751h4v2h-4zM630 264h3v2h-3zM243 249h2v1h-2zM766 598h3v1h-3zM154 263h3v2h-3zM657 413h2v3h-2zM605 769h4v1h-4zM414 186h2v2h-2zM751 2h2v2h-2zM560 535h4v2h-4zM81 676h3v1h-3zM242 485h2v1h-2zM406 720h2v2h-2zM62 654h3v2h-3zM148 358h3v2h-3zM229 696h3v2h-3zM401 509h2v3h-2zM441 419h2v2h-2zM357 594h2v3h-2zM328 96h3v2h-3zM457 130h2v1h-2zM284 600h3v2h-3zM814 318h2v2h-2zM564 414h2v2h-2zM230 130h2v2h-2zM545 49h3v2h-3zM245 10h3v1h-3zM230 240h2v2h-2zM19 506h4v2h-4zM811 110h2v3h-2zM213 351h2v2h-2zM789 771h2v3h-2zM552 95h4v1h-4zM787 31h3v3h-3zM66 735h2v2h-2zM99 422h3v1h-3zM385 226h2v1h-2zM124 327h4v1h-4zM672 267h3v1h-3zM360 479h2v3h-2zM446 327h2v3h-2zM363 469h2v1h-2zM93 508h3v1h-3zM99 479h3v2h-3zM126 737h2v2h-2zM148 240h3v3h-3zM368 126h3v3h-3zM132 574h2v2h-2zM572 561h2v2h-2zM92 477h3v2h-3zM193 510h3v2h-3zM599 744h3v2h-3zM487 146h3v2h-3zM1 358h3v3h-3zM166 190h4v2h-4zM352 27h4v2h-4zM474 465h3v2h-3zM134 298h3v2h-3zM99 389h2v3h-2zM453 359h2v3h-2zM35 371h2v2h-2zM303 594h2v3h-2zM29 614h2v2h-2zM402 735h3v2h-3zM541 67h4v1h-4zM707 24h3v2h-3zM496 464h4v3h-4zM23 391h2v3h-2zM497 593h3v2h-3zM362 268h2v2h-2zM531 18h3v2h-3zM566 392h3v2h-3zM784 736h3v2h-3zM784 323h3v2h-3zM391 602h2v1h-2zM589 587h3v2h-3zM441 402h4v2h-4zM550 92h3v3h-3zM568 67h3v2h-3zM431 492h2v1h-2zM82 250h4v2h-4zM234 83h4v2h-4zM14 623h4v2h-4zM124 300h2v2h-2zM804 2h2v2h-2zM267 630h2v3h-2zM713 739h4v2h-4zM190 695h2v3h-2zM761 518h4v2h-4zM91 456h3v1h-3zM445 494h4v1h-4zM141 31h2v1h-2zM435 765h4v2h-4zM356 223h3v2h-3zM714 631h3v2h-3zM733 763h3v1h-3zM734 675h2v2h-2zM217 180h4v1h-4zM75 401h3v1h-3zM107 479h3v1h-3zM596 695h3v3h-3zM107 190h2v2h-2zM29 445h3v2h-3zM569 757h2v2h-2zM624 125h2v1h-2zM644 655h2v1h-2zM26 695h3v3h-3zM391 473h3v2h-3zM599 396h3v2h-3zM272 618h2v2h-2zM537 333h2v1h-2zM59 285h2v3h-2zM72 88h3v3h-3zM124 72h4v3h-4zM174 31h2v2h-2zM12 435h2v2h-2zM774 69h2v2h-2zM369 60h2v2h-2zM701 478h2v3h-2zM586 384h2v2h-2zM536 753h4v2h-4zM178 189h4v1h-4zM564 218h3v3h-3zM51 578h2v2h-2zM321 15h2v3h-2zM3 185h2v2h-2zM191 131h2v2h-2zM45 228h3v1h-3zM284 400h4v3h-4zM542 241h4v1h-4zM249 210h2v3h-2zM686 158h4v3h-4zM610 772h2v1h-2zM317 326h4v2h-4zM704 657h3v2h-3zM433 381h2v2h-2zM66 294h3v2h-3zM573 138h3v3h-3zM413 320h2v2h-2zM177 64h2v1h-2zM565 745h4v3h-4zM85 406h2v1h-2zM731 647h2v3h-2zM382 652h3v1h-3zM640 396h3v2h-3zM530 155h2v3h-2zM396 48h2v1h-2zM24 124h4v3h-4zM618 735h3v1h-3zM422 512h2v2h-2zM490 379h3v3h-3zM332 117h2v2h-2zM379 176h2v3h-2zM533 582h4v2h-4zM407 302h3v1h-3zM147 502h4v2h-4zM55 82h3v1h-3zM263 656h2v2h-2zM288 368h2v2h-2zM196 113h2v2h-2zM65 760h4v2h-4zM733 523h4v2h-4zM521 320h3v1h-3zM666 614h2v3h-2zM316 708h4v3h-4zM590 23h4v1h-4zM185 762h3v1h-3zM22 726h3v1h-3zM787 504h3v2h-3zM628 43h3v2h-3zM364 69h2v2h-2zM326 602h3v2h-3zM321 290h2v2h-2zM119 370h4v1h-4zM646 391h4v2h-4zM503 216h2v1h-2zM143 135h2v1h-2zM746 585h2v3h-2zM673 449h4v3h-4zM752 695h2v3h-2zM156 58h3v2h-3zM565 544h2v1h-2zM283 576h4v2h-4zM465 544h4v2h-4zM440 581h2v3h-2zM367 642h2v2h-2zM763 159h3v2h-3zM541 266h2v3h-2zM44 36h2v1h-2zM593 174h2v2h-2zM47 352h2v1h-2zM10 186h2v3h-2zM747 723h4v1h-4zM617 413h3v1h-3zM591 19h3v2h-3zM296 86h4v3h-4zM186 306h2v3h-2zM569 363h4v3h-4zM459 613h2v3h-2zM803 271h2v1h-2zM283 191h2v2h-2zM376 698h4v1h-4zM236 409h4v1h-4zM320 447h2v2h-2zM160 54h3v1h-3zM494 73h3v1h-3zM251 6h3v1h-3zM487 400h3v2h-3zM176 463h2v3h-2zM674 43h3v3h-3zM51 273h3v2h-3zM203 278h2v2h-2zM629 27h3v1h-3zM318 168h3v1h-3zM67 383h3v1h-3zM203 115h2v2h-2zM712 253h3v1h-3zM149 637h4v2h-4zM193 706h2v2h-2zM614 516h4v1h-4zM135 499h2v2h-2zM681 381h4v1h-4zM79 65h3v2h-3zM543 428h3v1h-3zM167 32h2v1h-2zM298 341h2v2h-2zM578 227h2v2h-2zM155 173h2v1h-2zM183 262h2v1h-2zM720 382h3v2h-3zM22 461h3v1h-3zM461 406h2v3h-2zM88 700h2v2h-2zM393 321h2v3h-2zM29 216h3v1h-3zM348 40h3v2h-3zM520 60h4v2h-4zM483 759h4v1h-4zM252 83h3v2h-3zM114 615h2v1h-2zM103 629h2v2h-2zM395 169h2v1h-2zM384 383h3v2h-3zM547 427h3v2h-3zM716 549h4v2h-4zM804 242h4v2h-4zM629 452h3v1h-3zM598 476h2v2h-2zM291 199h4v3h-4zM635 715h3v1h-3zM27 18h2v2h-2zM92 674h2v2h-2zM64 393h4v2h-4zM788 61h3v3h-3zM187 202h2v2h-2zM700 425h3v2h-3zM418 85h2v3h-2zM159 205h3v1h-3zM136 673h2v2h-2zM125 330h3v3h-3zM37 602h4v2h-4zM711 204h4v1h-4zM451 96h2v1h-2zM593 250h3v3h-3zM262 65h3v2h-3zM654 36h4v2h-4zM164 585h3v2h-3zM152 509h4v1h-4zM735 59h3v2h-3zM50 604h3v2h-3zM403 679h4v1h-4zM804 365h2v2h-2zM628 108h2v2h-2zM43 295h2v2h-2zM658 150h4v3h-4zM709 758h2v2h-2zM319 490h3v1h-3zM230 761h3v2h-3zM806 406h3v1h-3zM46 715h2v3h-2zM347 205h3v1h-3zM302 603h2v1h-2zM347 106h3v2h-3zM615 600h2v1h-2zM287 586h4v2h-4zM128 141h4v2h-4zM285 365h2v2h-2zM608 274h2v1h-2zM642 168h2v2h-2zM43 8h2v3h-2zM360 115h4v2h-4zM132 132h3v2h-3zM522 717h2v2h-2zM398 646h3v1h-3zM650 648h2v3h-2zM449 186h3v2h-3zM714 303h3v2h-3zM670 558h2v1h-2zM442 745h3v1h-3zM359 339h2v3h-2zM667 620h3v1h-3zM136 223h3v2h-3zM735 202h2v3h-2zM398 153h3v1h-3zM105 445h4v2h-4zM299 37h2v3h-2zM29 531h3v3h-3zM657 292h4v2h-4zM211 218h2v1h-2zM748 470h2v3h-2zM668 352h2v1h-2zM577 682h3v2h-3zM45 758h2v2h-2zM341 566h4v3h-4zM650 651h2v2h-2zM471 745h4v1h-4zM769 485h3v3h-3zM434 255h3v3h-3zM699 762h4v2h-4zM571 33h3v2h-3zM637 73h2v2h-2zM695 775h4v1h-4zM344 567h2v1h-2zM389 704h3v2h-3zM687 350h2v1h-2zM710 461h4v2h-4zM128 290h2v3h-2zM375 615h2v3h-2zM729 523h3v2h-3zM414 624h2v2h-2zM166 172h3v1h-3zM498 747h2v3h-2zM534 225h3v3h-3zM88 299h2v1h-2zM646 584h2v2h-2zM315 484h3v2h-3zM286 742h3v1h-3zM779 65h2v1h-2zM33 280h3v3h-3zM524 622h2v1h-2zM513 725h3v1h-3zM32 634h2v3h-2zM685 762h2v2h-2zM498 184h2v3h-2zM752 717h3v1h-3zM490 559h4v3h-4zM341 462h4v3h-4zM632 744h2v1h-2zM677 61h3v2h-3zM754 373h2v2h-2zM385 143h3v2h-3zM552 23h3v3h-3zM508 464h4v1h-4zM810 600h3v2h-3zM706 217h2v3h-2zM508 675h4v3h-4zM764 492h3v2h-3zM699 87h2v2h-2zM811 643h2v3h-2zM301 554h4v1h-4zM456 466h3v2h-3zM189 696h3v3h-3zM378 444h3v1h-3zM555 201h3v2h-3zM655 286h2v2h-2zM422 706h2v3h-2zM127 302h2v1h-2zM23 302h2v2h-2zM375 587h2v3h-2zM659 36h4v3h-4zM601 183h3v1h-3zM598 18h2v3h-2zM2 740h3v2h-3zM244 719h4v2h-4zM303 585h3v2h-3zM194 709h2v2h-2zM273 245h4v2h-4zM743 133h2v1h-2zM634 338h2v3h-2zM679 256h2v3h-2zM301 666h2v3h-2zM364 356h4v1h-4zM680 304h2v1h-2zM7 572h2v3h-2zM587 710h2v1h-2zM299 554h4v1h-4zM717 325h3v2h-3zM148 447h3v3h-3zM162 504h2v2h-2zM156 212h4v2h-4zM255 703h3v1h-3zM604 644h3v2h-3zM367 570h3v3h-3zM36 229h3v1h-3zM102 175h2v2h-2zM377 134h2v3h-2zM682 120h4v1h-4zM661 449h3v2h-3zM161 425h4v1h-4zM92 107h2v2h-2zM687 192h4v2h-4zM242 158h4v3h-4zM99 545h3v1h-3zM74 537h3v2h-3zM435 660h2v1h-2zM600 714h2v3h-2zM416 475h2v3h-2zM172 243h4v2h-4zM791 239h4v2h-4zM256 242h4v2h-4zM161 241h4v2h-4zM435 239h4v2h-4zM268 242h4v2h-4zM303 243h4v2h-4zM596 238h4v2h-4zM149 240h4v2h-4zM174 243h4v2h-4zM142 242h4v2h-4zM242 242h4v2h-4zM755 238h4v2h-4zM257 240h4v2h-4zM699 243h4v2h-4zM201 239h4v2h-4zM100 237h4v2h-4zM32 238h4v2h-4zM259 239h4v2h-4zM174 240h4v2h-4zM59 239h4v2h-4zM236 239h4v2h-4zM564 239h4v2h-4zM325 243h4v2h-4zM130 238h4v2h-4zM343 243h4v2h-4zM71 238h4v2h-4zM331 240h4v2h-4z" fill="#05055c"/><path d="M470 309h2v2h-2zM100 661h3v3h-3zM417 51h2v1h-2zM445 692h3v2h-3zM303 306h4v1h-4zM339 673h3v2h-3zM104 734h3v2h-3zM317 382h2v2h-2zM497 536h2v2h-2zM239 48h4v2h-4zM642 562h3v1h-3zM736 89h2v2h-2zM340 579h4v2h-4zM69 558h4v2h-4zM479 195h3v3h-3zM728 630h2v2h-2zM716 388h2v3h-2zM790 664h2v1h-2zM447 538h3v3h-3zM447 246h2v3h-2zM753 150h4v2h-4zM422 5h3v2h-3zM231 433h2v2h-2zM600 527h4v3h-4zM457 546h2v1h-2zM531 671h3v3h-3zM692 222h2v2h-2zM208 366h2v2h-2zM646 656h3v3h-3zM808 402h3v1h-3zM333 562h2v2h-2zM775 668h3v1h-3zM81 388h3v2h-3zM550 299h2v1h-2zM289 435h4v2h-4zM343 245h2v2h-2zM181 3h2v3h-2zM246 157h4v2h-4zM786 605h3v1h-3zM271 468h2v2h-2zM798 632h3v2h-3zM201 224h3v1h-3zM475 348h3v2h-3zM269 300h3v1h-3zM342 45h2v3h-2zM112 502h4v2h-4zM221 574h2v2h-2zM442 571h4v1h-4zM15 436h3v2h-3zM587 112h4v1h-4zM157 654h2v2h-2zM432 30h4v1h-4zM735 625h3v2h-3zM426 261h3v2h-3zM488 256h2v2h-2zM476 411h2v1h-2zM495 360h3v3h-3zM596 511h3v2h-3zM82 667h3v3h-3zM257 58h3v3h-3zM753 539h3v2h-3zM350 347h3v2h-3zM242 350h3v1h-3zM343 728h4v1h-4zM354 722h3v3h-3zM176 653h2v3h-2zM303 325h4v3h-4zM624 480h4v3h-4zM657 108h3v2h-3zM420 351h4v2h-4zM207 589h4v2h-4zM456 713h3v2h-3zM637 711h2v2h-2zM426 116h2v3h-2zM213 294h3v3h-3zM669 721h3v1h-3zM780 185h3v2h-3zM620 258h2v2h-2zM375 91h2v3h-2zM192 751h4v1h-4zM622 711h4v2h-4zM11 594h3v2h-3zM716 436h2v1h-2zM709 306h4v1h-4zM579 464h4v2h-4zM582 422h2v1h-2zM310 49h3v3h-3zM129 178h4v2h-4zM318 184h3v1h-3zM578 535h2v2h-2zM481 411h3v1h-3zM769 46h3v2h-3zM437 29h4v2h-4zM534 693h2v3h-2zM330 752h2v3h-2zM783 218h2v2h-2zM410 648h4v2h-4zM569 337h3v2h-3zM588 2h4v1h-4zM466 188h3v1h-3zM597 83h4v1h-4zM141 349h2v2h-2zM436 719h4v2h-4zM361 533h3v2h-3zM300 526h4v1h-4zM398 282h2v2h-2zM584 631h2v2h-2zM455 110h3v2h-3zM88 332h3v2h-3zM591 127h2v2h-2zM236 273h3v2h-3zM39 633h4v3h-4zM548 416h4v2h-4zM138 161h2v1h-2zM397 465h3v2h-3zM290 614h2v2h-2zM560 336h3v2h-3zM387 431h2v1h-2zM732 359h3v2h-3zM367 346h2v3h-2zM161 491h4v2h-4zM441 524h2v2h-2zM333 643h2v2h-2zM371 736h3v3h-3zM763 431h2v2h-2zM134 464h2v2h-2zM441 66h2v2h-2zM112 552h2v1h-2zM81 744h3v3h-3zM432 48h2v3h-2zM604 522h3v2h-3zM316 679h2v1h-2zM545 300h2v3h-2zM78 204h3v3h-3zM729 99h3v3h-3zM67 656h3v3h-3zM456 21h2v2h-2zM338 655h2v1h-2zM146 629h2v3h-2zM582 48h4v1h-4zM478 736h3v2h-3zM114 168h4v2h-4zM622 733h2v2h-2zM335 484h3v3h-3zM133 306h4v3h-4zM25 124h2v3h-2zM673 680h3v2h-3zM591 169h2v3h-2zM525 353h3v2h-3zM778 597h3v1h-3zM135 762h2v2h-2zM658 353h2v2h-2zM303 606h3v1h-3zM569 537h4v2h-4zM135 129h3v1h-3zM319 399h2v1h-2zM751 205h2v2h-2zM128 108h4v3h-4zM126 773h4v2h-4zM660 455h4v2h-4zM678 303h3v2h-3zM709 211h3v1h-3zM379 265h3v2h-3zM380 381h3v1h-3zM109 522h2v3h-2zM537 682h3v3h-3zM526 643h3v2h-3zM170 64h3v2h-3zM781 511h4v3h-4zM434 321h2v3h-2zM373 570h4v1h-4zM572 109h4v3h-4zM486 574h3v3h-3zM77 108h4v2h-4zM511 76h3v2h-3zM121 113h2v1h-2zM23 469h2v2h-2zM341 270h2v2h-2zM100 369h4v1h-4zM428 209h2v2h-2zM91 103h3v1h-3zM228 262h3v1h-3zM42 116h3v2h-3zM506 300h2v2h-2zM5 572h2v2h-2zM369 183h2v1h-2zM345 168h3v3h-3zM808 764h4v2h-4zM33 382h2v1h-2zM416 689h4v1h-4zM319 384h3v2h-3zM624 610h4v2h-4zM91 626h3v2h-3zM684 186h2v2h-2zM192 67h3v1h-3zM780 700h3v3h-3zM168 398h2v1h-2zM46 710h2v1h-2zM60 283h2v2h-2zM635 389h2v2h-2zM22 347h3v2h-3zM465 332h4v2h-4zM220 594h3v2h-3zM459 621h3v2h-3zM278 677h2v2h-2zM331 167h3v2h-3zM444 460h3v3h-3zM762 635h3v2h-3zM524 460h3v3h-3zM682 699h4v2h-4zM499 277h2v2h-2zM631 746h2v2h-2zM544 117h2v1h-2zM223 504h2v2h-2zM744 232h4v2h-4zM218 617h3v1h-3zM686 531h3v2h-3zM569 43h2v3h-2zM482 399h2v2h-2zM786 456h4v3h-4z" fill="#08087a"/></g>
<g filter="url(#bl3)"><path d="M503 28h2v2h-2zM509 168h2v2h-2z" fill="#04043a"/><path d="M505 28h2v2h-2zM492 248h2v2h-2z" fill="#050549"/><path d="M503 30h2v2h-2z" fill="#040440"/><path d="M505 30h2v2h-2zM509 192h2v2h-2z" fill="#050548"/><path d="M503 32h2v2h-2z" fill="#06064c"/><path d="M505 32h2v2h-2zM507 128h2v2h-2zM507 132h2v2h-2zM505 152h2v2h-2zM505 158h2v2h-2zM507 158h2v2h-2z" fill="#30118c"/><path d="M505 34h2v2h-2zM505 46h2v2h-2zM505 164h2v2h-2zM503 232h2v2h-2z" fill="#33128f"/><path d="M503 36h2v2h-2z" fill="#04043d"/><path d="M505 36h2v2h-2zM509 194h2v2h-2zM88 260h2v2h-2zM88 264h2v2h-2z" fill="#050543"/><path d="M505 38h2v2h-2zM505 106h2v2h-2z" fill="#050541"/><path d="M503 40h2v2h-2z" fill="#04043f"/><path d="M505 40h2v2h-2zM509 204h2v2h-2zM470 243h2v2h-2z" fill="#1a0d7b"/><path d="M503 42h2v2h-2z" fill="#030337"/><path d="M505 44h2v2h-2z" fill="#060650"/><path d="M505 48h2v2h-2zM507 172h2v2h-2zM88 220h2v2h-2zM88 248h2v2h-2zM503 238h2v2h-2z" fill="#140c76"/><path d="M505 50h2v2h-2zM505 148h2v2h-2zM505 190h2v2h-2zM90 210h2v2h-2zM88 250h2v2h-2zM494 262h2v2h-2zM503 234h2v2h-2z" fill="#130b75"/><path d="M505 52h2v2h-2zM505 216h2v2h-2zM90 248h2v2h-2zM517 272h2v2h-2z" fill="#341290"/><path d="M505 54h2v2h-2zM507 270h2v2h-2z" fill="#120b74"/><path d="M505 56h2v2h-2zM507 102h2v2h-2zM505 138h2v2h-2zM505 146h2v2h-2z" fill="#2b1088"/><path d="M505 58h2v2h-2zM505 84h2v2h-2z" fill="#421493"/><path d="M505 60h2v2h-2zM470 241h2v2h-2zM503 244h2v2h-2z" fill="#050542"/><path d="M505 62h2v2h-2zM505 230h2v2h-2z" fill="#200e7f"/><path d="M505 64h2v2h-2zM505 96h2v2h-2zM507 180h2v2h-2zM470 257h2v2h-2z" fill="#3b1395"/><path d="M505 66h2v2h-2zM505 88h2v2h-2zM507 88h2v2h-2zM507 94h2v2h-2zM507 146h2v2h-2z" fill="#250f84"/><path d="M507 66h2v2h-2zM505 74h2v2h-2zM505 86h2v2h-2zM505 128h2v2h-2z" fill="#040438"/><path d="M505 68h2v2h-2zM507 140h2v2h-2z" fill="#3c1495"/><path d="M505 70h2v2h-2zM505 206h2v2h-2z" fill="#210e80"/><path d="M505 72h2v2h-2z" fill="#2e118a"/><path d="M507 72h2v2h-2zM507 86h2v2h-2zM507 120h2v2h-2z" fill="#06064e"/><path d="M507 74h2v2h-2zM509 226h2v2h-2z" fill="#030335"/><path d="M505 76h2v2h-2zM505 78h2v2h-2zM90 228h2v2h-2zM519 248h2v2h-2z" fill="#471491"/><path d="M507 76h2v2h-2zM509 228h2v2h-2zM494 244h2v2h-2z" fill="#070755"/><path d="M507 78h2v2h-2zM88 192h2v2h-2z" fill="#070756"/><path d="M505 80h2v2h-2zM505 102h2v2h-2zM505 166h2v2h-2z" fill="#371392"/><path d="M505 82h2v2h-2zM505 122h2v2h-2zM90 216h2v2h-2zM90 252h2v2h-2z" fill="#281086"/><path d="M507 82h2v2h-2zM505 156h2v2h-2zM505 196h2v2h-2zM509 224h2v2h-2zM507 232h2v2h-2z" fill="#230f82"/><path d="M507 84h2v2h-2zM505 194h2v2h-2zM505 212h2v2h-2zM88 256h2v2h-2z" fill="#0a0a6e"/><path d="M505 90h2v2h-2z" fill="#391393"/><path d="M507 90h2v2h-2zM505 174h2v2h-2zM88 216h2v2h-2z" fill="#0e0a71"/><path d="M505 92h2v2h-2zM507 178h2v2h-2z" fill="#3d1495"/><path d="M507 92h2v2h-2zM505 100h2v2h-2z" fill="#250f83"/><path d="M505 94h2v2h-2zM507 122h2v2h-2zM509 222h2v2h-2zM90 184h2v2h-2zM90 206h2v2h-2zM494 248h2v2h-2z" fill="#1d0d7d"/><path d="M507 96h2v2h-2zM507 136h2v2h-2z" fill="#09096a"/><path d="M505 98h2v2h-2zM507 138h2v2h-2z" fill="#381393"/><path d="M507 98h2v2h-2zM468 251h2v2h-2z" fill="#190d7a"/><path d="M507 100h2v2h-2zM505 220h2v2h-2z" fill="#0c0a70"/><path d="M505 104h2v2h-2z" fill="#491490"/><path d="M507 104h2v2h-2zM507 116h2v2h-2zM509 206h2v2h-2zM88 226h2v2h-2z" fill="#1c0d7c"/><path d="M507 106h2v2h-2zM507 194h2v2h-2z" fill="#0f0b72"/><path d="M505 108h2v2h-2zM505 162h2v2h-2z" fill="#401494"/><path d="M507 108h2v2h-2zM505 182h2v2h-2zM90 218h2v2h-2zM517 240h2v2h-2z" fill="#180c79"/><path d="M505 110h2v2h-2zM505 116h2v2h-2zM88 218h2v2h-2z" fill="#170c78"/><path d="M507 110h2v2h-2zM509 214h2v2h-2zM505 226h2v2h-2z" fill="#150c77"/><path d="M505 112h2v2h-2z" fill="#170c79"/><path d="M507 112h2v2h-2zM88 230h2v2h-2z" fill="#3a1394"/><path d="M505 114h2v2h-2z" fill="#481491"/><path d="M507 114h2v2h-2zM505 218h2v2h-2z" fill="#0c0a6f"/><path d="M505 118h2v2h-2z" fill="#441492"/><path d="M507 118h2v2h-2zM507 130h2v2h-2zM507 176h2v2h-2zM90 212h2v2h-2z" fill="#361291"/><path d="M505 120h2v2h-2zM505 140h2v2h-2zM505 210h2v2h-2zM90 250h2v2h-2z" fill="#260f84"/><path d="M505 124h2v2h-2zM509 218h2v2h-2zM505 224h2v2h-2z" fill="#2f118b"/><path d="M507 124h2v2h-2zM507 166h2v2h-2z" fill="#3a1395"/><path d="M505 126h2v2h-2z" fill="#481490"/><path d="M507 126h2v2h-2zM505 130h2v2h-2z" fill="#1b0d7b"/><path d="M505 132h2v2h-2zM505 136h2v2h-2z" fill="#2b1089"/><path d="M505 134h2v2h-2zM90 226h2v2h-2zM494 258h2v2h-2zM503 236h2v2h-2z" fill="#34128f"/><path d="M507 134h2v2h-2zM505 150h2v2h-2zM505 198h2v2h-2z" fill="#220e81"/><path d="M505 142h2v2h-2zM90 262h2v2h-2z" fill="#1e0e7e"/><path d="M507 142h2v2h-2z" fill="#351290"/><path d="M505 144h2v2h-2zM505 170h2v2h-2zM90 220h2v2h-2z" fill="#270f85"/><path d="M507 144h2v2h-2zM509 228h2v2h-2z" fill="#53148c"/><path d="M507 148h2v2h-2zM509 220h2v2h-2zM507 268h2v2h-2z" fill="#391394"/><path d="M507 150h2v2h-2zM505 172h2v2h-2zM494 260h2v2h-2z" fill="#2c1089"/><path d="M507 152h2v2h-2zM507 228h2v2h-2z" fill="#58148a"/><path d="M505 154h2v2h-2z" fill="#160c78"/><path d="M507 154h2v2h-2zM90 246h2v2h-2z" fill="#51148d"/><path d="M507 156h2v2h-2zM494 254h2v2h-2z" fill="#57148a"/><path d="M505 160h2v2h-2z" fill="#110b73"/><path d="M507 160h2v2h-2z" fill="#351291"/><path d="M507 162h2v2h-2zM507 168h2v2h-2z" fill="#621486"/><path d="M509 162h2v2h-2zM509 170h2v2h-2z" fill="#04043e"/><path d="M507 164h2v2h-2z" fill="#611486"/><path d="M505 168h2v2h-2zM88 246h2v2h-2zM521 252h2v2h-2z" fill="#31118d"/><path d="M507 170h2v2h-2z" fill="#681484"/><path d="M507 174h2v2h-2z" fill="#090965"/><path d="M505 176h2v2h-2zM505 232h2v2h-2zM88 194h2v2h-2z" fill="#0b0a6f"/><path d="M509 178h2v2h-2z" fill="#04043c"/><path d="M507 182h2v2h-2zM505 192h2v2h-2zM88 254h2v2h-2z" fill="#070759"/><path d="M505 184h2v2h-2zM88 202h2v2h-2z" fill="#070757"/><path d="M507 184h2v2h-2zM470 255h2v2h-2zM494 252h2v2h-2z" fill="#55148b"/><path d="M505 186h2v2h-2zM505 200h2v2h-2z" fill="#090967"/><path d="M507 186h2v2h-2z" fill="#59148a"/><path d="M505 188h2v2h-2zM505 234h2v2h-2z" fill="#08085d"/><path d="M507 188h2v2h-2z" fill="#6f1481"/><path d="M507 190h2v2h-2z" fill="#431493"/><path d="M507 192h2v2h-2z" fill="#461491"/><path d="M507 196h2v2h-2zM515 236h2v2h-2z" fill="#5d1488"/><path d="M509 196h2v2h-2zM88 188h2v2h-2zM92 244h2v2h-2zM88 258h2v2h-2z" fill="#030332"/><path d="M507 198h2v2h-2z" fill="#952167"/><path d="M509 198h2v2h-2z" fill="#030334"/><path d="M507 200h2v2h-2z" fill="#661484"/><path d="M509 200h2v2h-2zM503 230h2v2h-2z" fill="#06064f"/><path d="M505 202h2v2h-2zM90 256h2v2h-2z" fill="#100b73"/><path d="M507 202h2v2h-2z" fill="#901f6a"/><path d="M509 202h2v2h-2zM88 204h2v2h-2zM88 210h2v2h-2zM492 254h2v2h-2z" fill="#080862"/><path d="M507 204h2v2h-2z" fill="#ae2d55"/><path d="M507 206h2v2h-2zM90 232h2v2h-2zM470 247h2v2h-2zM515 272h2v2h-2z" fill="#9e2461"/><path d="M507 208h2v2h-2z" fill="#8d1e6d"/><path d="M507 210h2v2h-2z" fill="#ab2a58"/><path d="M509 210h2v2h-2z" fill="#070758"/><path d="M507 212h2v2h-2z" fill="#a1255f"/><path d="M509 212h2v2h-2z" fill="#090968"/><path d="M505 214h2v2h-2zM90 204h2v2h-2z" fill="#2e118b"/><path d="M507 214h2v2h-2z" fill="#d55b2e"/><path d="M507 216h2v2h-2z" fill="#cf5334"/><path d="M509 216h2v2h-2z" fill="#291087"/><path d="M507 218h2v2h-2z" fill="#d85d2b"/><path d="M507 220h2v2h-2z" fill="#ea781a"/><path d="M505 222h2v2h-2zM507 226h2v2h-2z" fill="#120b75"/><path d="M507 222h2v2h-2z" fill="#c94d3a"/><path d="M507 224h2v2h-2z" fill="#52148d"/><path d="M507 226h2v2h-2z" fill="#cd5136"/><path d="M505 228h2v2h-2zM88 208h2v2h-2z" fill="#0d0a70"/><path d="M507 230h2v2h-2z" fill="#e36b20"/><path d="M509 230h2v2h-2z" fill="#601487"/><path d="M507 232h2v2h-2zM513 240h2v2h-2z" fill="#e9761b"/><path d="M509 232h2v2h-2z" fill="#56148b"/><path d="M505 226h2v2h-2zM519 246h2v2h-2z" fill="#060652"/><path d="M505 228h2v2h-2z" fill="#451492"/><path d="M507 228h2v2h-2z" fill="#1b0d7c"/><path d="M505 230h2v2h-2z" fill="#5b1489"/><path d="M507 230h2v2h-2z" fill="#79177a"/><path d="M509 230h2v2h-2zM503 246h2v2h-2z" fill="#030336"/><path d="M505 232h2v2h-2z" fill="#3e1494"/><path d="M509 232h2v2h-2z" fill="#050545"/><path d="M90 186h2v2h-2zM90 214h2v2h-2zM503 242h2v2h-2z" fill="#1f0e7f"/><path d="M90 190h2v2h-2zM88 206h2v2h-2z" fill="#080861"/><path d="M88 196h2v2h-2zM494 246h2v2h-2z" fill="#07075a"/><path d="M90 198h2v2h-2zM90 258h2v2h-2z" fill="#09096b"/><path d="M90 202h2v2h-2zM90 208h2v2h-2z" fill="#100b72"/><path d="M88 212h2v2h-2z" fill="#080860"/><path d="M88 214h2v2h-2z" fill="#08085e"/><path d="M88 222h2v2h-2zM503 248h2v2h-2z" fill="#070754"/><path d="M90 222h2v2h-2z" fill="#411493"/><path d="M88 224h2v2h-2z" fill="#110b74"/><path d="M90 224h2v2h-2z" fill="#2a1087"/><path d="M88 228h2v2h-2z" fill="#2d118a"/><path d="M90 230h2v2h-2z" fill="#661485"/><path d="M88 232h2v2h-2z" fill="#4d148e"/><path d="M88 234h2v2h-2z" fill="#6a1483"/><path d="M90 234h2v2h-2z" fill="#da6029"/><path d="M88 236h2v2h-2z" fill="#992264"/><path d="M90 236h2v2h-2zM505 248h2v2h-2z" fill="#f49112"/><path d="M92 236h2v2h-2zM470 261h2v2h-2z" fill="#030333"/><path d="M88 238h2v2h-2z" fill="#bc3d47"/><path d="M90 238h2v2h-2zM511 236h2v2h-2zM505 258h2v2h-2zM515 268h2v2h-2z" fill="#ec7c19"/><path d="M88 240h2v2h-2z" fill="#7c1878"/><path d="M90 240h2v2h-2z" fill="#f69411"/><path d="M88 242h2v2h-2z" fill="#7b1879"/><path d="M90 242h2v2h-2z" fill="#c4463f"/><path d="M88 244h2v2h-2z" fill="#611487"/><path d="M90 244h2v2h-2z" fill="#841b73"/><path d="M88 252h2v2h-2z" fill="#060651"/><path d="M90 254h2v2h-2zM470 259h2v2h-2z" fill="#09096c"/><path d="M90 260h2v2h-2zM505 264h2v2h-2z" fill="#240f82"/><path d="M90 264h2v2h-2z" fill="#07075b"/><path d="M470 245h2v2h-2z" fill="#3f1494"/><path d="M468 249h2v2h-2zM503 240h2v2h-2z" fill="#090966"/><path d="M470 249h2v2h-2z" fill="#bb3c48"/><path d="M470 251h2v2h-2z" fill="#ba3a49"/><path d="M468 253h2v2h-2z" fill="#09096d"/><path d="M470 253h2v2h-2z" fill="#b33250"/><path d="M494 250h2v2h-2z" fill="#5c1488"/><path d="M492 252h2v2h-2z" fill="#06064d"/><path d="M492 256h2v2h-2z" fill="#08085c"/><path d="M494 256h2v2h-2z" fill="#73157e"/><path d="M492 258h2v2h-2z" fill="#06064a"/><path d="M494 264h2v2h-2z" fill="#070753"/><path d="M505 232h2v2h-2z" fill="#e7711c"/><path d="M507 232h2v2h-2z" fill="#c04243"/><path d="M509 232h2v2h-2zM507 266h2v2h-2z" fill="#a2255e"/><path d="M511 232h2v2h-2z" fill="#c84b3b"/><path d="M513 232h2v2h-2z" fill="#76167c"/><path d="M505 234h2v2h-2z" fill="#e16822"/><path d="M507 234h2v2h-2zM505 246h2v2h-2z" fill="#ec7e18"/><path d="M509 234h2v2h-2z" fill="#e9751b"/><path d="M511 234h2v2h-2z" fill="#e06723"/><path d="M513 234h2v2h-2z" fill="#7e1976"/><path d="M505 236h2v2h-2zM509 238h2v2h-2z" fill="#f99d0e"/><path d="M507 236h2v2h-2z" fill="#f89a0f"/><path d="M509 236h2v2h-2z" fill="#ee8117"/><path d="M513 236h2v2h-2z" fill="#ea791a"/><path d="M505 238h2v2h-2zM515 240h2v2h-2z" fill="#f7980f"/><path d="M507 238h2v2h-2zM511 238h2v2h-2zM505 244h2v2h-2zM511 246h2v2h-2zM505 250h2v2h-2zM507 260h2v2h-2zM511 260h2v2h-2zM517 260h2v2h-2zM515 262h2v2h-2zM511 270h2v2h-2z" fill="#4b1490"/><path d="M513 238h2v2h-2z" fill="#fa9f0d"/><path d="M515 238h2v2h-2z" fill="#b7374c"/><path d="M505 240h2v2h-2z" fill="#e66f1d"/><path d="M507 240h2v2h-2zM519 260h2v2h-2zM517 264h2v2h-2z" fill="#fea80a"/><path d="M509 240h2v2h-2z" fill="#ee8217"/><path d="M511 240h2v2h-2z" fill="#f28c13"/><path d="M505 242h2v2h-2z" fill="#f69510"/><path d="M507 242h2v2h-2zM517 266h2v2h-2z" fill="#f69610"/><path d="M509 242h2v2h-2z" fill="#ffcc10"/><path d="M511 242h2v2h-2z" fill="#ffe953"/><path d="M513 242h2v2h-2z" fill="#ffb20b"/><path d="M515 242h2v2h-2z" fill="#ffe21d"/><path d="M517 242h2v2h-2z" fill="#7a1879"/><path d="M507 244h2v2h-2z" fill="#ffe42c"/><path d="M509 244h2v2h-2z" fill="#fa9e0d"/><path d="M511 244h2v2h-2z" fill="#ffab0a"/><path d="M513 244h2v2h-2zM517 262h2v2h-2z" fill="#ffe537"/><path d="M515 244h2v2h-2z" fill="#fff29a"/><path d="M517 244h2v2h-2z" fill="#b6364d"/><path d="M507 246h2v2h-2z" fill="#ffb80c"/><path d="M509 246h2v2h-2z" fill="#fff9cc"/><path d="M513 246h2v2h-2z" fill="#fff7bf"/><path d="M515 246h2v2h-2z" fill="#ffd111"/><path d="M517 246h2v2h-2z" fill="#ffbf0d"/><path d="M507 248h2v2h-2z" fill="#ffe746"/><path d="M509 248h2v2h-2z" fill="#ffe956"/><path d="M511 248h2v2h-2zM515 248h2v2h-2zM511 250h2v2h-2zM513 250h2v2h-2zM515 250h2v2h-2zM517 250h2v2h-2zM509 252h2v2h-2zM511 252h2v2h-2zM513 252h2v2h-2zM515 252h2v2h-2zM511 254h2v2h-2zM513 254h2v2h-2zM515 254h2v2h-2zM511 256h2v2h-2zM513 256h2v2h-2zM515 256h2v2h-2zM511 258h2v2h-2zM515 258h2v2h-2zM513 260h2v2h-2z" fill="#fffffa"/><path d="M513 248h2v2h-2z" fill="#fffbe2"/><path d="M517 248h2v2h-2z" fill="#ffee7d"/><path d="M507 250h2v2h-2z" fill="#fff3a3"/><path d="M509 250h2v2h-2z" fill="#ffe63c"/><path d="M519 250h2v2h-2zM505 256h2v2h-2z" fill="#fca40b"/><path d="M505 252h2v2h-2z" fill="#ffb90c"/><path d="M507 252h2v2h-2z" fill="#fff9cd"/><path d="M517 252h2v2h-2z" fill="#ffe640"/><path d="M519 252h2v2h-2zM513 262h2v2h-2z" fill="#ffde13"/><path d="M505 254h2v2h-2z" fill="#d65b2d"/><path d="M507 254h2v2h-2z" fill="#fff8c7"/><path d="M509 254h2v2h-2z" fill="#fff18e"/><path d="M517 254h2v2h-2z" fill="#fff6b7"/><path d="M519 254h2v2h-2z" fill="#ffe220"/><path d="M521 254h2v2h-2z" fill="#6f1480"/><path d="M507 256h2v2h-2z" fill="#ffdc13"/><path d="M509 256h2v2h-2z" fill="#fff190"/><path d="M517 256h2v2h-2z" fill="#fffbdc"/><path d="M519 256h2v2h-2z" fill="#ffd311"/><path d="M521 256h2v2h-2z" fill="#ce5235"/><path d="M507 258h2v2h-2z" fill="#ffbb0d"/><path d="M509 258h2v2h-2z" fill="#ffe325"/><path d="M513 258h2v2h-2z" fill="#fff8c8"/><path d="M517 258h2v2h-2z" fill="#fff29c"/><path d="M519 258h2v2h-2z" fill="#ffba0d"/><path d="M521 258h2v2h-2z" fill="#f28b14"/><path d="M505 260h2v2h-2z" fill="#dd6326"/><path d="M509 260h2v2h-2z" fill="#ffe747"/><path d="M515 260h2v2h-2z" fill="#ffcf10"/><path d="M521 260h2v2h-2z" fill="#4e148e"/><path d="M505 262h2v2h-2z" fill="#6e1481"/><path d="M507 262h2v2h-2z" fill="#ffd411"/><path d="M509 262h2v2h-2zM507 264h2v2h-2z" fill="#ffc70f"/><path d="M511 262h2v2h-2z" fill="#ffac0a"/><path d="M519 262h2v2h-2z" fill="#ffd211"/><path d="M509 264h2v2h-2z" fill="#ffc80f"/><path d="M511 264h2v2h-2z" fill="#ffc00e"/><path d="M513 264h2v2h-2z" fill="#ffc20e"/><path d="M515 264h2v2h-2z" fill="#f38e13"/><path d="M519 264h2v2h-2z" fill="#c04143"/><path d="M509 266h2v2h-2z" fill="#f8990f"/><path d="M511 266h2v2h-2z" fill="#ffc90f"/><path d="M513 266h2v2h-2z" fill="#f38d13"/><path d="M515 266h2v2h-2z" fill="#f99b0e"/><path d="M519 266h2v2h-2z" fill="#3e1495"/><path d="M509 268h2v2h-2z" fill="#eb7b19"/><path d="M511 268h2v2h-2z" fill="#c6493d"/><path d="M513 268h2v2h-2z" fill="#ef8416"/><path d="M517 268h2v2h-2z" fill="#ffad0a"/><path d="M519 268h2v2h-2z" fill="#080864"/><path d="M509 270h2v2h-2z" fill="#d4592f"/><path d="M513 270h2v2h-2z" fill="#d15632"/><path d="M515 270h2v2h-2z" fill="#fda60b"/><path d="M517 270h2v2h-2z" fill="#72157e"/><path d="M507 272h2v2h-2z" fill="#050544"/><path d="M509 272h2v2h-2z" fill="#b13152"/><path d="M511 272h2v2h-2z" fill="#c74a3c"/><path d="M513 272h2v2h-2z" fill="#e46c1f"/></g>
<path d="M508 241h1v1h-1zM506 243h1v1h-1zM517 258h1v1h-1zM507 265h1v1h-1zM511 260h1v1h-1zM515 264h1v1h-1zM512 243h1v1h-1zM508 250h1v1h-1zM510 244h1v1h-1zM514 255h1v1h-1z" fill="#000" opacity="0.6"/>
<rect x="3" y="3" width="311" height="45" fill="#fff"/>
<g font-family="Liberation Mono" font-size="11.67" fill="#000">
<text x="4" y="15">Screen Capture Time: 2025-11-26 12:43:22 UTC</text>
<text x="4" y="29">143048017 Hz</text>
<text x="4" y="43">Config = V8</text>
</g>
<rect x="5" y="53" width="99" height="15" fill="url(#cb)"/>
<rect x="5" y="68" width="99" height="24" fill="#fff"/>
<rect x="9" y="68" width="1" height="5" fill="#000"/><rect x="13" y="68" width="1" height="5" fill="#000"/><rect x="18" y="68" width="1" height="5" fill="#000"/><rect x="22" y="68" width="1" height="5" fill="#000"/><rect x="26" y="68" width="1" height="8" fill="#000"/><rect x="31" y="68" width="1" height="5" fill="#000"/><rect x="35" y="68" width="1" height="5" fill="#000"/><rect x="39" y="68" width="1" height="5" fill="#000"/><rect x="44" y="68" width="1" height="5" fill="#000"/><rect x="48" y="68" width="1" height="11" fill="#000"/><rect x="52" y="68" width="1" height="5" fill="#000"/><rect x="57" y="68" width="1" height="5" fill="#000"/><rect x="61" y="68" width="1" height="5" fill="#000"/><rect x="65" y="68" width="1" height="5" fill="#000"/><rect x="70" y="68" width="1" height="8" fill="#000"/><rect x="74" y="68" width="1" height="5" fill="#000"/><rect x="78" y="68" width="1" height="5" fill="#000"/><rect x="83" y="68" width="1" height="5" fill="#000"/><rect x="87" y="68" width="1" height="5" fill="#000"/><rect x="92" y="68" width="1" height="11" fill="#000"/><rect x="96" y="68" width="1" height="5" fill="#000"/><rect x="100" y="68" width="1" height="5" fill="#000"/>
<g font-family="Liberation Sans" font-size="11.4" fill="#000"><text x="4" y="90" letter-spacing="-0.35">-80 dB</text><text x="39.3" y="90">-60</text><text x="83.6" y="90">-40</text></g>
<g font-family="Liberation Sans" font-size="10.9" fill="#fff"><rect x="36" y="760" width="1" height="20" fill="#fff"/><text transform="translate(33,778) rotate(-90)">2025-11-26 12:42:10</text><rect x="150" y="760" width="1" height="20" fill="#fff"/><text transform="translate(147,778) rotate(-90)">2025-11-26 12:42:20</text><rect x="265" y="760" width="1" height="20" fill="#fff"/><text transform="translate(262,778) rotate(-90)">2025-11-26 12:42:30</text><rect x="379" y="760" width="1" height="20" fill="#fff"/><text transform="translate(376,778) rotate(-90)">2025-11-26 12:42:40</text><rect x="489" y="760" width="1" height="20" fill="#fff"/><text transform="translate(486,778) rotate(-90)">2025-11-26 12:42:50</text><rect x="603" y="760" width="1" height="20" fill="#fff"/><text transform="translate(600,778) rotate(-90)">2025-11-26 12:43:00</text><rect x="718" y="760" width="1" height="20" fill="#fff"/><text transform="translate(715,778) rotate(-90)">2025-11-26 12:43:10</text></g>
<rect x="818" y="2" width="8" height="1" fill="#000"/><rect x="818" y="10" width="8" height="1" fill="#000"/><rect x="818" y="18" width="11" height="1" fill="#000"/><rect x="818" y="26" width="8" height="1" fill="#000"/><rect x="818" y="34" width="8" height="1" fill="#000"/><rect x="818" y="41" width="8" height="1" fill="#000"/><rect x="818" y="49" width="8" height="1" fill="#000"/><rect x="818" y="57" width="8" height="1" fill="#000"/><rect x="818" y="65" width="8" height="1" fill="#000"/><rect x="818" y="73" width="8" height="1" fill="#000"/><rect x="818" y="80" width="8" height="1" fill="#000"/><rect x="818" y="88" width="8" height="1" fill="#000"/><rect x="818" y="96" width="26" height="1" fill="#000"/><rect x="818" y="104" width="8" height="1" fill="#000"/><rect x="818" y="112" width="8" height="1" fill="#000"/><rect x="818" y="119" width="8" height="1" fill="#000"/><rect x="818" y="127" width="8" height="1" fill="#000"/><rect x="818" y="135" width="8" height="1" fill="#000"/><rect x="818" y="143" width="8" height="1" fill="#000"/><rect x="818" y="151" width="8" height="1" fill="#000"/><rect x="818" y="158" width="8" height="1" fill="#000"/><rect x="818" y="166" width="8" height="1" fill="#000"/><rect x="818" y="174" width="11" height="1" fill="#000"/><rect x="818" y="182" width="8" height="1" fill="#000"/><rect x="818" y="190" width="8" height="1" fill="#000"/><rect x="818" y="197" width="8" height="1" fill="#000"/><rect x="818" y="205" width="8" height="1" fill="#000"/><rect x="818" y="213" width="8" height="1" fill="#000"/><rect x="818" y="221" width="8" height="1" fill="#000"/><rect x="818" y="229" width="8" height="1" fill="#000"/><rect x="818" y="236" width="8" height="1" fill="#000"/><rect x="818" y="244" width="8" height="1" fill="#000"/><rect x="818" y="252" width="26" height="1" fill="#000"/><rect x="818" y="260" width="8" height="1" fill="#000"/><rect x="818" y="268" width="8" height="1" fill="#000"/><rect x="818" y="275" width="8" height="1" fill="#000"/><rect x="818" y="283" width="8" height="1" fill="#000"/><rect x="818" y="291" width="8" height="1" fill="#000"/><rect x="818" y="299" width="8" height="1" fill="#000"/><rect x="818" y="307" width="8" height="1" fill="#000"/><rect x="818" y="314" width="8" height="1" fill="#000"/><rect x="818" y="322" width="8" height="1" fill="#000"/><rect x="818" y="330" width="11" height="1" fill="#000"/><rect x="818" y="338" width="8" height="1" fill="#000"/><rect x="818" y="346" width="8" height="1" fill="#000"/><rect x="818" y="354" width="8" height="1" fill="#000"/><rect x="818" y="361" width="8" height="1" fill="#000"/><rect x="818" y="369" width="8" height="1" fill="#000"/><rect x="818" y="377" width="8" height="1" fill="#000"/><rect x="818" y="385" width="8" height="1" fill="#000"/><rect x="818" y="393" width="8" height="1" fill="#000"/><rect x="818" y="400" width="8" height="1" fill="#000"/><rect x="818" y="408" width="26" height="1" fill="#000"/><rect x="818" y="416" width="8" height="1" fill="#000"/><rect x="818" y="424" width="8" height="1" fill="#000"/><rect x="818" y="432" width="8" height="1" fill="#000"/><rect x="818" y="439" width="8" height="1" fill="#000"/><rect x="818" y="447" width="8" height="1" fill="#000"/><rect x="818" y="455" width="8" height="1" fill="#000"/><rect x="818" y="463" width="8" height="1" fill="#000"/><rect x="818" y="471" width="8" height="1" fill="#000"/><rect x="818" y="478" width="8" height="1" fill="#000"/><rect x="818" y="486" width="11" height="1" fill="#000"/><rect x="818" y="494" width="8" height="1" fill="#000"/><rect x="818" y="502" width="8" height="1" fill="#000"/><rect x="818" y="510" width="8" height="1" fill="#000"/><rect x="818" y="517" width="8" height="1" fill="#000"/><rect x="818" y="525" width="8" height="1" fill="#000"/><rect x="818" y="533" width="8" height="1" fill="#000"/><rect x="818" y="541" width="8" height="1" fill="#000"/><rect x="818" y="549" width="8" height="1" fill="#000"/><rect x="818" y="556" width="8" height="1" fill="#000"/><rect x="818" y="564" width="26" height="1" fill="#000"/><rect x="818" y="572" width="8" height="1" fill="#000"/><rect x="818" y="580" width="8" height="1" fill="#000"/><rect x="818" y="588" width="8" height="1" fill="#000"/><rect x="818" y="595" width="8" height="1" fill="#000"/><rect x="818" y="603" width="8" height="1" fill="#000"/><rect x="818" y="611" width="8" height="1" fill="#000"/><rect x="818" y="619" width="8" height="1" fill="#000"/><rect x="818" y="627" width="8" height="1" fill="#000"/><rect x="818" y="634" width="8" height="1" fill="#000"/><rect x="818" y="642" width="11" height="1" fill="#000"/><rect x="818" y="650" width="8" height="1" fill="#000"/><rect x="818" y="658" width="8" height="1" fill="#000"/><rect x="818" y="666" width="8" height="1" fill="#000"/><rect x="818" y="674" width="8" height="1" fill="#000"/><rect x="818" y="681" width="8" height="1" fill="#000"/><rect x="818" y="689" width="8" height="1" fill="#000"/><rect x="818" y="697" width="8" height="1" fill="#000"/><rect x="818" y="705" width="8" height="1" fill="#000"/><rect x="818" y="713" width="8" height="1" fill="#000"/><rect x="818" y="720" width="26" height="1" fill="#000"/><rect x="818" y="728" width="8" height="1" fill="#000"/><rect x="818" y="736" width="8" height="1" fill="#000"/><rect x="818" y="744" width="8" height="1" fill="#000"/><rect x="818" y="752" width="8" height="1" fill="#000"/><rect x="818" y="759" width="8" height="1" fill="#000"/><rect x="818" y="767" width="8" height="1" fill="#000"/><rect x="818" y="775" width="8" height="1" fill="#000"/>
<polyline points="823,8.5 839.5,16.5 839.5,13 839.5,772.5 822,781.5" fill="none" stroke="#141478" stroke-width="1" shape-rendering="crispEdges"/>
<g font-family="Liberation Mono" font-size="11.7" fill="#444"><text transform="translate(848.5,96.5) rotate(90)" text-anchor="middle">143050400</text><text transform="translate(848.5,252.5) rotate(90)" text-anchor="middle">143050200</text><text transform="translate(848.5,408.5) rotate(90)" text-anchor="middle">143050000</text><text transform="translate(848.5,564.5) rotate(90)" text-anchor="middle">143049800</text><text transform="translate(848.5,720.5) rotate(90)" text-anchor="middle">143049600 Hz</text></g>
<rect x="860" y="1" width="80" height="781" fill="#000"/>
<rect x="860" y="12" width="80" height="765" fill="#505050"/>
<path d="M860 22h13v1h-13zM875 22h7v1h-7zM860 23h14v1h-14zM872 23h7v1h-7zM860 24h13v1h-13zM860 25h13v1h-13zM872 24h3v1h-3zM860 26h9v1h-9zM860 27h7v1h-7zM860 28h6v1h-6zM860 29h5v1h-5zM860 30h8v1h-8zM860 31h12v1h-12zM860 32h12v1h-12zM860 33h8v1h-8zM860 34h15v1h-15zM860 35h14v1h-14zM860 36h15v1h-15zM860 37h13v1h-13zM860 38h11v1h-11zM860 39h13v1h-13zM860 40h12v1h-12zM860 41h14v1h-14zM860 42h11v1h-11zM860 43h14v1h-14zM873 43h5v1h-5zM860 44h5v1h-5zM860 45h4v1h-4zM860 46h3v1h-3zM860 47h5v1h-5zM860 48h14v1h-14zM860 49h13v1h-13zM860 50h13v1h-13zM860 51h16v1h-16zM860 52h17v1h-17zM860 54h10v1h-10zM860 55h10v1h-10zM860 56h5v1h-5zM860 57h5v1h-5zM860 58h8v1h-8zM860 59h7v1h-7zM860 60h6v1h-6zM867 60h3v1h-3zM860 61h9v1h-9zM860 62h12v1h-12zM860 63h9v1h-9zM871 61h5v1h-5zM860 64h16v1h-16zM875 64h4v1h-4zM860 65h16v1h-16zM860 66h14v1h-14zM860 67h12v1h-12zM860 68h11v1h-11zM860 69h10v1h-10zM860 70h9v1h-9zM860 71h9v1h-9zM860 72h9v1h-9zM860 73h9v1h-9zM860 75h8v1h-8zM860 76h10v1h-10zM870 76h3v1h-3zM860 77h6v1h-6zM860 78h9v1h-9zM860 79h9v1h-9zM860 81h12v1h-12zM860 82h14v1h-14zM860 83h12v1h-12zM860 84h12v1h-12zM860 85h14v1h-14zM860 87h10v1h-10zM860 88h11v1h-11zM860 89h9v1h-9zM860 90h11v1h-11zM860 91h10v1h-10zM860 92h8v1h-8zM860 93h8v1h-8zM860 94h3v1h-3zM860 95h7v1h-7zM860 96h3v1h-3zM860 97h3v1h-3zM860 98h9v1h-9zM860 99h7v1h-7zM860 100h11v1h-11zM860 101h7v1h-7zM860 102h7v1h-7zM860 103h6v1h-6zM860 104h8v1h-8zM860 105h8v1h-8zM860 106h9v1h-9zM860 107h7v1h-7zM867 103h7v1h-7zM860 108h11v1h-11zM860 109h7v1h-7zM860 110h6v1h-6zM860 111h7v1h-7zM860 112h11v1h-11zM860 113h13v1h-13zM860 114h3v1h-3zM860 115h3v1h-3zM865 115h3v1h-3zM860 121h8v1h-8zM860 122h9v1h-9zM860 123h11v1h-11zM860 124h10v1h-10zM860 125h11v1h-11zM869 125h10v1h-10zM860 126h15v1h-15zM860 127h11v1h-11zM860 128h6v1h-6zM860 129h5v1h-5zM860 130h14v1h-14zM860 131h17v1h-17zM860 132h17v1h-17zM860 133h16v1h-16zM860 134h9v1h-9zM860 135h13v1h-13zM860 136h10v1h-10zM860 137h12v1h-12zM860 138h12v1h-12zM860 139h13v1h-13zM860 140h14v1h-14zM860 141h11v1h-11zM860 142h11v1h-11zM860 143h9v1h-9zM860 144h10v1h-10zM860 145h11v1h-11zM860 146h7v1h-7zM860 147h7v1h-7zM860 149h6v1h-6zM860 150h7v1h-7zM867 150h4v1h-4zM860 153h8v1h-8zM860 154h7v1h-7zM869 154h5v1h-5zM860 155h8v1h-8zM860 156h8v1h-8zM860 157h11v1h-11zM860 158h9v1h-9zM860 159h11v1h-11zM860 160h11v1h-11zM860 161h9v1h-9zM860 162h9v1h-9zM860 163h10v1h-10zM860 164h9v1h-9zM870 163h10v1h-10zM860 167h12v1h-12zM860 168h12v1h-12zM860 169h8v1h-8zM860 170h9v1h-9zM860 171h11v1h-11zM860 172h11v1h-11zM860 175h10v1h-10zM860 176h9v1h-9zM860 177h8v1h-8zM860 178h12v1h-12zM860 179h13v1h-13zM860 180h14v1h-14zM860 181h16v1h-16zM860 182h10v1h-10zM860 183h8v1h-8zM860 184h6v1h-6zM860 185h8v1h-8zM860 186h8v1h-8zM867 185h7v1h-7zM860 187h16v1h-16zM860 188h17v1h-17zM860 189h13v1h-13zM875 189h8v1h-8zM860 192h12v1h-12zM860 193h11v1h-11zM860 194h14v1h-14zM860 195h15v1h-15zM860 196h6v1h-6zM860 197h3v1h-3zM860 198h14v1h-14zM860 199h13v1h-13zM860 200h15v1h-15zM860 201h17v1h-17zM875 200h5v1h-5zM860 202h16v1h-16zM860 203h13v1h-13zM860 204h13v1h-13zM860 205h16v1h-16zM860 206h17v1h-17zM875 205h5v1h-5zM860 207h13v1h-13zM860 208h10v1h-10zM871 207h10v1h-10zM860 209h8v1h-8zM867 209h6v1h-6zM860 210h9v1h-9zM860 211h8v1h-8zM860 212h10v1h-10zM860 213h6v1h-6zM860 214h11v1h-11zM860 215h10v1h-10zM860 216h8v1h-8zM869 214h8v1h-8zM860 217h14v1h-14zM860 218h13v1h-13zM860 219h12v1h-12zM874 218h9v1h-9zM860 220h6v1h-6zM860 221h5v1h-5zM860 222h11v1h-11zM870 222h7v1h-7zM860 223h9v1h-9zM860 224h6v1h-6zM860 225h12v1h-12zM860 226h13v1h-13zM860 227h12v1h-12zM860 228h10v1h-10zM860 229h11v1h-11zM860 234h6v1h-6zM860 235h5v1h-5zM860 236h6v1h-6zM860 237h6v1h-6zM867 234h10v1h-10zM860 240h10v1h-10zM860 241h10v1h-10zM860 242h9v1h-9zM860 243h10v1h-10zM860 244h8v1h-8zM860 245h16v1h-16zM874 245h9v1h-9zM860 248h7v1h-7zM860 249h4v1h-4zM865 249h3v1h-3zM860 251h8v1h-8zM860 252h9v1h-9zM860 253h11v1h-11zM860 254h15v1h-15zM860 255h13v1h-13zM860 257h10v1h-10zM860 258h9v1h-9zM860 259h10v1h-10zM860 260h14v1h-14zM860 261h16v1h-16zM860 262h15v1h-15zM875 262h7v1h-7zM860 263h16v1h-16zM860 264h15v1h-15zM860 265h16v1h-16zM860 266h17v1h-17zM860 267h8v1h-8zM867 267h3v1h-3zM860 268h13v1h-13zM860 269h15v1h-15zM860 271h12v1h-12zM860 272h13v1h-13zM860 273h12v1h-12zM860 274h13v1h-13zM860 275h14v1h-14zM860 276h9v1h-9zM860 277h13v1h-13zM860 278h13v1h-13zM871 278h10v1h-10zM860 279h13v1h-13zM860 280h12v1h-12zM860 281h14v1h-14zM860 282h15v1h-15zM873 281h10v1h-10zM860 284h11v1h-11zM860 285h13v1h-13zM860 286h15v1h-15zM873 286h5v1h-5zM860 287h11v1h-11zM860 288h11v1h-11zM860 290h12v1h-12zM860 291h11v1h-11zM872 290h9v1h-9zM860 292h15v1h-15zM860 293h11v1h-11zM860 294h12v1h-12zM860 295h13v1h-13zM860 296h15v1h-15zM860 297h15v1h-15zM860 298h14v1h-14zM875 296h3v1h-3zM860 299h12v1h-12zM860 300h10v1h-10zM860 301h10v1h-10zM860 302h12v1h-12zM860 303h8v1h-8zM860 304h10v1h-10zM860 305h11v1h-11zM860 306h11v1h-11zM860 307h7v1h-7zM860 308h8v1h-8zM860 309h9v1h-9zM860 310h9v1h-9zM860 311h10v1h-10zM869 309h6v1h-6zM860 312h5v1h-5zM860 313h8v1h-8zM867 313h4v1h-4zM860 318h15v1h-15zM874 318h6v1h-6zM860 319h10v1h-10zM860 320h13v1h-13zM860 322h14v1h-14zM860 323h8v1h-8zM860 324h6v1h-6zM860 325h10v1h-10zM860 326h8v1h-8zM860 327h10v1h-10zM860 328h7v1h-7zM860 329h10v1h-10zM860 330h16v1h-16zM860 331h16v1h-16zM860 333h16v1h-16zM860 334h14v1h-14zM860 335h15v1h-15zM860 337h12v1h-12zM860 338h9v1h-9zM860 339h9v1h-9zM860 341h10v1h-10zM860 342h10v1h-10zM860 343h13v1h-13zM860 346h7v1h-7zM860 347h4v1h-4zM860 348h5v1h-5zM860 349h3v1h-3zM860 350h5v1h-5zM860 351h8v1h-8zM860 352h8v1h-8zM860 353h13v1h-13zM874 353h10v1h-10zM860 354h12v1h-12zM873 354h3v1h-3zM860 355h7v1h-7zM860 356h9v1h-9zM860 357h10v1h-10zM860 360h11v1h-11zM860 361h13v1h-13zM860 362h9v1h-9zM860 363h10v1h-10zM860 364h6v1h-6zM860 365h7v1h-7zM860 367h9v1h-9zM860 368h11v1h-11zM860 369h9v1h-9zM860 370h12v1h-12zM860 371h9v1h-9zM860 372h8v1h-8zM870 369h9v1h-9zM860 373h7v1h-7zM860 374h7v1h-7zM860 375h5v1h-5zM865 374h5v1h-5zM860 376h12v1h-12zM860 377h8v1h-8zM860 378h11v1h-11zM860 379h7v1h-7zM860 380h9v1h-9zM869 380h10v1h-10zM860 383h17v1h-17zM860 384h14v1h-14zM860 385h16v1h-16zM860 386h15v1h-15zM860 387h14v1h-14zM875 385h6v1h-6zM860 388h15v1h-15zM860 389h16v1h-16zM875 388h4v1h-4zM860 393h9v1h-9zM860 394h9v1h-9zM860 395h9v1h-9zM867 395h3v1h-3zM860 396h7v1h-7zM860 397h7v1h-7zM860 398h7v1h-7zM860 399h4v1h-4zM860 400h6v1h-6zM860 401h11v1h-11zM860 402h8v1h-8zM860 403h9v1h-9zM860 404h7v1h-7zM869 403h9v1h-9zM860 406h12v1h-12zM860 407h9v1h-9zM860 408h11v1h-11zM860 409h10v1h-10zM860 410h8v1h-8zM860 411h8v1h-8zM860 412h10v1h-10zM860 413h7v1h-7zM860 414h11v1h-11zM860 415h12v1h-12zM860 416h9v1h-9zM860 417h13v1h-13zM860 418h9v1h-9zM871 415h10v1h-10zM860 421h11v1h-11zM871 421h3v1h-3zM860 422h13v1h-13zM860 423h13v1h-13zM860 424h13v1h-13zM860 425h7v1h-7zM860 426h6v1h-6zM860 427h11v1h-11zM860 428h11v1h-11zM860 429h10v1h-10zM860 430h8v1h-8zM870 429h5v1h-5zM860 431h10v1h-10zM860 432h8v1h-8zM860 433h9v1h-9zM860 434h7v1h-7zM860 435h9v1h-9zM860 436h8v1h-8zM860 437h5v1h-5zM860 438h13v1h-13zM860 439h12v1h-12zM860 440h7v1h-7zM860 441h9v1h-9zM867 441h9v1h-9zM860 442h16v1h-16zM860 443h16v1h-16zM860 444h15v1h-15zM860 445h14v1h-14zM860 446h15v1h-15zM860 447h13v1h-13zM875 447h8v1h-8zM860 448h10v1h-10zM860 449h11v1h-11zM860 450h10v1h-10zM860 451h14v1h-14zM872 451h4v1h-4zM860 452h9v1h-9zM860 453h6v1h-6zM860 454h7v1h-7zM860 455h9v1h-9zM860 457h15v1h-15zM860 458h16v1h-16zM860 459h12v1h-12zM860 460h8v1h-8zM860 461h10v1h-10zM860 462h7v1h-7zM860 463h4v1h-4zM860 464h7v1h-7zM860 465h11v1h-11zM860 466h11v1h-11zM860 467h10v1h-10zM860 468h12v1h-12zM860 469h12v1h-12zM860 470h12v1h-12zM860 471h16v1h-16zM860 472h16v1h-16zM874 470h8v1h-8zM860 473h11v1h-11zM860 474h9v1h-9zM860 475h7v1h-7zM869 474h4v1h-4zM860 476h12v1h-12zM860 477h13v1h-13zM860 478h14v1h-14zM860 479h14v1h-14zM860 480h7v1h-7zM860 481h7v1h-7zM860 485h11v1h-11zM860 486h15v1h-15zM860 487h14v1h-14zM860 488h12v1h-12zM860 489h12v1h-12zM860 490h10v1h-10zM860 491h11v1h-11zM860 492h10v1h-10zM860 493h12v1h-12zM860 494h14v1h-14zM860 495h12v1h-12zM860 496h14v1h-14zM860 497h16v1h-16zM860 498h6v1h-6zM860 499h6v1h-6zM868 499h9v1h-9zM860 500h14v1h-14zM860 501h14v1h-14zM860 502h14v1h-14zM860 503h13v1h-13zM860 504h16v1h-16zM860 505h14v1h-14zM860 506h14v1h-14zM860 507h16v1h-16zM860 508h10v1h-10zM860 509h11v1h-11zM860 510h11v1h-11zM860 511h7v1h-7zM860 512h9v1h-9zM860 513h10v1h-10zM860 514h8v1h-8zM860 516h9v1h-9zM860 517h10v1h-10zM860 518h7v1h-7zM860 520h11v1h-11zM860 521h10v1h-10zM860 522h12v1h-12zM860 523h15v1h-15zM860 524h11v1h-11zM860 525h12v1h-12zM860 527h14v1h-14zM860 528h7v1h-7zM860 529h6v1h-6zM860 530h5v1h-5zM860 531h13v1h-13zM860 532h13v1h-13zM860 533h17v1h-17zM875 532h4v1h-4zM860 534h11v1h-11zM860 535h14v1h-14zM872 534h7v1h-7zM860 536h9v1h-9zM860 537h9v1h-9zM860 538h11v1h-11zM860 539h8v1h-8zM860 542h13v1h-13zM860 543h14v1h-14zM874 543h3v1h-3zM860 544h9v1h-9zM860 545h10v1h-10zM860 546h9v1h-9zM869 544h3v1h-3zM860 548h11v1h-11zM860 549h10v1h-10zM869 548h3v1h-3zM860 550h15v1h-15zM860 551h7v1h-7zM860 552h9v1h-9zM860 553h9v1h-9zM860 554h9v1h-9zM860 555h9v1h-9zM860 557h15v1h-15zM860 558h3v1h-3zM860 559h4v1h-4zM860 560h7v1h-7zM860 561h4v1h-4zM860 564h9v1h-9zM860 565h9v1h-9zM860 566h13v1h-13zM860 567h13v1h-13zM860 568h12v1h-12zM860 569h9v1h-9zM860 570h11v1h-11zM860 571h12v1h-12zM870 571h8v1h-8zM860 572h16v1h-16zM860 573h14v1h-14zM860 574h13v1h-13zM875 572h3v1h-3zM860 575h12v1h-12zM871 575h3v1h-3zM860 577h11v1h-11zM860 578h14v1h-14zM860 579h11v1h-11zM860 580h14v1h-14zM860 581h15v1h-15zM860 582h15v1h-15zM860 583h14v1h-14zM860 584h12v1h-12zM860 585h12v1h-12zM860 586h12v1h-12zM860 587h13v1h-13zM860 588h12v1h-12zM871 588h4v1h-4zM860 591h12v1h-12zM860 592h12v1h-12zM860 593h12v1h-12zM860 594h8v1h-8zM860 595h11v1h-11zM860 596h8v1h-8zM860 597h8v1h-8zM860 598h11v1h-11zM860 599h12v1h-12zM860 600h9v1h-9zM860 601h11v1h-11zM860 602h9v1h-9zM860 603h11v1h-11zM860 604h10v1h-10zM860 605h10v1h-10zM860 606h9v1h-9zM860 607h8v1h-8zM868 606h10v1h-10zM860 608h9v1h-9zM860 609h7v1h-7zM860 610h9v1h-9zM860 611h9v1h-9zM867 610h3v1h-3zM860 612h11v1h-11zM860 613h8v1h-8zM870 613h3v1h-3zM860 614h16v1h-16zM860 615h14v1h-14zM860 616h13v1h-13zM860 617h10v1h-10zM860 618h13v1h-13zM860 619h12v1h-12zM860 620h11v1h-11zM860 621h10v1h-10zM860 625h15v1h-15zM860 626h15v1h-15zM860 627h13v1h-13zM860 628h16v1h-16zM860 630h15v1h-15zM860 631h17v1h-17zM860 632h14v1h-14zM860 634h12v1h-12zM860 635h11v1h-11zM872 634h3v1h-3zM860 636h7v1h-7zM860 637h10v1h-10zM860 638h10v1h-10zM860 639h9v1h-9zM860 640h8v1h-8zM860 641h8v1h-8zM860 642h6v1h-6zM860 643h7v1h-7zM860 644h9v1h-9zM860 645h7v1h-7zM860 646h13v1h-13zM860 647h14v1h-14zM860 649h15v1h-15zM860 650h16v1h-16zM860 651h3v1h-3zM860 652h7v1h-7zM865 651h4v1h-4zM860 653h9v1h-9zM860 654h8v1h-8zM860 655h10v1h-10zM860 656h12v1h-12zM860 657h9v1h-9zM860 658h8v1h-8zM860 659h9v1h-9zM860 660h7v1h-7zM860 661h7v1h-7zM868 660h4v1h-4zM860 662h12v1h-12zM860 663h12v1h-12zM860 664h13v1h-13zM860 665h12v1h-12zM860 666h13v1h-13zM860 667h15v1h-15zM860 668h12v1h-12zM860 669h5v1h-5zM860 670h8v1h-8zM860 671h5v1h-5zM860 672h9v1h-9zM860 673h10v1h-10zM860 674h9v1h-9zM860 675h13v1h-13zM860 676h9v1h-9zM860 677h13v1h-13zM871 676h3v1h-3zM860 678h10v1h-10zM860 679h13v1h-13zM860 680h11v1h-11zM860 681h9v1h-9zM860 682h11v1h-11zM860 683h12v1h-12zM860 684h10v1h-10zM860 685h13v1h-13zM860 686h15v1h-15zM860 687h14v1h-14zM860 688h7v1h-7zM867 688h9v1h-9zM860 689h9v1h-9zM860 691h11v1h-11zM860 692h11v1h-11zM860 693h9v1h-9zM860 694h15v1h-15zM860 695h15v1h-15zM860 696h14v1h-14zM860 697h14v1h-14zM875 694h5v1h-5zM860 698h14v1h-14zM860 699h10v1h-10zM860 700h12v1h-12zM860 701h11v1h-11zM860 702h14v1h-14zM872 698h10v1h-10zM860 703h13v1h-13zM860 704h11v1h-11zM860 705h9v1h-9zM860 706h10v1h-10zM860 707h12v1h-12zM860 708h9v1h-9zM860 709h8v1h-8zM860 710h10v1h-10zM860 711h10v1h-10zM870 710h3v1h-3zM860 716h13v1h-13zM860 717h12v1h-12zM860 718h13v1h-13zM860 719h16v1h-16zM860 720h15v1h-15zM860 721h17v1h-17zM860 722h10v1h-10zM860 723h14v1h-14zM860 724h14v1h-14zM872 722h6v1h-6zM860 725h12v1h-12zM860 726h9v1h-9zM860 727h10v1h-10zM860 728h13v1h-13zM860 729h11v1h-11zM860 730h11v1h-11zM873 728h10v1h-10zM860 731h4v1h-4zM860 732h3v1h-3zM860 733h7v1h-7zM860 734h13v1h-13zM860 735h13v1h-13zM860 736h12v1h-12zM860 737h11v1h-11zM860 738h13v1h-13zM860 739h15v1h-15zM860 740h7v1h-7zM860 741h7v1h-7zM860 742h7v1h-7zM868 742h5v1h-5zM860 743h12v1h-12zM860 744h10v1h-10zM860 745h10v1h-10zM860 746h12v1h-12zM870 745h8v1h-8zM860 747h11v1h-11zM860 748h11v1h-11zM860 749h14v1h-14zM860 750h12v1h-12zM872 748h4v1h-4zM860 751h7v1h-7zM860 752h8v1h-8zM860 753h5v1h-5zM860 756h5v1h-5zM860 757h11v1h-11zM860 758h6v1h-6zM860 759h3v1h-3zM860 760h3v1h-3zM860 761h7v1h-7zM860 764h8v1h-8zM860 765h11v1h-11zM860 766h11v1h-11zM860 767h9v1h-9zM860 769h7v1h-7zM860 770h6v1h-6zM860 771h5v1h-5zM860 772h7v1h-7zM865 772h8v1h-8zM860 773h7v1h-7zM860 774h7v1h-7zM860 775h5v1h-5z" fill="#000"/>
<path d="M871 34h20v2h-20zM866 92h17v1h-17zM869 135h10v1h-10zM872 180h16v2h-16zM871 192h10v2h-10zM863 196h18v2h-18zM873 264h8v1h-8zM872 330h9v1h-9zM863 398h11v1h-11zM867 411h8v2h-8zM873 422h9v1h-9zM870 438h10v1h-10zM870 466h8v1h-8zM871 476h19v1h-19zM872 506h15v2h-15zM867 511h19v1h-19zM866 516h14v2h-14zM871 524h20v2h-20zM867 564h14v2h-14zM865 596h17v2h-17zM873 625h16v2h-16zM869 691h20v2h-20zM871 703h15v1h-15zM872 716h19v2h-19z" fill="#0a0a38"/>
<rect x="860" y="18" width="80" height="1" fill="#909090"/>
<rect x="860" y="96" width="80" height="1" fill="#909090"/>
<rect x="860" y="174" width="80" height="1" fill="#909090"/>
<rect x="860" y="252" width="80" height="1" fill="#909090"/>
<rect x="860" y="330" width="80" height="1" fill="#909090"/>
<rect x="860" y="408" width="80" height="1" fill="#909090"/>
<rect x="860" y="486" width="80" height="1" fill="#909090"/>
<rect x="860" y="564" width="80" height="1" fill="#909090"/>
<rect x="860" y="642" width="80" height="1" fill="#909090"/>
<rect x="860" y="720" width="80" height="1" fill="#909090"/>
<polyline points="861,3 861,20 864,22 867,24 869,27 867.78,30 870.187,33 870.779,35 868.477,38 870.623,41 870.682,43 867.578,46 868.067,48 867.487,50 870.992,52 870.061,54 867.524,56 867.468,59 867.672,61 870.211,64 870.99,66 870.91,69 867.617,71 867.014,73 871.028,76 867.548,78 870.827,81 870.371,83 870.209,86 867.966,88 867.944,91 870.397,93 870.84,96 867.751,98 871.478,100 870.126,102 870.192,105 870.81,108 868.371,110 868.409,112 867.4,114 870.317,116 870.774,119 870.793,121 870.315,124 867.884,126 870.852,128 871.268,130 867.934,132 871.285,134 870.287,136 867.095,139 867.544,142 868.317,145 867.304,147 870.682,150 868.279,152 869.525,154 867.05,156 870.845,158 867.563,161 870.963,163 870.615,165 867.672,167 870.443,169 870.561,172 870.147,175 870.996,177 867.229,180 870.181,182 867.065,185 869.987,188 868.016,190 870.027,193 870.608,196 867.707,198 870.673,200 870.214,202 870.709,204 870.951,207 867.61,209 867.04,212 871.305,214 870.781,216 868.2,218 869.582,221 867.368,223 868.317,226 872,230 875,234 876,240 879,243 884,245.5 891,247 895,249 903,251 908,252 897,254 903,256 905,258.5 897,260 885,261 876,263 880,265 883,268 873,270 870,274 869,280 865,283 870,286 867.93,289 867.809,291 867.956,293 867.208,296 867.988,298 867.823,300 868.034,303 867.536,305 867.269,307 870.211,309 867.667,312 871.093,315 867.481,317 869.541,320 870.096,322 867.68,324 871.07,326 870.631,328 867.696,330 870.019,332 867.901,334 867.758,336 867.818,338 870.342,340 870.893,343 868.12,346 870.829,349 868.222,352 870.955,354 871.479,357 870.363,359 870.048,361 869.973,364 870.958,366 870.834,368 870.409,370 868.228,372 869.721,374 869.546,377 867.247,379 870.375,382 868.364,384 870.607,386 867.541,388 867.85,390 867.319,392 867.945,395 870.089,398 871.404,400 868.03,402 867.828,404 871.062,407 870.515,410 869.576,413 867.095,416 870.044,418 870.11,420 870.659,422 870.265,425 867.576,427 867.609,429 867.519,432 870.211,435 867.661,437 870.672,440 867.693,442 867.154,445 870.619,448 868.064,451 867.038,454 870.991,456 869.659,459 867.695,461 867.531,463 869.882,465 870.204,467 871.239,469 867.846,471 867.725,473 867.836,475 870.641,478 870.402,480 867.386,482 867.888,484 867.848,486 870.877,488 869.578,490 870.89,492 870.05,494 870.053,496 870.875,498 867.293,501 870.482,503 871.097,505 867.836,508 870.239,511 867.793,513 870.921,515 871.236,517 870.526,519 867.262,521 870.678,524 867.512,526 868.236,528 870.624,530 868.069,533 868.433,535 869.58,537 870.077,539 870.228,541 870.86,543 867.985,545 871.236,547 870.147,549 867.605,551 871.292,553 870.855,555 870.523,557 869.952,560 867.423,562 870.164,565 870.671,567 867.957,569 871.069,571 871.43,574 871.108,577 870.601,580 867.618,582 870.828,584 870.244,586 867.656,588 869.976,591 867.619,593 868.292,595 869.856,598 870.014,600 870.208,603 867.069,605 870.165,608 870.915,610 867.055,613 871.337,616 870.573,618 867.104,620 870.986,622 867.007,625 867.849,628 870.46,630 867.834,633 867.207,635 867.208,637 870.706,639 870,641 868.188,643 867.994,645 870.929,647 867.958,649 867.88,651 869.679,653 867.535,655 868.408,657 870.176,659 870.525,661 870.776,663 867.23,665 870.151,667 870.026,669 867.657,671 870.82,673 867.522,675 870.316,677 869.777,679 867.201,681 870.047,684 870.513,686 867.186,689 867.604,691 868.399,694 870.266,696 871.092,699 870.933,702 867.824,704 868.13,706 867.816,708 871.187,710 869.544,712 867.843,714 870.34,717 870.626,719 870.947,722 868.494,724 868.16,727 871.088,729 870.459,732 870.469,734 867.804,737 870.529,739 870.828,741 869.609,743 871.441,745 870.766,747 870.729,750 867.625,753 871.114,756 868.345,759 868,765 866,770 863,773 861,776 861,781" fill="none" stroke="#c02828" stroke-width="1.4" shape-rendering="crispEdges"/>
<polyline points="861,11.5 866,14 872,18 876,20 880,25 882,27 880,27.5 885,28.5 887.5,29.75 886,31 886,32.5 883,34 884,35.25 882,36.5 881.5,37.75 884,39 883,40.5 885,42 882,44 886,45 883,46.5 884,48 882,50 886,52 883.5,53.5 885,55 888.5,57.5 889,60 887,61.25 881,62.5 886,64 887,65.5 884,67 884.5,69 882,71 879.5,72.5 880,74 884,76 884.5,77.5 882,79 885,81 884,82.5 886,84 886,86 883,88 888,90 884,91.5 884,93 880.5,94.5 881,96 884,97.5 889,99 883,101 883.5,103 887,105 884,107 889,109 885,111 888,112.5 888,114 892,116.5 893,119 892,120 893.5,122.5 891,125 887,127 887,129 891,131 894,133 894,135 891,137 896,139 891,141 895,143 895,145 898,147 897,148.5 892,150 899,152 894,154 893,156 895,158 894.5,159.5 897,161 900,163 899,165 896.5,166.5 897,168 899.5,169.5 899,171 900.5,173 899,175 896.5,176.5 897,178 899.7,180 896.5,182 896.3,184 899.15,185.5 898,187 901.8,188.5 900,190 903,191.5 902,193 901.5,194.75 898,196.5 893,197.4 897,199 896,201 899.6,203 903.8,205 904,207 902.25,209.5 903.5,212 905.25,214.5 904,217 907.5,219.5 907,222 907,223.5 904,225 908,227 908.5,228.5 906,230 910,233.5 920,234.5 912,236 917,238 913,239.5 919,241 926,242.5 928,244 935,245 941,246.5 941,260.5 920,262 930,264 933,266 931,268 916,270 898,271 884,273 881,276 884,280 886,284 883,286 884,290 881,292 883,294 882,296 885,298 885,299.5 889,301 882,303 882,304.5 886,306 883,308 882,309.5 885,311 886,312.5 884,314 882.5,316 885,318 882,319 881,320.5 884,322 883,324 886,326 886,328 883,330 883,331.5 887,333 886.5,334.5 882,336 882.5,337.5 886,339 889.5,340.5 889,342 883.5,343.5 882,345 882,346.5 885,348 884,350 888.5,351.25 889,352.5 884.5,353.75 883,355 883,356.5 886,358 887,359.5 884,361 881.5,362.5 882,364 885,365.5 884,367 883.5,368.5 887,370 887,371.5 883,373 881,375 882,377 881.5,378.5 884,380 880.5,382 881,384 885.5,386 887,388 886.5,389.5 883,391 885,393 883,395 882,396.5 885,398 884.5,400.5 881,403 883.5,404.5 883,406 882,408 884,410 882,412 884,414 880.5,416 881,418 882,419.5 886,421 888.5,422.5 887,424 886,425.5 882,427 885,429 884,431 881.5,432.5 882,434 881,435.5 884,437 881.5,439 883,441 889,443 882,445 885.5,447.5 886,450 885.5,452 882,454 881,455.5 884,457 887,459 886,461 882,463 881,465 884,467 883,468.5 885,470 886,471.5 884,473 881,475 880,476.5 883,478 886.5,479.5 886,481 884,483 885,484.5 883,486 886,487 885.5,488.5 882,490 881,492 884,494 881,496 882,498 884.5,499.5 884,501 881.5,502.5 882,504 884,505.5 883,507 881,509 884,511 882,513 885,514.5 885,516 883,518 883.5,519.5 881,521 881,522.5 885,524 886,525.5 883,527 882,528.5 885,530 881,532 880.5,534 883,536 885.5,537.5 885,539 884.5,541 881,543 884,544.5 883,546 883,547.5 887,549 883,551 886,553 882.5,554.5 883,556 885.5,557.5 884,559 887,560 887,561.5 883,563 882,564.5 885,566 882,568 881.5,569.5 885,571 881,573 880,575 884,576.5 885,578 886,580 883,582 880,584 880,586 880,588 884,590 883.5,591.5 880,593 880,594.5 884,596 886.5,597.5 885,599 882,601 885,602.5 884,604 885,606 886,607.5 883,609 882,610 882,611.5 885,613 882,614.5 883,616 885.5,617.5 885,619 882.5,620.5 883,622 886,624 882,626 882,628 885,630 883,632 886,633.5 885,635 886,636.5 883,638 882.5,639.5 886,641 882.5,642.5 883,644 886,645.5 885,647 882,648.5 883,650 880,652 883,653.5 883,655 886.5,656.5 886,658 883.5,659.5 884,661 886.5,662.5 885,664 884.5,665.5 880,667 883,668.5 883,670 884.5,671.5 882,673 881.5,675 884,677 884,678.5 887,680 882,682 884.5,684 883,686 882.5,687.5 879,689 882.5,690.5 883,692 882.5,693.5 885,695 883,697 887,698.5 888,700 882,702 882.5,703.5 886,705 886,706.5 883,708 883,710 880.5,711.5 881,713 881,714.5 884,716 884.5,717.5 882,719 885,720.5 884,722 880.5,724 881,726 884,728 885,729.5 882,731 885,733 881.5,734.5 882,736 885,738 886,739.5 883,741 880,743 881,745 884,747.5 884,750 880,752 883.5,753.5 884,755 886,757 885,758.5 881,760 884,761.5 884,763 885,764.5 883,766 878,768 879,771 876,773 872,775 869,777 871,778.5 866,781" fill="none" stroke="#3ee03e" stroke-width="1" shape-rendering="crispEdges"/>
<path d="M935.5,781.5 Q936.5,777.5 939.5,777" fill="none" stroke="#3ee03e" stroke-width="1"/>
<circle cx="879.5" cy="161.4" r="2.9" fill="#000" stroke="#c02828" stroke-width="1"/>
<rect x="940" y="0" width="1" height="783" fill="#fff"/><rect x="0" y="782" width="941" height="1" fill="#fff"/>
</svg></body></html>
